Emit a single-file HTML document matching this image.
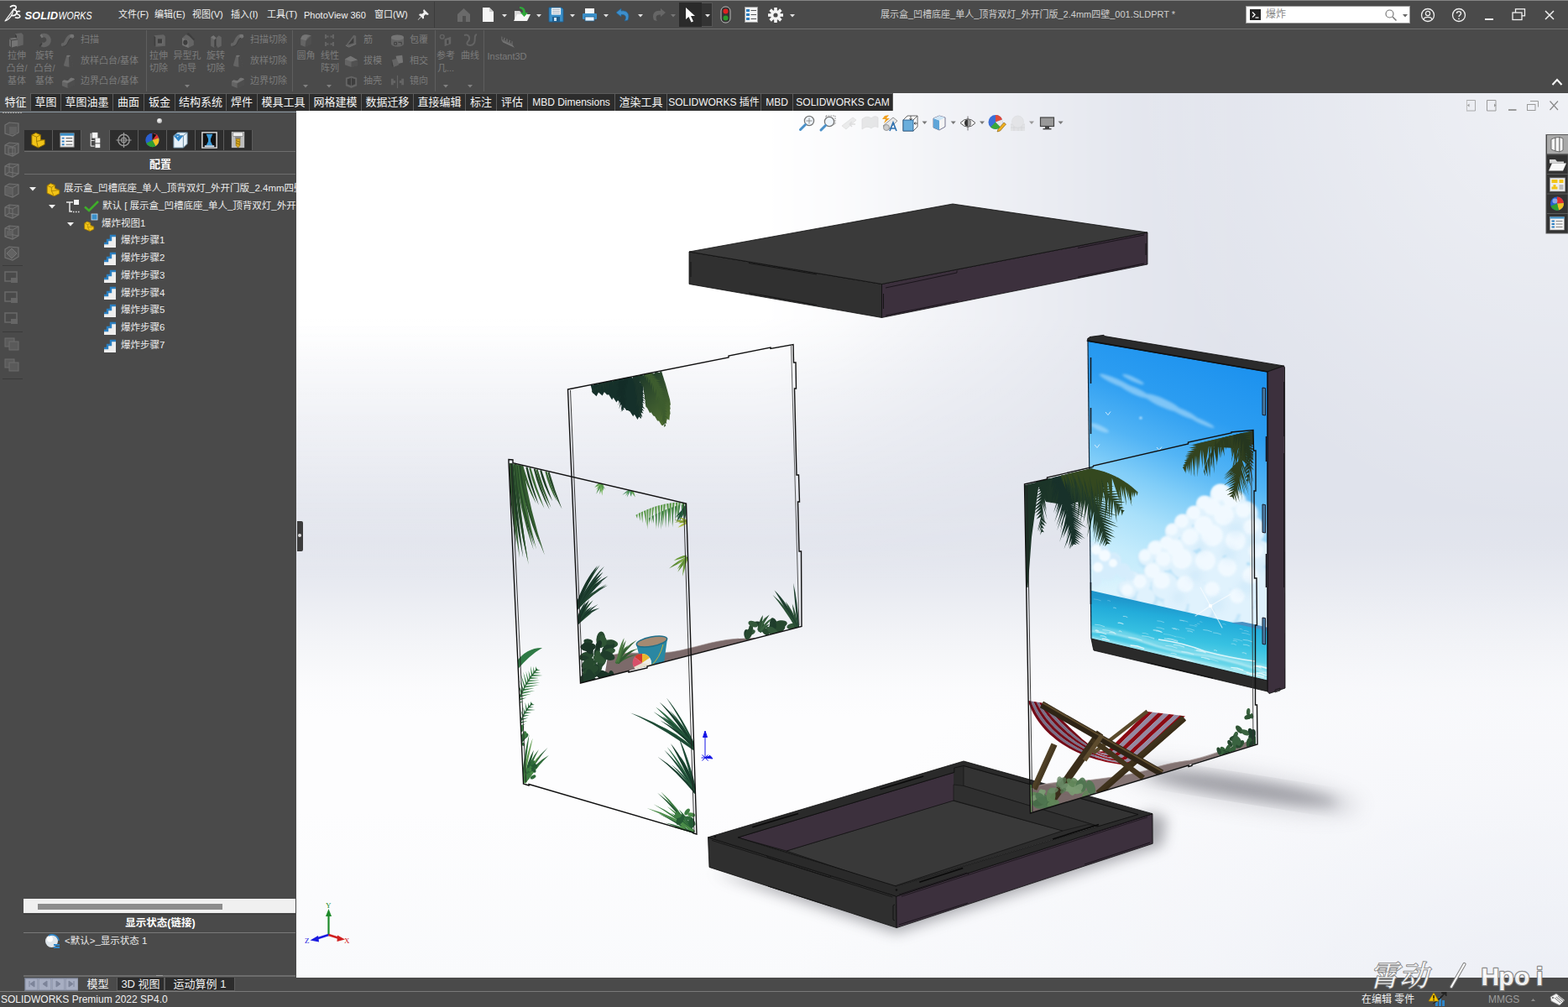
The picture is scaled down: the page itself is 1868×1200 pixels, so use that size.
<!DOCTYPE html>
<html lang="zh"><head><meta charset="utf-8"><title>SOLIDWORKS</title>
<style>
html,body{margin:0;padding:0;background:#4a4a4a;}
body{width:1868px;height:1200px;position:relative;overflow:hidden;font-family:"Liberation Sans",sans-serif;font-size:12px;color:#e8e8e8;}
.abs{position:absolute}
.tx{position:absolute;white-space:nowrap;line-height:1.2;pointer-events:none;font-family:"Liberation Sans","Noto Sans CJK SC",sans-serif}

#vp{position:absolute;left:353px;top:111px;width:1515px;height:1054px;background:#fff;overflow:hidden}
#title{position:absolute;left:0;top:0;width:1868px;height:35px;background:#4a4a4a;border-top:1px solid #858585;border-bottom:1px solid #707070;box-sizing:border-box}
.t{position:absolute;white-space:nowrap;line-height:14px;height:14px}
.menu{color:#f2f2f2;font-size:11px}
.dis{color:#7c7c7c;font-size:11px;text-align:center}
.sep{position:absolute;width:1px;background:#5e5e5e;top:36px;height:73px}
#tabs{position:absolute;left:0;top:111px;height:22px;width:1064px}
.tab{position:absolute;top:0;height:21px;box-sizing:border-box;background:#2c2c2c;border:1px solid #5c5c5c;border-bottom:none;color:#f4f4f4;font-size:13px;line-height:20px;text-align:center;white-space:nowrap;overflow:hidden}
.tab.sel{background:#4a4a4a;border-color:#4a4a4a}
#left{position:absolute;left:0;top:133px;width:353px;height:1031px;background:#4a4a4a;overflow:hidden}
.fmtab{position:absolute;top:22px;height:24px;width:33px;background:#2d2d2d;border-right:1px solid #5c5c5c;box-sizing:content-box}
.row{position:absolute;white-space:nowrap;font-size:11.5px;color:#ececec;line-height:16px;height:16px}
.hl{position:absolute;height:1px;background:#6e6e6e}
#btabs{position:absolute;left:0;top:1165px;width:1868px;height:16px;background:#4a4a4a}
.btab{position:absolute;top:0;height:16px;box-sizing:border-box;background:#2c2c2c;border:1px solid #5c5c5c;border-top:none;color:#f0f0f0;font-size:13px;line-height:16px;text-align:center;white-space:nowrap}
#status{position:absolute;left:0;top:1181px;width:1868px;height:19px;background:#4a4a4a;border-top:1px solid #7a7a7a;box-sizing:border-box}

</style></head><body>
<div id="vp"><svg width="1515" height="1054" viewBox="353 111 1515 1054" style="display:block"><defs><linearGradient id="wv" gradientUnits="userSpaceOnUse" x1="0" y1="111" x2="0" y2="700"><stop offset="0.4567" stop-color="#fff" stop-opacity="1"/><stop offset="0.4907" stop-color="#fff" stop-opacity="0.93"/><stop offset="0.5756" stop-color="#fff" stop-opacity="0.72"/><stop offset="0.6604" stop-color="#fff" stop-opacity="0.53"/><stop offset="0.7453" stop-color="#fff" stop-opacity="0.36"/><stop offset="0.8302" stop-color="#fff" stop-opacity="0.2"/><stop offset="0.8981" stop-color="#fff" stop-opacity="0.1"/><stop offset="0.9830" stop-color="#fff" stop-opacity="0"/></linearGradient>
<linearGradient id="wh" gradientUnits="userSpaceOnUse" x1="353" y1="0" x2="1868" y2="0"><stop offset="0.3611" stop-color="#ffffff"/><stop offset="0.4271" stop-color="#dbdbdb"/><stop offset="0.4997" stop-color="#999999"/><stop offset="0.5921" stop-color="#545454"/><stop offset="0.6581" stop-color="#262626"/><stop offset="0.7241" stop-color="#0a0a0a"/><stop offset="0.7703" stop-color="#000000"/></linearGradient>
<mask id="mh" maskUnits="userSpaceOnUse" x="353" y="111" width="1515" height="600"><rect x="353" y="111" width="1515" height="600" fill="url(#wh)"/></mask>
<linearGradient id="bgw" gradientUnits="userSpaceOnUse" x1="0" y1="600" x2="0" y2="1165">
<stop offset="0" stop-color="#fff" stop-opacity="0"/><stop offset="0.088" stop-color="#fff" stop-opacity="0.06"/><stop offset="0.177" stop-color="#fff" stop-opacity="0.28"/><stop offset="0.283" stop-color="#fefefe" stop-opacity="0.62"/><stop offset="0.389" stop-color="#fdfdfe" stop-opacity="0.93"/><stop offset="0.45" stop-color="#fdfdfe" stop-opacity="1"/><stop offset="0.65" stop-color="#fdfdfe" stop-opacity="1"/><stop offset="1" stop-color="#f9fafc" stop-opacity="1"/></linearGradient>
<linearGradient id="bgr" gradientUnits="userSpaceOnUse" x1="1300" y1="0" x2="1868" y2="0">
<stop offset="0" stop-color="#f3f4fa" stop-opacity="0"/><stop offset="1" stop-color="#f1f3f9" stop-opacity="1"/></linearGradient>
<radialGradient id="bgtr" gradientUnits="userSpaceOnUse" cx="1868" cy="111" r="520"><stop offset="0" stop-color="#fff" stop-opacity="0.5"/><stop offset="1" stop-color="#fff" stop-opacity="0"/></radialGradient>
<radialGradient id="bgbr" gradientUnits="userSpaceOnUse" cx="1868" cy="1240" r="620" gradientTransform="translate(1868 1240) scale(1.5 1) translate(-1868 -1240)"><stop offset="0" stop-color="#e6e9f2" stop-opacity="0.75"/><stop offset="0.5" stop-color="#e6e9f2" stop-opacity="0.3"/><stop offset="1" stop-color="#e6e9f2" stop-opacity="0"/></radialGradient>
<filter id="b12" x="-30%" y="-60%" width="160%" height="220%"><feGaussianBlur stdDeviation="12"/></filter>
<filter id="b4" x="-20%" y="-20%" width="140%" height="140%"><feGaussianBlur stdDeviation="4"/></filter>
<filter id="b8" x="-30%" y="-30%" width="160%" height="160%"><feGaussianBlur stdDeviation="8"/></filter>
<filter id="b2" x="-20%" y="-20%" width="140%" height="140%"><feGaussianBlur stdDeviation="1.6"/></filter>
<filter id="b1" x="-20%" y="-20%" width="140%" height="140%"><feGaussianBlur stdDeviation="0.8"/></filter>
<clipPath id="cpic"><polygon points="1296.0,406.0 1510.0,443.0 1510.0,811.0 1300.0,761.0"/></clipPath><linearGradient id="sky" gradientUnits="userSpaceOnUse" x1="1470" y1="420" x2="1345" y2="725">
<stop offset="0" stop-color="#1a90ee"/><stop offset="0.25" stop-color="#2c9df1"/><stop offset="0.42" stop-color="#52b4f5"/><stop offset="0.55" stop-color="#80cdf8"/><stop offset="0.68" stop-color="#a9e0fa"/><stop offset="0.82" stop-color="#c6ecfc"/><stop offset="1" stop-color="#d6f2fd"/></linearGradient>
<linearGradient id="sea" gradientUnits="userSpaceOnUse" x1="1405" y1="722" x2="1395" y2="800">
<stop offset="0" stop-color="#1e96cc"/><stop offset="0.18" stop-color="#23acda"/><stop offset="0.5" stop-color="#38c2e2"/><stop offset="1" stop-color="#8ae4ee"/></linearGradient>
<clipPath id="cbg"><polygon points="676.5,464.0 945.0,410.5 955.0,746.5 691.5,814.0"/></clipPath><linearGradient id="lobe" gradientUnits="userSpaceOnUse" x1="760" y1="450" x2="800" y2="500"><stop offset="0" stop-color="#1f3a2a"/><stop offset="1" stop-color="#4f6e31"/></linearGradient><clipPath id="cfg"><polygon points="606.0,550.5 817.5,600.0 830.0,994.0 623.5,932.5"/></clipPath><clipPath id="crg"><polygon points="1220.5,577.0 1493.0,513.0 1496.0,887.0 1227.5,969.0"/></clipPath></defs><rect x="353" y="111" width="1515" height="1054" fill="#e0e3ec"/><rect x="353" y="111" width="1515" height="600" fill="url(#wv)" mask="url(#mh)"/>
<rect x="353" y="600" width="1515" height="565" fill="url(#bgw)"/>
<rect x="1348" y="111" width="520" height="520" fill="url(#bgtr)"/>
<rect x="800" y="600" width="1068" height="565" fill="url(#bgbr)"/>
<polygon points="850.0,1040.0 1068.0,1112.0 1385.0,1008.0 1390.0,975.0 1372.0,968.0 1068.0,1068.0" fill="#6a6a72" stroke="none" stroke-width="0.8" filter="url(#b8)" opacity="0.55"/>
<ellipse cx="1480" cy="939" rx="115" ry="11" transform="rotate(9 1480 939)" fill="#66666e" opacity="0.5" filter="url(#b8)"/>
<ellipse cx="1480" cy="940" rx="140" ry="20" transform="rotate(9 1480 940)" fill="#70707a" opacity="0.25" filter="url(#b12)"/>
<polygon points="821.0,300.0 1050.5,338.5 1050.5,378.5 821.0,338.5" fill="#303030" stroke="#0c0c0c" stroke-width="0.8" />
<polygon points="1050.5,338.5 1367.0,277.0 1367.0,315.0 1050.5,378.5" fill="#3c303d" stroke="#0c0c0c" stroke-width="0.8" />
<polygon points="821.0,300.0 1135.0,243.0 1367.0,277.0 1050.5,338.5" fill="#3a3a3a" stroke="#0c0c0c" stroke-width="0.8" />
<polyline points="892.0,313.5 973.0,327.0" fill="none" stroke="#141414" stroke-width="1" />
<polyline points="892.0,349.0 973.0,363.5" fill="none" stroke="#141414" stroke-width="1" />
<polyline points="1055.0,343.0 1140.0,325.0 1140.0,322.5" fill="none" stroke="#1a141b" stroke-width="1" />
<polyline points="1055.0,376.0 1141.0,358.5" fill="none" stroke="#1a141b" stroke-width="1" />
<polyline points="1284.0,295.5 1363.0,280.0" fill="none" stroke="#1a141b" stroke-width="1" />
<polyline points="1284.0,330.0 1363.0,314.0" fill="none" stroke="#1a141b" stroke-width="1" />
<polyline points="823.0,312.0 823.0,330.0" fill="none" stroke="#141414" stroke-width="1" />
<polyline points="1052.5,350.0 1052.5,368.0" fill="none" stroke="#141414" stroke-width="1" />
<polyline points="1365.0,290.0 1365.0,304.0" fill="none" stroke="#141414" stroke-width="1" />
<polygon points="843.5,997.8 1067.8,1068.1 1068.2,1105.6 845.0,1033.4" fill="#2f2f2f" stroke="#0c0c0c" stroke-width="0.8" />
<polygon points="1067.8,1068.1 1373.0,969.7 1373.2,1005.3 1068.2,1105.6" fill="#3c303d" stroke="#0c0c0c" stroke-width="0.8" />
<polygon points="876.0,997.5 1136.8,913.8 1149.0,911.5 1357.0,970.0 1067.5,1056.0" fill="#2c2c2c" stroke="none" stroke-width="0.8" />
<polygon points="936.9,1014.0 1135.0,954.0 1266.0,990.0 1064.0,1056.5" fill="#393939" stroke="#111" stroke-width="0.7" />
<polygon points="879.0,998.0 1136.8,920.4 1136.8,953.8 936.9,1014.0" fill="#3c303d" stroke="#111" stroke-width="0.7" />
<polygon points="1136.0,916.5 1148.0,912.5 1148.0,936.5 1136.0,935.0" fill="#2a2a2a" stroke="none" stroke-width="0.8" />
<polygon points="1148.0,912.5 1356.0,970.6 1310.0,985.0 1148.0,936.5" fill="#333333" stroke="#111" stroke-width="0.6" />
<polygon points="1136.0,935.0 1148.0,936.5 1310.0,985.0 1296.0,982.5 1266.0,990.0 1136.0,953.8" fill="#2f2f2f" stroke="#111" stroke-width="0.6" />
<path d="M843.5,997.8 1148.0,907.0 1373.0,969.7 1067.8,1068.1Z M879.0,998.0 1136.8,920.4 1136.8,915.0 1148.0,912.5 1356.0,970.6 1067.5,1056.0Z" fill="#2a2a2a" fill-rule="evenodd" stroke="#0c0c0c" stroke-width="0.8"/>
<polyline points="896.2,985.8 951.0,969.4" fill="none" stroke="#0a0a0a" stroke-width="1.6" />
<polyline points="1048.5,940.4 1100.2,924.9" fill="none" stroke="#0a0a0a" stroke-width="1.6" />
<polyline points="1095.3,1051.3 1147.2,1034.5" fill="none" stroke="#0a0a0a" stroke-width="1.6" />
<polyline points="1254.0,1000.1 1309.0,982.4" fill="none" stroke="#0a0a0a" stroke-width="1.6" />
<polyline points="848.0,1001.4 1063.3,1068.9" fill="none" stroke="#111" stroke-width="0.8" />
<polyline points="1073.9,1068.3 1366.9,973.9" fill="none" stroke="#1a141b" stroke-width="0.8" />
<polyline points="913.0,1019.0 915.0,1022.0 988.0,1045.5 990.0,1044.0" fill="none" stroke="#141414" stroke-width="1" />
<polyline points="915.0,1056.0 990.0,1080.0" fill="none" stroke="#141414" stroke-width="1" />
<polyline points="1071.0,1066.0 1152.0,1040.0 1154.0,1042.0" fill="none" stroke="#1a141b" stroke-width="1" />
<polyline points="1071.0,1102.0 1153.0,1076.0" fill="none" stroke="#1a141b" stroke-width="1" />
<polyline points="1292.0,996.0 1370.0,971.0" fill="none" stroke="#1a141b" stroke-width="1" />
<polyline points="1292.0,1030.0 1370.0,1004.0" fill="none" stroke="#1a141b" stroke-width="1" />
<polyline points="1066.0,1078.0 1064.0,1079.0 1064.0,1096.0 1066.0,1097.0" fill="none" stroke="#141414" stroke-width="1" />
<circle cx="852" cy="997" r="1.2" fill="#111"/><circle cx="1068" cy="1060.5" r="1.3" fill="#111"/>
<g clip-path="url(#cpic)"><polygon points="1296.0,406.0 1510.0,443.0 1510.0,811.0 1300.0,761.0" fill="url(#sky)" stroke="none" stroke-width="0.8" /><g filter="url(#b2)" opacity="0.55"><ellipse cx="1330" cy="455" rx="22" ry="3.5" fill="#bfe4fb" transform="rotate(24 1330 455)"/><ellipse cx="1352" cy="466" rx="20" ry="4" fill="#bfe4fb" transform="rotate(24 1352 466)"/><ellipse cx="1385" cy="480" rx="24" ry="5" fill="#bfe4fb" transform="rotate(24 1385 480)"/><ellipse cx="1410" cy="492" rx="18" ry="3.5" fill="#bfe4fb" transform="rotate(24 1410 492)"/><ellipse cx="1432" cy="503" rx="16" ry="2.5" fill="#bfe4fb" transform="rotate(24 1432 503)"/><ellipse cx="1350" cy="452" rx="14" ry="2.5" fill="#bfe4fb" transform="rotate(24 1350 452)"/><ellipse cx="1310" cy="510" rx="12" ry="3" fill="#bfe4fb" transform="rotate(24 1310 510)"/></g><ellipse cx="1400" cy="725" rx="130" ry="40" fill="#dff4fd" opacity="0.75" filter="url(#b8)"/><g filter="url(#b2)" opacity="0.6"><circle cx="1456.5" cy="592.5" r="14.5" fill="#b4dcf7"/><circle cx="1471.5" cy="600.5" r="15.5" fill="#b4dcf7"/><circle cx="1484.5" cy="614.5" r="16.5" fill="#b4dcf7"/><circle cx="1448.5" cy="608.5" r="14.5" fill="#b4dcf7"/><circle cx="1463.5" cy="622.5" r="19.5" fill="#b4dcf7"/><circle cx="1491.5" cy="634.5" r="18.5" fill="#b4dcf7"/><circle cx="1438.5" cy="630.5" r="16.5" fill="#b4dcf7"/><circle cx="1421.5" cy="644.5" r="15.5" fill="#b4dcf7"/><circle cx="1449.5" cy="647.5" r="21.5" fill="#b4dcf7"/><circle cx="1479.5" cy="654.5" r="21.5" fill="#b4dcf7"/><circle cx="1501.5" cy="662.5" r="17.5" fill="#b4dcf7"/><circle cx="1403.5" cy="657.5" r="14.5" fill="#b4dcf7"/><circle cx="1389.5" cy="670.5" r="13.5" fill="#b4dcf7"/><circle cx="1413.5" cy="674.5" r="19.5" fill="#b4dcf7"/><circle cx="1441.5" cy="677.5" r="21.5" fill="#b4dcf7"/><circle cx="1469.5" cy="684.5" r="21.5" fill="#b4dcf7"/><circle cx="1496.5" cy="692.5" r="19.5" fill="#b4dcf7"/><circle cx="1376.5" cy="684.5" r="13.5" fill="#b4dcf7"/><circle cx="1361.5" cy="697.5" r="12.5" fill="#b4dcf7"/><circle cx="1389.5" cy="700.5" r="17.5" fill="#b4dcf7"/><circle cx="1419.5" cy="704.5" r="19.5" fill="#b4dcf7"/><circle cx="1449.5" cy="710.5" r="19.5" fill="#b4dcf7"/><circle cx="1479.5" cy="717.5" r="18.5" fill="#b4dcf7"/><circle cx="1346.5" cy="706.5" r="10.5" fill="#b4dcf7"/><circle cx="1366.5" cy="714.5" r="12.5" fill="#b4dcf7"/><circle cx="1401.5" cy="722.5" r="15.5" fill="#b4dcf7"/><circle cx="1431.5" cy="728.5" r="15.5" fill="#b4dcf7"/><circle cx="1506.5" cy="707.5" r="15.5" fill="#b4dcf7"/><circle cx="1509.5" cy="727.5" r="15.5" fill="#b4dcf7"/><circle cx="1461.5" cy="732.5" r="15.5" fill="#b4dcf7"/><circle cx="1491.5" cy="740.5" r="14.5" fill="#b4dcf7"/><circle cx="1367.5" cy="666.5" r="11.5" fill="#b4dcf7"/><circle cx="1379.5" cy="657.5" r="12.5" fill="#b4dcf7"/><circle cx="1393.5" cy="652.5" r="12.5" fill="#b4dcf7"/><circle cx="1399.5" cy="636.5" r="11.5" fill="#b4dcf7"/><circle cx="1411.5" cy="626.5" r="12.5" fill="#b4dcf7"/><circle cx="1425.5" cy="616.5" r="12.5" fill="#b4dcf7"/><circle cx="1437.5" cy="604.5" r="12.5" fill="#b4dcf7"/><circle cx="1351.5" cy="692.5" r="10.5" fill="#b4dcf7"/><circle cx="1341.5" cy="702.5" r="9.5" fill="#b4dcf7"/></g><g filter="url(#b1)" opacity="1"><circle cx="1455" cy="590" r="13" fill="#e0f2fd"/><circle cx="1470" cy="598" r="14" fill="#e0f2fd"/><circle cx="1483" cy="612" r="15" fill="#e0f2fd"/><circle cx="1447" cy="606" r="13" fill="#e0f2fd"/><circle cx="1462" cy="620" r="18" fill="#e0f2fd"/><circle cx="1490" cy="632" r="17" fill="#e0f2fd"/><circle cx="1437" cy="628" r="15" fill="#e0f2fd"/><circle cx="1420" cy="642" r="14" fill="#e0f2fd"/><circle cx="1448" cy="645" r="20" fill="#e0f2fd"/><circle cx="1478" cy="652" r="20" fill="#e0f2fd"/><circle cx="1500" cy="660" r="16" fill="#e0f2fd"/><circle cx="1402" cy="655" r="13" fill="#e0f2fd"/><circle cx="1388" cy="668" r="12" fill="#e0f2fd"/><circle cx="1412" cy="672" r="18" fill="#e0f2fd"/><circle cx="1440" cy="675" r="20" fill="#e0f2fd"/><circle cx="1468" cy="682" r="20" fill="#e0f2fd"/><circle cx="1495" cy="690" r="18" fill="#e0f2fd"/><circle cx="1375" cy="682" r="12" fill="#e0f2fd"/><circle cx="1360" cy="695" r="11" fill="#e0f2fd"/><circle cx="1388" cy="698" r="16" fill="#e0f2fd"/><circle cx="1418" cy="702" r="18" fill="#e0f2fd"/><circle cx="1448" cy="708" r="18" fill="#e0f2fd"/><circle cx="1478" cy="715" r="17" fill="#e0f2fd"/><circle cx="1345" cy="704" r="9" fill="#e0f2fd"/><circle cx="1365" cy="712" r="11" fill="#e0f2fd"/><circle cx="1400" cy="720" r="14" fill="#e0f2fd"/><circle cx="1430" cy="726" r="14" fill="#e0f2fd"/><circle cx="1505" cy="705" r="14" fill="#e0f2fd"/><circle cx="1508" cy="725" r="14" fill="#e0f2fd"/><circle cx="1460" cy="730" r="14" fill="#e0f2fd"/><circle cx="1490" cy="738" r="13" fill="#e0f2fd"/><circle cx="1366" cy="664" r="10" fill="#e0f2fd"/><circle cx="1378" cy="655" r="11" fill="#e0f2fd"/><circle cx="1392" cy="650" r="11" fill="#e0f2fd"/><circle cx="1398" cy="634" r="10" fill="#e0f2fd"/><circle cx="1410" cy="624" r="11" fill="#e0f2fd"/><circle cx="1424" cy="614" r="11" fill="#e0f2fd"/><circle cx="1436" cy="602" r="11" fill="#e0f2fd"/><circle cx="1350" cy="690" r="9" fill="#e0f2fd"/><circle cx="1340" cy="700" r="8" fill="#e0f2fd"/></g><g filter="url(#b2)" opacity="0.9"><circle cx="1364" cy="662" r="7" fill="#f3faff"/><circle cx="1376" cy="653" r="8" fill="#f3faff"/><circle cx="1390" cy="647" r="8" fill="#f3faff"/><circle cx="1396" cy="631" r="7" fill="#f3faff"/><circle cx="1408" cy="621" r="8" fill="#f3faff"/><circle cx="1422" cy="611" r="8" fill="#f3faff"/><circle cx="1434" cy="599" r="8" fill="#f3faff"/><circle cx="1453" cy="587" r="10" fill="#f3faff"/><circle cx="1467" cy="595" r="10" fill="#f3faff"/><circle cx="1444" cy="604" r="10" fill="#f3faff"/><circle cx="1458" cy="614" r="12" fill="#f3faff"/><circle cx="1481" cy="608" r="9" fill="#f3faff"/><circle cx="1434" cy="626" r="11" fill="#f3faff"/><circle cx="1418" cy="640" r="10" fill="#f3faff"/><circle cx="1444" cy="638" r="13" fill="#f3faff"/><circle cx="1472" cy="644" r="12" fill="#f3faff"/><circle cx="1400" cy="653" r="10" fill="#f3faff"/><circle cx="1386" cy="666" r="9" fill="#f3faff"/><circle cx="1408" cy="666" r="12" fill="#f3faff"/><circle cx="1436" cy="668" r="12" fill="#f3faff"/><circle cx="1373" cy="680" r="9" fill="#f3faff"/><circle cx="1358" cy="693" r="8" fill="#f3faff"/><circle cx="1384" cy="692" r="10" fill="#f3faff"/><circle cx="1412" cy="696" r="10" fill="#f3faff"/><circle cx="1343" cy="703" r="7" fill="#f3faff"/><circle cx="1490" cy="628" r="9" fill="#f3faff"/><circle cx="1496" cy="656" r="9" fill="#f3faff"/><circle cx="1462" cy="676" r="11" fill="#f3faff"/><circle cx="1490" cy="686" r="10" fill="#f3faff"/><circle cx="1444" cy="702" r="9" fill="#f3faff"/><circle cx="1474" cy="710" r="9" fill="#f3faff"/></g><g filter="url(#b4)" opacity="0.45"><circle cx="1472" cy="630" r="9" fill="#c4e4f8"/><circle cx="1494" cy="646" r="8" fill="#c4e4f8"/><circle cx="1430" cy="652" r="7" fill="#c4e4f8"/><circle cx="1464" cy="660" r="9" fill="#c4e4f8"/><circle cx="1424" cy="686" r="8" fill="#c4e4f8"/><circle cx="1484" cy="700" r="9" fill="#c4e4f8"/><circle cx="1450" cy="720" r="9" fill="#c4e4f8"/><circle cx="1404" cy="712" r="7" fill="#c4e4f8"/><circle cx="1506" cy="676" r="8" fill="#c4e4f8"/></g><g filter="url(#b1)" opacity="0.95"><circle cx="1303" cy="654" r="9" fill="#d5edfc"/><circle cx="1312" cy="660" r="11" fill="#d5edfc"/><circle cx="1326" cy="668" r="10" fill="#d5edfc"/><circle cx="1306" cy="672" r="10" fill="#d5edfc"/><circle cx="1320" cy="680" r="11" fill="#d5edfc"/><circle cx="1338" cy="680" r="9" fill="#d5edfc"/><circle cx="1304" cy="690" r="9" fill="#d5edfc"/><circle cx="1346" cy="686" r="6" fill="#d5edfc"/></g><g filter="url(#b1)" opacity="0.95"><circle cx="1306" cy="655" r="6" fill="#f6fcff"/><circle cx="1316" cy="662" r="7" fill="#f6fcff"/><circle cx="1308" cy="676" r="6" fill="#f6fcff"/><circle cx="1326" cy="671" r="5" fill="#f6fcff"/></g><polygon points="1299.0,703.5 1511.0,751.5 1511.0,812.0 1299.0,762.0" fill="url(#sea)" stroke="none" stroke-width="0.8" /><polygon points="1468.0,742.0 1480.0,741.0 1492.0,743.5 1511.0,748.0 1511.0,752.0 1468.0,742.5" fill="#4a90c2" stroke="none" stroke-width="0.8" /><g><path d="M1414.3 751.8 q3.4 -0.4 6.7 1.5" stroke="#fff" stroke-width="0.9" fill="none" opacity="0.48"/><path d="M1302.8 713.9 q4.5 0.1 8.9 2.0" stroke="#fff" stroke-width="0.6" fill="none" opacity="0.37"/><path d="M1398.8 783.9 q9.4 0.4 18.9 4.3" stroke="#fff" stroke-width="1.4" fill="none" opacity="0.63"/><path d="M1433.3 750.5 q5.3 0.1 10.6 2.4" stroke="#fff" stroke-width="0.9" fill="none" opacity="0.43"/><path d="M1313.4 750.5 q7.4 0.1 14.8 3.4" stroke="#fff" stroke-width="0.9" fill="none" opacity="0.62"/><path d="M1481.8 751.5 q3.0 -0.2 5.9 1.4" stroke="#fff" stroke-width="0.7" fill="none" opacity="0.39"/><path d="M1493.4 794.2 q4.7 -0.5 9.3 2.1" stroke="#fff" stroke-width="1.1" fill="none" opacity="0.73"/><path d="M1484.6 801.5 q2.4 -1.2 4.8 1.1" stroke="#fff" stroke-width="0.9" fill="none" opacity="0.43"/><path d="M1391.6 781.0 q7.3 -0.1 14.7 3.4" stroke="#fff" stroke-width="1.2" fill="none" opacity="0.53"/><path d="M1373.7 750.8 q5.1 -0.2 10.1 2.3" stroke="#fff" stroke-width="1.2" fill="none" opacity="0.53"/><path d="M1495.1 793.1 q8.2 0.3 16.5 3.8" stroke="#fff" stroke-width="1.3" fill="none" opacity="0.80"/><path d="M1480.7 762.3 q5.8 0.2 11.6 2.6" stroke="#fff" stroke-width="0.8" fill="none" opacity="0.50"/><path d="M1344.3 759.5 q8.2 0.3 16.4 3.7" stroke="#fff" stroke-width="0.9" fill="none" opacity="0.62"/><path d="M1479.3 754.2 q5.0 0.2 10.0 2.3" stroke="#fff" stroke-width="0.8" fill="none" opacity="0.36"/><path d="M1331.7 742.3 q3.3 -0.6 6.7 1.5" stroke="#fff" stroke-width="1.2" fill="none" opacity="0.60"/><path d="M1429.1 740.9 q1.6 -0.5 3.3 0.8" stroke="#fff" stroke-width="0.6" fill="none" opacity="0.40"/><path d="M1505.9 804.2 q6.0 -0.3 12.0 2.7" stroke="#fff" stroke-width="1.0" fill="none" opacity="0.90"/><path d="M1426.0 743.2 q1.6 -0.6 3.2 0.7" stroke="#fff" stroke-width="0.7" fill="none" opacity="0.37"/><path d="M1332.8 752.2 q1.8 -1.1 3.6 0.8" stroke="#fff" stroke-width="0.9" fill="none" opacity="0.72"/><path d="M1488.3 803.3 q5.0 -0.6 10.0 2.3" stroke="#fff" stroke-width="1.3" fill="none" opacity="0.62"/><path d="M1425.1 775.2 q5.8 -0.2 11.5 2.6" stroke="#fff" stroke-width="1.5" fill="none" opacity="0.62"/><path d="M1390.6 760.8 q6.4 0.0 12.9 2.9" stroke="#fff" stroke-width="0.8" fill="none" opacity="0.44"/><path d="M1409.4 785.7 q6.7 -0.3 13.3 3.0" stroke="#fff" stroke-width="1.1" fill="none" opacity="0.36"/><path d="M1304.2 744.2 q6.0 -0.1 12.0 2.7" stroke="#fff" stroke-width="0.7" fill="none" opacity="0.61"/><path d="M1397.9 768.1 q6.6 -0.0 13.3 3.0" stroke="#fff" stroke-width="1.3" fill="none" opacity="0.50"/><path d="M1304.7 751.4 q2.0 -1.2 4.0 0.9" stroke="#fff" stroke-width="1.6" fill="none" opacity="0.68"/><path d="M1395.8 748.4 q4.6 -0.1 9.1 2.1" stroke="#fff" stroke-width="0.8" fill="none" opacity="0.42"/><path d="M1377.5 747.7 q4.8 -0.1 9.7 2.2" stroke="#fff" stroke-width="0.8" fill="none" opacity="0.43"/><path d="M1305.7 753.0 q6.2 -0.2 12.5 2.8" stroke="#fff" stroke-width="0.9" fill="none" opacity="0.72"/><path d="M1468.8 763.4 q2.7 -0.5 5.4 1.2" stroke="#fff" stroke-width="0.8" fill="none" opacity="0.39"/><path d="M1321.4 753.5 q4.1 -0.7 8.1 1.9" stroke="#fff" stroke-width="1.4" fill="none" opacity="0.51"/><path d="M1479.7 778.0 q2.6 -0.8 5.2 1.2" stroke="#fff" stroke-width="1.1" fill="none" opacity="0.46"/><path d="M1394.7 778.5 q3.5 -0.9 7.0 1.6" stroke="#fff" stroke-width="1.2" fill="none" opacity="0.42"/><path d="M1469.4 761.5 q5.4 0.1 10.9 2.5" stroke="#fff" stroke-width="0.7" fill="none" opacity="0.38"/><path d="M1434.8 784.6 q8.4 0.2 16.7 3.8" stroke="#fff" stroke-width="0.7" fill="none" opacity="0.53"/><path d="M1466.7 767.1 q3.0 -0.5 6.0 1.4" stroke="#fff" stroke-width="0.8" fill="none" opacity="0.44"/><path d="M1386.0 755.4 q7.3 0.3 14.6 3.3" stroke="#fff" stroke-width="0.6" fill="none" opacity="0.40"/><path d="M1484.8 801.8 q10.6 0.7 21.2 4.8" stroke="#fff" stroke-width="1.8" fill="none" opacity="0.60"/><path d="M1346.6 769.0 q8.3 0.1 16.6 3.8" stroke="#fff" stroke-width="1.4" fill="none" opacity="0.83"/><path d="M1360.7 754.4 q3.9 -0.6 7.7 1.8" stroke="#fff" stroke-width="0.7" fill="none" opacity="0.44"/><path d="M1360.3 757.6 q7.4 0.2 14.9 3.4" stroke="#fff" stroke-width="1.4" fill="none" opacity="0.37"/><path d="M1494.0 793.4 q8.6 0.4 17.2 3.9" stroke="#fff" stroke-width="1.2" fill="none" opacity="0.77"/><path d="M1456.5 743.5 q2.0 -0.4 4.0 0.9" stroke="#fff" stroke-width="0.6" fill="none" opacity="0.36"/><path d="M1386.9 760.8 q8.0 0.4 16.1 3.7" stroke="#fff" stroke-width="0.9" fill="none" opacity="0.58"/><path d="M1480.9 768.1 q4.0 -0.3 7.9 1.8" stroke="#fff" stroke-width="0.8" fill="none" opacity="0.53"/><path d="M1412.3 748.8 q5.4 0.1 10.8 2.5" stroke="#fff" stroke-width="0.9" fill="none" opacity="0.38"/><path d="M1469.3 797.3 q9.0 0.3 18.0 4.1" stroke="#fff" stroke-width="1.4" fill="none" opacity="0.35"/><path d="M1310.5 757.9 q3.9 -0.8 7.8 1.8" stroke="#fff" stroke-width="1.2" fill="none" opacity="0.50"/><path d="M1399.3 758.6 q6.4 0.1 12.8 2.9" stroke="#fff" stroke-width="0.6" fill="none" opacity="0.35"/><path d="M1326.2 724.2 q1.8 -0.6 3.6 0.8" stroke="#fff" stroke-width="0.9" fill="none" opacity="0.49"/><path d="M1405.4 739.3 q2.7 -0.4 5.4 1.2" stroke="#fff" stroke-width="0.7" fill="none" opacity="0.38"/><path d="M1423.2 774.9 q4.3 -0.6 8.5 1.9" stroke="#fff" stroke-width="0.9" fill="none" opacity="0.43"/><path d="M1416.7 744.8 q4.5 -0.0 8.9 2.0" stroke="#fff" stroke-width="0.6" fill="none" opacity="0.40"/><path d="M1378.4 739.8 q4.3 -0.1 8.6 2.0" stroke="#fff" stroke-width="0.7" fill="none" opacity="0.49"/><path d="M1430.8 783.4 q5.2 -0.5 10.3 2.4" stroke="#fff" stroke-width="1.2" fill="none" opacity="0.54"/><path d="M1388.3 769.3 q7.0 0.0 14.1 3.2" stroke="#fff" stroke-width="0.8" fill="none" opacity="0.57"/><path d="M1446.0 775.0 q2.0 -1.0 4.0 0.9" stroke="#fff" stroke-width="1.0" fill="none" opacity="0.51"/><path d="M1496.7 802.0 q4.8 -0.6 9.7 2.2" stroke="#fff" stroke-width="1.5" fill="none" opacity="0.84"/><path d="M1397.5 749.4 q2.1 -0.7 4.3 1.0" stroke="#fff" stroke-width="0.9" fill="none" opacity="0.54"/><path d="M1466.4 795.3 q7.5 -0.0 14.9 3.4" stroke="#fff" stroke-width="1.3" fill="none" opacity="0.75"/><path d="M1423.4 744.7 q1.5 -0.7 3.0 0.7" stroke="#fff" stroke-width="0.8" fill="none" opacity="0.37"/><path d="M1319.3 715.7 q1.8 -0.5 3.7 0.8" stroke="#fff" stroke-width="0.6" fill="none" opacity="0.41"/><path d="M1476.7 749.5 q1.9 -0.4 3.7 0.9" stroke="#fff" stroke-width="0.7" fill="none" opacity="0.39"/><path d="M1500.0 801.0 q6.5 -0.2 13.0 3.0" stroke="#fff" stroke-width="0.6" fill="none" opacity="0.77"/><path d="M1407.4 776.5 q7.4 0.1 14.9 3.4" stroke="#fff" stroke-width="1.4" fill="none" opacity="0.40"/><path d="M1312.8 761.4 q4.5 -0.7 9.0 2.0" stroke="#fff" stroke-width="1.6" fill="none" opacity="0.67"/><path d="M1337.8 734.4 q2.8 -0.5 5.5 1.3" stroke="#fff" stroke-width="1.0" fill="none" opacity="0.49"/><path d="M1377.2 752.0 q3.9 -0.4 7.9 1.8" stroke="#fff" stroke-width="0.9" fill="none" opacity="0.46"/><path d="M1405.1 738.9 q5.1 0.2 10.3 2.3" stroke="#fff" stroke-width="0.8" fill="none" opacity="0.39"/><path d="M1445.1 753.9 q4.9 0.0 9.7 2.2" stroke="#fff" stroke-width="0.8" fill="none" opacity="0.46"/></g><path d="M1300 752 q30 2 60 12 q40 14 80 18 q40 8 70 20" stroke="#e8fbfd" stroke-width="2.2" fill="none" opacity="0.7" filter="url(#b1)"/><path d="M1380 762 q30 4 55 14 q30 8 60 12" stroke="#ffffff" stroke-width="1.6" fill="none" opacity="0.8"/><path d="M1300 758 L1510 806 L1510 812 L1300 763Z" fill="#d8f7fa" opacity="0.55" filter="url(#b2)"/><path d="M1300 748 q40 4 70 16 q50 10 140 32" stroke="#c9f3f8" stroke-width="5" fill="none" opacity="0.35" filter="url(#b2)"/><g stroke="#fff" stroke-linecap="round" opacity="0.95"><path d="M1442 722 L1430 700 M1442 722 L1456 748" stroke-width="1.1" opacity="0.7"/><path d="M1442 722 L1466 708 M1442 722 L1424 734" stroke-width="1.1" opacity="0.7"/><circle cx="1442" cy="722" r="2.2" fill="#fff" stroke="none"/></g><circle cx="1359" cy="498" r="1.6" fill="#d8f0ff" opacity="0.9" filter="url(#b1)"/><path d="M1317 491 L1320 494.5 L1323 490.5" stroke="#eef8ff" stroke-width="0.8" fill="none"/><path d="M1304 530 L1307 533.5 L1310 529.5" stroke="#eef8ff" stroke-width="0.8" fill="none"/><path d="M1378 533 L1381 536.5 L1384 532.5" stroke="#eef8ff" stroke-width="0.8" fill="none"/><path d="M1326 610 L1329 613.5 L1332 609.5" stroke="#eef8ff" stroke-width="0.8" fill="none"/></g>
<polygon points="1295.0,406.5 1296.0,403.0 1298.0,402.5 1298.0,401.5 1315.0,399.3 1316.0,400.6 1529.5,436.0 1510.0,443.0" fill="#2b2b2b" stroke="#0a0a0a" stroke-width="0.8" />
<polygon points="1510.0,443.0 1529.5,436.0 1530.5,438.0 1531.0,820.0 1512.0,826.5 1510.0,824.0" fill="#3c303d" stroke="#0a0a0a" stroke-width="0.8" />
<polygon points="1300.0,761.0 1510.0,811.0 1510.0,824.0 1303.0,775.0 1302.0,771.0" fill="#2a2a2a" stroke="#0a0a0a" stroke-width="0.8" />
<polyline points="1296.0,406.0 1300.0,761.0" fill="none" stroke="#0d2436" stroke-width="1.2" />
<polyline points="1510.0,443.0 1510.0,811.0" fill="none" stroke="#141018" stroke-width="1.2" />
<polyline points="1296.0,406.0 1510.0,443.0" fill="none" stroke="#101010" stroke-width="1.4" />
<polyline points="1299.5,426.0 1299.5,457.0" fill="none" stroke="#15202a" stroke-width="1.6" />
<polyline points="1299.5,486.0 1299.5,517.0" fill="none" stroke="#15202a" stroke-width="1.6" />
<polyline points="1299.5,573.0 1299.5,597.0" fill="none" stroke="#15202a" stroke-width="1.6" />
<polyline points="1299.5,694.0 1299.5,720.0" fill="none" stroke="#15202a" stroke-width="1.6" />
<polygon points="1504.0,462.0 1507.5,462.6 1507.5,495.0 1504.0,494.4" fill="#4a7ea8" stroke="#151018" stroke-width="0.9" />
<polygon points="1504.0,601.0 1507.5,601.6 1507.5,635.0 1504.0,634.4" fill="#4a7ea8" stroke="#151018" stroke-width="0.9" />
<polygon points="1504.0,736.0 1507.5,736.6 1507.5,768.0 1504.0,767.4" fill="#4a7ea8" stroke="#151018" stroke-width="0.9" />
<polyline points="1529.5,455.0 1529.5,520.0" fill="none" stroke="#1a141b" stroke-width="1" />
<polyline points="1529.5,540.0 1529.5,700.0" fill="none" stroke="#1a141b" stroke-width="1" />
<polyline points="1508.5,520.0 1508.5,550.0" fill="none" stroke="#151018" stroke-width="1.5" />
<polyline points="1508.5,660.0 1508.5,700.0" fill="none" stroke="#151018" stroke-width="1.5" />
<polyline points="1365.0,789.0 1445.0,808.0" fill="none" stroke="#111" stroke-width="1.2" />
<polygon points="1519.0,822.0 1525.0,820.0 1525.0,823.0 1519.0,825.0" fill="none" stroke="#111" stroke-width="0.7" />
<g clip-path="url(#cbg)"><path d="M724 783 C735 776 760 779 790 778 C820 776 845 763 880 761 L905 760 L760 797 L720 806Z" fill="#7c6a6a"/><path d="M724 783 C735 776 760 779 790 778 C820 776 845 763 880 761" stroke="#9a8a88" stroke-width="1" fill="none" opacity="0.6"/><polygon points="703.0,456.5 706.8,459.2 708.9,455.3 712.6,457.8 714.8,454.2 718.6,457.0 720.7,453.0 724.4,455.6 726.6,451.8 730.5,455.2 732.4,450.7 736.0,452.7 738.3,449.5 742.3,452.9 744.2,448.3 747.6,449.6 750.1,447.2 754.2,451.0 756.0,446.0 758.9,452.3 760.0,451.6 762.4,456.2 764.0,457.2 766.0,460.0 766.4,465.3 765.8,466.0 766.1,470.8 765.5,472.0 766.1,478.0 765.2,478.0 765.9,484.2 765.0,484.0 764.8,490.4 763.0,490.5 762.8,496.8 761.0,497.0 759.5,499.9 755.8,493.8 754.2,496.3 750.6,490.6 748.0,489.0 746.2,489.0 743.2,484.2 741.3,483.7 738.4,479.4 736.0,477.0 734.4,479.5 730.7,473.7 729.1,476.4 725.3,470.3 723.1,470.4 720.0,467.0 717.6,471.5 713.0,467.5 710.6,472.2 706.0,468.0 705.5,466.1 704.0,460.3" fill="#15302a" stroke="none" stroke-width="0.8" /><polygon points="756.0,446.0 759.8,448.1 762.4,445.2 766.3,447.5 768.8,444.4 773.0,447.9 775.2,443.6 779.0,445.6 781.6,442.8 785.3,444.3 788.0,442.0 789.6,447.4 790.0,448.4 791.8,454.6 792.0,454.8 793.0,458.0 794.4,463.1 794.7,464.0 796.0,469.1 796.3,470.0 797.8,475.3 798.0,476.0 799.1,483.5 798.0,482.0 798.7,487.6 798.0,488.0 798.6,493.3 798.0,494.0 797.4,500.7 794.8,499.2 793.7,503.8 791.6,504.4 790.0,507.0 788.1,506.7 785.0,501.5 783.2,501.4 780.0,496.0 778.3,495.6 775.6,491.2 774.2,492.2 771.2,486.4 769.0,484.0 769.3,483.8 768.2,478.0 769.0,479.4 767.5,472.0 768.0,472.4 766.8,466.0 766.9,465.3 766.0,460.0 765.1,461.5 762.0,454.4 760.6,454.0 758.0,448.8" fill="url(#lobe)" stroke="none" stroke-width="0.8" /><path d="M748.6 438.9L749.6 451.0L746.4 442.7ZM748.6 438.9L741.4 442.4L746.4 442.7ZM747.6 440.5L748.7 451.5L745.5 444.5ZM747.6 440.5L741.3 444.2L745.5 444.5ZM746.7 442.2L748.0 458.7L744.8 446.3ZM746.7 442.2L737.5 447.3L744.8 446.3ZM745.8 444.0L745.6 458.9L744.1 448.2ZM745.8 444.0L737.8 449.1L744.1 448.2ZM745.0 445.9L747.2 458.6L743.5 450.1ZM745.0 445.9L738.3 450.9L743.5 450.1ZM744.2 447.9L746.6 462.7L742.9 452.2ZM744.2 447.9L736.7 453.7L742.9 452.2ZM743.5 449.9L746.7 465.2L742.4 454.3ZM743.5 449.9L735.9 456.2L742.4 454.3ZM742.9 452.1L745.2 470.6L742.0 456.4ZM742.9 452.1L734.1 459.6L742.0 456.4ZM742.4 454.3L745.7 469.4L741.6 458.7ZM742.4 454.3L735.4 461.1L741.6 458.7ZM742.0 456.6L743.8 471.1L741.3 461.0ZM742.0 456.6L735.7 463.3L741.3 461.0ZM741.6 459.0L746.7 476.5L741.1 463.4ZM741.6 459.0L733.8 467.3L741.1 463.4ZM741.3 461.4L744.5 479.6L741.0 465.9ZM741.3 461.4L733.7 470.0L741.0 465.9ZM741.1 464.0L744.6 483.8L740.9 468.5ZM741.1 464.0L733.0 473.5L740.9 468.5ZM740.9 466.6L743.3 479.3L740.8 471.1ZM740.9 466.6L736.2 473.3L740.8 471.1ZM740.8 469.4L736.0 483.5L740.9 473.9ZM740.8 469.4L746.3 477.0L740.9 473.9ZM740.8 472.2L737.8 484.0L741.0 476.7ZM740.8 472.2L745.3 478.6L741.0 476.7ZM740.9 475.0L737.2 487.6L741.1 479.5ZM740.9 475.0L745.9 481.7L741.1 479.5ZM741.1 478.0L739.8 488.4L741.4 482.5ZM741.1 478.0L745.0 483.5L741.4 482.5ZM741.3 481.1L739.7 491.5L741.7 485.5ZM741.3 481.1L745.4 486.5L741.7 485.5ZM741.6 484.2L740.9 490.4L742.1 488.6ZM741.6 484.2L743.7 487.9L742.1 488.6Z" fill="#132c27" opacity="1"/><path d="M751.3 438.9L751.1 447.3L753.7 442.7ZM751.3 438.9L756.4 441.7L753.7 442.7ZM752.5 440.6L753.4 449.7L754.7 444.5ZM752.5 440.6L757.7 443.7L754.7 444.5ZM753.5 442.4L754.2 455.9L755.6 446.4ZM753.5 442.4L761.2 446.5L755.6 446.4ZM754.5 444.2L754.3 454.9L756.4 448.3ZM754.5 444.2L760.4 448.1L756.4 448.3ZM755.5 446.2L754.8 460.3L757.2 450.4ZM755.5 446.2L763.1 451.1L757.2 450.4ZM756.4 448.3L756.2 462.0L758.0 452.5ZM756.4 448.3L763.6 453.3L758.0 452.5ZM757.2 450.4L755.7 462.8L758.7 454.7ZM757.2 450.4L763.6 455.4L758.7 454.7ZM758.0 452.7L756.5 470.0L759.3 457.0ZM758.0 452.7L766.7 459.2L759.3 457.0ZM758.8 455.0L756.2 472.4L759.9 459.4ZM758.8 455.0L767.4 461.9L759.9 459.4ZM759.4 457.5L757.3 475.5L760.4 461.8ZM759.4 457.5L768.1 464.7L760.4 461.8ZM760.0 460.0L757.4 474.8L760.9 464.4ZM760.0 460.0L767.0 466.5L760.9 464.4ZM760.6 462.6L757.6 481.1L761.4 467.0ZM760.6 462.6L769.1 470.5L761.4 467.0ZM761.1 465.3L758.4 480.2L761.8 469.8ZM761.1 465.3L767.7 472.2L761.8 469.8ZM761.5 468.1L757.2 485.2L762.1 472.6ZM761.5 468.1L769.2 476.1L762.1 472.6ZM761.9 471.0L757.5 485.8L762.4 475.5ZM761.9 471.0L768.4 478.3L762.4 475.5ZM762.3 474.0L758.6 488.0L762.6 478.5ZM762.3 474.0L768.1 481.1L762.6 478.5ZM762.5 477.1L760.0 487.7L762.8 481.6ZM762.5 477.1L766.6 482.8L762.8 481.6ZM762.8 480.3L759.6 494.6L763.0 484.8ZM762.8 480.3L768.4 487.6L763.0 484.8ZM762.9 483.6L759.2 494.9L763.1 488.1ZM762.9 483.6L767.3 489.9L763.1 488.1ZM763.0 486.9L760.2 497.0L763.1 491.4ZM763.0 486.9L766.6 492.7L763.1 491.4ZM763.1 490.4L765.5 497.6L763.1 494.9ZM763.1 490.4L760.7 495.0L763.1 494.9ZM763.1 493.9L764.1 498.4L763.0 498.4ZM763.1 493.9L762.0 497.2L763.0 498.4Z" fill="#1b352b" opacity="1"/><path d="M765.1 439.3L767.6 446.7L768.8 441.9ZM765.1 439.3L770.5 440.0L768.8 441.9ZM766.9 440.6L768.6 451.0L770.5 443.4ZM766.9 440.6L774.1 441.4L770.5 443.4ZM768.7 441.9L770.7 454.5L772.1 444.9ZM768.7 441.9L777.1 443.0L772.1 444.9ZM770.5 443.4L773.3 456.5L773.7 446.5ZM770.5 443.4L779.0 444.9L773.7 446.5ZM772.1 445.0L772.2 456.8L775.2 448.3ZM772.1 445.0L779.8 446.9L775.2 448.3ZM773.7 446.6L775.1 459.5L776.6 450.1ZM773.7 446.6L781.8 449.0L776.6 450.1ZM775.3 448.4L775.0 461.0L778.0 452.1ZM775.3 448.4L783.1 451.2L778.0 452.1ZM776.8 450.4L777.1 468.1L779.3 454.1ZM776.8 450.4L787.4 454.1L779.3 454.1ZM778.2 452.4L779.1 467.5L780.5 456.2ZM778.2 452.4L787.0 456.2L780.5 456.2ZM779.5 454.5L779.4 469.1L781.7 458.5ZM779.5 454.5L787.9 458.6L781.7 458.5ZM780.8 456.8L779.7 470.5L782.8 460.8ZM780.8 456.8L788.5 461.1L782.8 460.8ZM782.0 459.1L781.7 477.3L783.8 463.3ZM782.0 459.1L792.0 464.7L783.8 463.3ZM783.2 461.6L780.3 479.9L784.8 465.8ZM783.2 461.6L793.2 467.6L784.8 465.8ZM784.2 464.2L781.3 480.3L785.8 468.4ZM784.2 464.2L792.8 470.0L785.8 468.4ZM785.2 466.9L783.4 479.9L786.6 471.2ZM785.2 466.9L791.9 472.1L786.6 471.2ZM786.2 469.7L784.4 487.2L787.4 474.0ZM786.2 469.7L795.0 476.4L787.4 474.0ZM787.0 472.6L785.5 488.9L788.2 477.0ZM787.0 472.6L795.0 479.1L788.2 477.0ZM787.8 475.7L784.6 488.2L788.8 480.0ZM787.8 475.7L793.9 481.4L788.8 480.0ZM788.6 478.8L785.2 491.8L789.5 483.2ZM788.6 478.8L794.7 484.8L789.5 483.2ZM789.2 482.0L786.7 493.2L790.0 486.5ZM789.2 482.0L794.3 487.5L790.0 486.5ZM789.8 485.4L786.9 497.9L790.5 489.8ZM789.8 485.4L795.4 491.5L790.5 489.8ZM790.4 488.8L788.7 499.2L790.9 493.3ZM790.4 488.8L794.6 494.2L790.9 493.3ZM790.8 492.4L787.7 504.1L791.3 496.9ZM790.8 492.4L795.8 498.5L791.3 496.9ZM791.2 496.1L789.1 503.2L791.6 500.6ZM791.2 496.1L793.9 500.4L791.6 500.6ZM791.5 499.9L789.0 507.6L791.8 504.4ZM791.5 499.9L794.5 504.5L791.8 504.4ZM791.8 503.8L790.9 508.9L792.0 508.3ZM791.8 503.8L793.3 507.3L792.0 508.3Z" fill="#3d5c2e" opacity="1"/><path d="M742.1 441.9L741.1 449.5L738.6 443.8ZM738.8 443.6L736.7 451.6L735.3 445.5ZM735.5 445.4L733.1 456.6L732.1 447.3ZM732.3 447.2L730.4 461.4L728.9 449.2ZM729.1 449.0L726.8 459.8L725.7 451.1ZM726.0 450.9L724.8 464.8L722.6 453.1ZM722.9 452.9L722.4 466.5L719.5 455.1ZM719.8 454.9L720.4 468.7L716.5 457.2ZM716.8 457.0L715.0 469.2L713.5 459.3ZM713.8 459.1L712.0 468.9L710.6 461.5ZM710.9 461.3L709.6 467.6L707.7 463.8ZM708.0 463.6L706.4 468.9L704.9 466.1Z" fill="#1a342a" opacity="1"/><path d="M688.6 725.2Q707.1 707.1 723.8 697.5Q704.4 703.4 687.0 723.0Z" fill="#1e3f30" opacity="1"/><path d="M688.8 726.3Q706.6 706.3 722.9 695.9Q704.5 703.8 687.6 724.9Z" fill="#254a33" opacity="1"/><path d="M686.5 724.8Q706.7 699.8 724.6 686.2Q703.4 696.4 684.6 722.8Z" fill="#173528" opacity="1"/><path d="M688.4 726.5Q704.4 705.1 717.8 692.7Q700.7 701.6 686.2 724.5Z" fill="#1e3f30" opacity="1"/><path d="M688.7 723.7Q704.4 700.3 717.5 686.7Q700.7 697.1 686.5 721.9Z" fill="#254a33" opacity="1"/><path d="M689.1 723.8Q705.4 697.1 718.6 681.7Q701.1 693.9 686.6 721.9Z" fill="#173528" opacity="1"/><path d="M688.1 725.8Q705.1 693.2 719.9 674.9Q701.9 691.1 686.2 724.5Z" fill="#1e3f30" opacity="1"/><path d="M687.4 722.9Q702.3 691.4 714.7 673.3Q698.7 689.3 685.3 721.7Z" fill="#254a33" opacity="1"/><path d="M688.3 722.8Q701.7 692.0 711.9 674.0Q697.1 689.7 685.6 721.4Z" fill="#173528" opacity="1"/><path d="M687.4 742.5Q701.8 731.2 714.4 724.6Q699.3 727.1 686.0 740.1Z" fill="#1e3f30" opacity="1"/><path d="M688.9 744.0Q698.0 735.9 705.0 730.2Q695.1 732.0 687.2 741.7Z" fill="#254a33" opacity="1"/><path d="M688.6 744.4Q701.3 728.7 712.5 720.1Q699.1 726.5 687.3 743.2Z" fill="#173528" opacity="1"/><path d="M688.1 743.8Q697.8 730.9 705.2 722.9Q694.5 727.9 686.2 742.1Z" fill="#1e3f30" opacity="1"/><path d="M689.1 741.9Q699.0 725.2 706.7 715.2Q695.9 723.0 687.3 740.6Z" fill="#254a33" opacity="1"/><path d="M688.2 744.1Q696.9 726.0 702.3 714.8Q692.3 723.5 685.5 742.7Z" fill="#173528" opacity="1"/><path d="M687.9 742.6Q694.2 726.9 697.8 717.3Q690.4 725.2 685.7 741.7Z" fill="#1e3f30" opacity="1"/><ellipse cx="715.8" cy="762.3" rx="9.8" ry="5.4" transform="rotate(93 715.8 762.3)" fill="#27492f" opacity="1"/><ellipse cx="708.4" cy="799.5" rx="7.8" ry="4.3" transform="rotate(88 708.4 799.5)" fill="#1f3d2b" opacity="1"/><ellipse cx="718.9" cy="764.2" rx="7.7" ry="4.2" transform="rotate(74 718.9 764.2)" fill="#2f5535" opacity="1"/><ellipse cx="728.4" cy="805.3" rx="6.3" ry="3.5" transform="rotate(85 728.4 805.3)" fill="#1a3326" opacity="1"/><ellipse cx="698.6" cy="781.8" rx="9.1" ry="5.0" transform="rotate(162 698.6 781.8)" fill="#27492f" opacity="1"/><ellipse cx="711.2" cy="776.2" rx="6.0" ry="3.3" transform="rotate(111 711.2 776.2)" fill="#1f3d2b" opacity="1"/><ellipse cx="727.3" cy="767.2" rx="8.9" ry="4.9" transform="rotate(4 727.3 767.2)" fill="#2f5535" opacity="1"/><ellipse cx="701.0" cy="771.9" rx="8.4" ry="4.6" transform="rotate(58 701.0 771.9)" fill="#1a3326" opacity="1"/><ellipse cx="706.8" cy="790.7" rx="5.5" ry="3.0" transform="rotate(132 706.8 790.7)" fill="#27492f" opacity="1"/><ellipse cx="698.4" cy="785.5" rx="6.3" ry="3.4" transform="rotate(36 698.4 785.5)" fill="#1f3d2b" opacity="1"/><ellipse cx="713.1" cy="782.0" rx="6.9" ry="3.8" transform="rotate(74 713.1 782.0)" fill="#2f5535" opacity="1"/><ellipse cx="713.1" cy="768.7" rx="6.0" ry="3.3" transform="rotate(114 713.1 768.7)" fill="#1a3326" opacity="1"/><ellipse cx="717.0" cy="786.4" rx="9.3" ry="5.1" transform="rotate(110 717.0 786.4)" fill="#27492f" opacity="1"/><ellipse cx="724.8" cy="772.2" rx="8.7" ry="4.8" transform="rotate(146 724.8 772.2)" fill="#1f3d2b" opacity="1"/><ellipse cx="726.5" cy="776.2" rx="6.6" ry="3.6" transform="rotate(166 726.5 776.2)" fill="#2f5535" opacity="1"/><ellipse cx="701.9" cy="808.9" rx="9.4" ry="5.2" transform="rotate(24 701.9 808.9)" fill="#1a3326" opacity="1"/><ellipse cx="702.6" cy="795.9" rx="6.3" ry="3.5" transform="rotate(17 702.6 795.9)" fill="#27492f" opacity="1"/><ellipse cx="724.0" cy="781.2" rx="8.9" ry="4.9" transform="rotate(23 724.0 781.2)" fill="#1f3d2b" opacity="1"/><ellipse cx="708.5" cy="793.9" rx="5.1" ry="2.8" transform="rotate(36 708.5 793.9)" fill="#2f5535" opacity="1"/><ellipse cx="718.6" cy="804.7" rx="9.8" ry="5.4" transform="rotate(21 718.6 804.7)" fill="#1a3326" opacity="1"/><ellipse cx="712.2" cy="797.4" rx="7.5" ry="4.1" transform="rotate(123 712.2 797.4)" fill="#27492f" opacity="1"/><ellipse cx="700.8" cy="764.4" rx="5.5" ry="3.0" transform="rotate(7 700.8 764.4)" fill="#1f3d2b" opacity="1"/><ellipse cx="713.9" cy="785.7" rx="7.8" ry="4.3" transform="rotate(26 713.9 785.7)" fill="#2f5535" opacity="1"/><ellipse cx="700.6" cy="770.8" rx="9.2" ry="5.1" transform="rotate(178 700.6 770.8)" fill="#1a3326" opacity="1"/><ellipse cx="727.4" cy="765.6" rx="5.3" ry="2.9" transform="rotate(171 727.4 765.6)" fill="#27492f" opacity="1"/><ellipse cx="710.6" cy="797.7" rx="6.6" ry="3.6" transform="rotate(84 710.6 797.7)" fill="#1f3d2b" opacity="1"/><ellipse cx="700.2" cy="798.6" rx="7.4" ry="4.1" transform="rotate(2 700.2 798.6)" fill="#1f3d2b" opacity="1"/><ellipse cx="703.2" cy="806.9" rx="5.7" ry="3.1" transform="rotate(82 703.2 806.9)" fill="#27492f" opacity="1"/><ellipse cx="703.8" cy="798.1" rx="5.8" ry="3.2" transform="rotate(30 703.8 798.1)" fill="#1f3d2b" opacity="1"/><ellipse cx="700.2" cy="790.3" rx="8.6" ry="4.7" transform="rotate(144 700.2 790.3)" fill="#27492f" opacity="1"/><ellipse cx="703.3" cy="807.2" rx="7.5" ry="4.1" transform="rotate(73 703.3 807.2)" fill="#1f3d2b" opacity="1"/><ellipse cx="701.6" cy="800.1" rx="8.9" ry="4.9" transform="rotate(145 701.6 800.1)" fill="#27492f" opacity="1"/><ellipse cx="696.1" cy="808.2" rx="8.0" ry="4.4" transform="rotate(140 696.1 808.2)" fill="#1f3d2b" opacity="1"/><ellipse cx="705.0" cy="798.1" rx="8.6" ry="4.7" transform="rotate(158 705.0 798.1)" fill="#27492f" opacity="1"/><ellipse cx="703.1" cy="805.3" rx="8.1" ry="4.4" transform="rotate(73 703.1 805.3)" fill="#1f3d2b" opacity="1"/><ellipse cx="703.6" cy="791.4" rx="6.4" ry="3.5" transform="rotate(84 703.6 791.4)" fill="#27492f" opacity="1"/><path d="M735.8 791.2Q748.0 782.8 759.3 780.0Q746.8 780.1 735.1 789.6Z" fill="#3d6a3a" opacity="1"/><path d="M735.1 791.4Q748.7 778.4 760.8 772.6Q746.6 775.3 733.9 789.6Z" fill="#4a7a40" opacity="1"/><path d="M737.2 791.3Q747.8 779.8 756.5 773.9Q745.2 776.7 735.7 789.5Z" fill="#2f5a33" opacity="1"/><path d="M734.5 791.2Q747.6 772.3 758.6 762.7Q744.6 769.5 732.7 789.5Z" fill="#3d6a3a" opacity="1"/><path d="M734.4 789.7Q742.7 776.0 749.1 768.6Q740.0 773.9 732.9 788.5Z" fill="#4a7a40" opacity="1"/><path d="M737.1 790.7Q743.5 777.9 747.6 770.6Q740.3 776.1 735.3 789.6Z" fill="#2f5a33" opacity="1"/><path d="M737.7 790.8Q743.1 773.3 745.8 763.1Q739.1 771.9 735.3 790.0Z" fill="#3d6a3a" opacity="1"/><path d="M737.1 789.0Q741.8 770.8 743.6 760.2Q737.5 769.6 734.5 788.3Z" fill="#4a7a40" opacity="1"/><ellipse cx="894.6" cy="749.6" rx="4.7" ry="2.6" transform="rotate(89 894.6 749.6)" fill="#27492f" opacity="1"/><ellipse cx="921.7" cy="743.8" rx="7.8" ry="4.3" transform="rotate(76 921.7 743.8)" fill="#1f3d2b" opacity="1"/><ellipse cx="916.6" cy="751.4" rx="5.5" ry="3.0" transform="rotate(51 916.6 751.4)" fill="#33583a" opacity="1"/><ellipse cx="924.3" cy="750.8" rx="5.1" ry="2.8" transform="rotate(129 924.3 750.8)" fill="#27492f" opacity="1"/><ellipse cx="902.8" cy="743.2" rx="5.0" ry="2.7" transform="rotate(8 902.8 743.2)" fill="#1f3d2b" opacity="1"/><ellipse cx="894.4" cy="753.6" rx="5.6" ry="3.1" transform="rotate(162 894.4 753.6)" fill="#33583a" opacity="1"/><ellipse cx="929.9" cy="743.7" rx="8.0" ry="4.4" transform="rotate(170 929.9 743.7)" fill="#27492f" opacity="1"/><ellipse cx="889.4" cy="755.7" rx="5.7" ry="3.1" transform="rotate(86 889.4 755.7)" fill="#1f3d2b" opacity="1"/><ellipse cx="943.4" cy="746.4" rx="6.1" ry="3.4" transform="rotate(169 943.4 746.4)" fill="#33583a" opacity="1"/><ellipse cx="928.4" cy="749.6" rx="7.9" ry="4.4" transform="rotate(147 928.4 749.6)" fill="#27492f" opacity="1"/><ellipse cx="921.2" cy="744.6" rx="6.5" ry="3.6" transform="rotate(82 921.2 744.6)" fill="#1f3d2b" opacity="1"/><ellipse cx="897.2" cy="743.7" rx="6.1" ry="3.4" transform="rotate(22 897.2 743.7)" fill="#33583a" opacity="1"/><ellipse cx="911.6" cy="752.4" rx="5.8" ry="3.2" transform="rotate(47 911.6 752.4)" fill="#27492f" opacity="1"/><ellipse cx="919.9" cy="748.9" rx="7.1" ry="3.9" transform="rotate(96 919.9 748.9)" fill="#1f3d2b" opacity="1"/><ellipse cx="944.9" cy="756.3" rx="6.9" ry="3.8" transform="rotate(43 944.9 756.3)" fill="#33583a" opacity="1"/><ellipse cx="891.8" cy="755.5" rx="7.1" ry="3.9" transform="rotate(112 891.8 755.5)" fill="#27492f" opacity="1"/><ellipse cx="906.6" cy="746.8" rx="6.7" ry="3.7" transform="rotate(102 906.6 746.8)" fill="#1f3d2b" opacity="1"/><ellipse cx="920.5" cy="751.9" rx="7.0" ry="3.9" transform="rotate(34 920.5 751.9)" fill="#33583a" opacity="1"/><path d="M952.3 749.0Q950.0 714.9 945.2 695.1Q946.5 715.3 950.2 749.2Z" fill="#1f4030" opacity="1"/><path d="M950.8 748.2Q948.6 729.7 943.8 719.4Q945.0 730.4 948.7 748.6Z" fill="#2a5036" opacity="1"/><path d="M950.1 748.1Q947.4 734.1 941.3 727.0Q942.7 735.7 947.4 749.0Z" fill="#1f4030" opacity="1"/><path d="M951.1 746.6Q944.8 726.8 935.7 716.7Q940.8 728.7 948.8 747.7Z" fill="#2a5036" opacity="1"/><path d="M950.1 746.0Q938.1 717.7 922.6 703.6Q933.2 720.6 947.3 747.7Z" fill="#1f4030" opacity="1"/><path d="M950.1 747.1Q936.4 721.4 920.4 708.8Q933.1 723.8 948.2 748.5Z" fill="#2a5036" opacity="1"/><path d="M906.2 754.3Q912.6 747.9 917.4 743.4Q910.2 745.0 904.8 752.6Z" fill="#2d5235" opacity="1"/><path d="M907.1 752.5Q914.7 742.6 920.2 736.4Q911.8 740.0 905.4 751.0Z" fill="#3a6340" opacity="1"/><path d="M904.8 751.5Q912.0 739.9 916.7 732.5Q908.5 737.3 902.7 750.0Z" fill="#2d5235" opacity="1"/><path d="M905.2 753.2Q909.8 741.9 912.3 734.9Q906.9 740.6 903.6 752.5Z" fill="#3a6340" opacity="1"/><path d="M905.1 751.8Q908.6 740.2 908.9 733.0Q904.0 738.9 902.4 751.0Z" fill="#2d5235" opacity="1"/><path d="M758 768 L795 761 L791 790 Q777 798 765 794 Z" fill="#2a87a2"/><ellipse cx="776.5" cy="764.5" rx="18.5" ry="5.5" transform="rotate(-11 776.5 764.5)" fill="#a58a72" stroke="#1f6f8a" stroke-width="1.5"/><path d="M790 768 Q786 784 776 793" stroke="#c9b23a" stroke-width="1" fill="none"/><circle cx="765" cy="790" r="11" fill="#e8e0d0"/><path d="M765 790 L756 783 A11 11 0 0 1 765 779Z" fill="#d23a30"/><path d="M765 790 L765 779 A11 11 0 0 1 774 784Z" fill="#e8b830"/><path d="M765 790 L774 784 A11 11 0 0 1 776 792Z" fill="#f0eee8"/><path d="M765 790 L756 783 A11 11 0 0 0 755 795Z" fill="#d8506a"/></g>
<path d="M676.5 464 L868 426 L868 424 L918 414 L918 415.5 L945 410.5 L945.5 432 L948 432 L948.5 463 L946.5 463 L949 566 L951.5 566 L952.5 598 L950.5 598 L952 657 L954.5 657 L955 746.5 L771 794 L771 796 L749 801 L749 799.5 L691.5 814 Z" fill="none" stroke="#101010" stroke-width="1.4"/>
<polyline points="679.5,465.0 694.0,812.0" fill="none" stroke="#222" stroke-width="0.9" />
<polyline points="942.5,412.0 952.0,745.0" fill="none" stroke="#333" stroke-width="0.8" />
<g clip-path="url(#cfg)"><path d="M606.6 552.1Q607.2 601.0 614.9 649.6Q612.3 600.6 609.5 551.9Z" fill="#27482a" opacity="1"/><path d="M607.6 552.3Q609.0 608.8 619.0 664.9Q614.0 608.3 610.5 552.1Z" fill="#335c30" opacity="1"/><path d="M608.7 552.6Q610.9 608.8 623.2 664.6Q615.9 608.2 611.6 552.3Z" fill="#1f3d25" opacity="1"/><path d="M611.4 553.3Q614.6 613.4 629.8 673.1Q619.6 612.7 614.3 552.9Z" fill="#3d6b38" opacity="1"/><path d="M612.2 553.5Q614.9 611.3 628.7 668.6Q619.9 610.6 615.1 553.1Z" fill="#27482a" opacity="1"/><path d="M613.5 553.9Q617.7 604.9 635.6 655.2Q622.6 603.9 616.4 553.3Z" fill="#335c30" opacity="1"/><path d="M615.9 554.4Q619.6 602.9 636.3 650.6Q624.6 601.9 618.8 553.9Z" fill="#1f3d25" opacity="1"/><path d="M616.6 554.6Q620.8 605.0 639.0 654.7Q625.8 604.0 619.5 554.0Z" fill="#3d6b38" opacity="1"/><path d="M618.2 555.0Q623.1 602.6 643.4 649.3Q628.0 601.4 621.0 554.3Z" fill="#27482a" opacity="1"/><path d="M620.3 555.5Q626.1 609.0 648.9 661.5Q630.9 607.7 623.1 554.8Z" fill="#335c30" opacity="1"/><path d="M621.1 555.6Q626.3 578.3 638.7 600.1Q629.6 577.0 623.1 554.9Z" fill="#335c30" opacity="1"/><path d="M626.4 556.8Q630.8 579.7 641.9 601.9Q634.2 578.6 628.4 556.2Z" fill="#1f3d25" opacity="1"/><path d="M630.2 557.7Q635.6 582.3 648.5 605.9Q639.0 581.1 632.2 557.0Z" fill="#3d6b38" opacity="1"/><path d="M635.7 559.0Q641.4 583.7 654.8 607.5Q644.7 582.5 637.7 558.3Z" fill="#27482a" opacity="1"/><path d="M638.5 559.7Q643.8 582.8 656.5 604.9Q647.2 581.5 640.5 559.0Z" fill="#335c30" opacity="1"/><path d="M643.2 560.8Q647.4 579.5 658.2 597.3Q650.8 578.2 645.1 560.0Z" fill="#1f3d25" opacity="1"/><path d="M649.4 562.2Q653.4 580.3 663.7 597.6Q656.7 579.1 651.4 561.5Z" fill="#3d6b38" opacity="1"/><path d="M652.5 563.0Q657.4 585.2 669.5 606.6Q660.8 584.0 654.5 562.2Z" fill="#27482a" opacity="1"/><path d="M716.2 574.2Q711.5 576.1 708.2 580.9Q713.5 578.9 717.4 575.9Z" fill="#5fa050" opacity="1"/><path d="M716.8 574.9Q712.6 578.2 710.0 583.8Q714.8 580.2 718.1 576.1Z" fill="#7ab85e" opacity="1"/><path d="M715.9 575.9Q712.2 581.4 710.2 588.7Q714.7 582.7 717.4 576.6Z" fill="#4a8c48" opacity="1"/><path d="M716.0 575.7Q714.0 581.7 714.5 589.0Q717.6 582.4 718.1 576.1Z" fill="#5fa050" opacity="1"/><path d="M715.4 575.1Q715.2 582.5 717.4 590.7Q718.6 582.3 717.4 575.0Z" fill="#7ab85e" opacity="1"/><path d="M714.8 574.2Q715.8 579.6 719.1 584.9Q719.1 578.5 716.7 573.6Z" fill="#4a8c48" opacity="1"/><path d="M714.3 574.6Q716.8 579.2 721.0 583.6Q719.2 577.7 715.7 573.7Z" fill="#5fa050" opacity="1"/><path d="M750.3 582.9Q745.4 585.4 741.2 590.1Q746.5 587.0 751.0 583.9Z" fill="#3f8a5a" opacity="1"/><path d="M750.4 582.2Q747.0 585.6 745.0 590.9Q749.0 587.2 751.6 583.1Z" fill="#5fa050" opacity="1"/><path d="M750.0 582.6Q747.7 587.1 746.8 592.8Q749.7 587.8 751.2 583.1Z" fill="#3f8a5a" opacity="1"/><path d="M752.0 584.2Q751.0 587.5 751.6 591.4Q753.2 587.8 753.3 584.4Z" fill="#5fa050" opacity="1"/><path d="M750.3 584.9Q750.4 588.4 752.1 592.1Q752.7 588.1 751.7 584.7Z" fill="#3f8a5a" opacity="1"/><path d="M751.1 583.7Q752.9 588.2 756.8 592.4Q755.8 586.7 752.8 582.8Z" fill="#5fa050" opacity="1"/><path d="M818.4 598.0L815.5 616.4L815.8 598.0ZM814.7 598.1L814.7 616.7L812.1 598.2ZM811.0 598.2L807.5 618.5L808.4 598.4ZM807.3 598.5L807.3 615.9L804.7 598.7ZM803.7 598.8L800.7 626.4L801.1 599.2ZM800.1 599.3L798.2 624.7L797.5 599.7ZM796.5 599.9L797.5 622.7L793.9 600.3ZM793.0 600.5L789.4 628.7L790.4 601.0ZM789.5 601.3L787.8 621.2L787.0 601.9ZM786.0 602.1L786.4 626.4L783.5 602.8ZM782.6 603.1L782.0 631.0L780.1 603.8ZM779.2 604.1L776.3 624.2L776.8 604.9ZM775.9 605.3L773.6 626.1L773.5 606.2ZM772.6 606.5L771.7 631.3L770.2 607.5ZM769.3 607.9L770.8 627.6L766.9 608.9ZM766.1 609.3L765.3 623.4L763.7 610.4ZM762.9 610.8L762.6 621.0L760.6 612.0ZM759.7 612.5L759.1 617.9L757.4 613.8Z" fill="#5d9a4c" opacity="1"/><path d="M818.2 600.1L817.9 614.9L815.8 600.6ZM814.2 600.9L812.1 613.3L811.8 601.4ZM810.2 601.8L806.9 621.4L807.9 602.4ZM806.2 602.8L804.8 622.0L803.9 603.5ZM802.3 604.0L801.6 628.7L800.0 604.8ZM798.3 605.4L796.2 629.3L796.1 606.2ZM794.4 606.8L793.0 629.7L792.2 607.7ZM790.5 608.4L787.4 631.2L788.3 609.4ZM786.6 610.2L784.4 630.3L784.4 611.2ZM782.7 612.1L782.1 627.4L780.6 613.1ZM778.8 614.1L778.8 623.8L776.7 615.2ZM775.0 616.2L773.8 622.4L772.9 617.5Z" fill="#3f7f45" opacity="1"/><path d="M817.3 603.9Q810.0 608.9 804.2 617.2Q812.2 611.4 818.6 605.4Z" fill="#1f4f38" opacity="1"/><path d="M816.6 603.1Q811.0 608.1 808.1 616.4Q814.7 611.0 818.7 604.7Z" fill="#2a6040" opacity="1"/><path d="M815.5 603.1Q809.3 611.6 805.6 623.1Q812.8 613.6 817.6 604.2Z" fill="#1f4f38" opacity="1"/><path d="M816.6 602.0Q811.4 610.5 809.1 621.7Q815.6 612.4 819.1 603.1Z" fill="#2a6040" opacity="1"/><path d="M817.4 603.1Q814.7 610.5 814.3 619.4Q817.9 611.3 819.3 603.6Z" fill="#1f4f38" opacity="1"/><path d="M816.4 603.5Q814.4 611.6 815.2 621.1Q818.3 612.1 818.7 603.8Z" fill="#2a6040" opacity="1"/><path d="M819.2 620.5Q815.0 616.6 809.6 617.0Q813.3 620.0 818.2 622.5Z" fill="#9aae3a" opacity="1"/><path d="M817.6 622.3Q810.8 619.0 803.6 619.7Q810.3 621.2 817.3 623.6Z" fill="#7f9a30" opacity="1"/><path d="M818.6 621.9Q813.9 620.2 809.1 621.7Q813.7 622.7 818.5 623.3Z" fill="#b0c04a" opacity="1"/><path d="M818.2 620.0Q810.6 619.4 803.2 622.6Q810.9 621.9 818.4 621.5Z" fill="#9aae3a" opacity="1"/><path d="M817.4 619.7Q812.6 619.7 808.4 623.4Q813.6 623.3 818.0 621.8Z" fill="#7f9a30" opacity="1"/><path d="M817.9 621.9Q812.1 623.6 807.5 628.8Q813.8 626.7 818.9 623.7Z" fill="#b0c04a" opacity="1"/><path d="M817.4 661.6Q809.7 662.8 802.8 668.1Q810.9 666.0 818.1 663.5Z" fill="#6a9a3a" opacity="1"/><path d="M818.3 663.5Q807.0 668.1 797.0 677.5Q808.9 671.4 819.4 665.4Z" fill="#5a8a34" opacity="1"/><path d="M817.1 663.8Q810.4 667.2 805.0 673.6Q812.1 669.4 818.0 665.1Z" fill="#86ae48" opacity="1"/><path d="M818.0 664.2Q811.4 669.6 806.8 678.2Q814.3 672.2 819.7 665.7Z" fill="#6a9a3a" opacity="1"/><path d="M818.4 663.6Q811.9 671.3 807.3 681.8Q814.6 673.1 820.0 664.7Z" fill="#5a8a34" opacity="1"/><path d="M817.7 665.1Q814.7 670.0 814.1 676.7Q818.0 671.4 819.6 665.9Z" fill="#86ae48" opacity="1"/><path d="M816.0 665.1Q813.2 675.0 813.1 686.7Q817.0 675.7 818.2 665.5Z" fill="#6a9a3a" opacity="1"/><path d="M615.9 798.5Q631.2 780.3 646.0 772.0Q624.8 771.7 612.1 793.5Z" fill="#2f7a45" opacity="1"/><path d="M616.3 839.2L623.7 835.7L617.1 836.7ZM616.3 839.2L613.7 832.0L617.1 836.7ZM617.7 835.1L627.2 831.6L618.6 832.6ZM617.7 835.1L614.6 826.2L618.6 832.6ZM619.2 831.1L632.8 826.8L620.2 828.7ZM619.2 831.1L615.0 818.7L620.2 828.7ZM620.8 827.2L637.2 822.9L621.9 824.8ZM620.8 827.2L616.2 812.4L621.9 824.8ZM622.6 823.4L636.5 819.9L623.7 821.1ZM622.6 823.4L619.2 810.7L623.7 821.1ZM624.4 819.7L642.2 816.3L625.6 817.4ZM624.4 819.7L620.5 803.6L625.6 817.4ZM626.4 816.1L643.4 813.6L627.7 813.8ZM626.4 816.1L623.2 800.6L627.7 813.8ZM628.4 812.6L642.5 810.8L629.8 810.4ZM628.4 812.6L626.5 799.7L629.8 810.4ZM630.6 809.2L641.8 808.0L632.1 807.0ZM630.6 809.2L629.6 798.9L632.1 807.0ZM632.9 805.9L646.3 805.1L634.5 803.8ZM632.9 805.9L632.0 793.6L634.5 803.8ZM635.3 802.6L644.3 802.1L636.9 800.6ZM635.3 802.6L635.3 794.3L636.9 800.6ZM637.8 799.5L643.7 799.0L639.5 797.5ZM637.8 799.5L638.3 794.0L639.5 797.5Z" fill="#3a8048" opacity="1"/><path d="M616.0 840.0Q624.0 815.0 640.0 797.0" stroke="#2a6038" stroke-width="1.2" fill="none" opacity="1"/><path d="M618.2 866.9L625.9 862.8L618.8 864.6ZM618.2 866.9L614.9 859.6L618.8 864.6ZM619.4 862.6L628.3 859.1L620.2 860.3ZM619.4 862.6L616.2 854.4L620.2 860.3ZM620.8 858.4L629.2 855.5L621.7 856.2ZM620.8 858.4L618.4 850.6L621.7 856.2ZM622.5 854.5L630.8 852.0L623.6 852.3ZM622.5 854.5L620.7 846.7L623.6 852.3ZM624.4 850.7L633.1 849.0L625.6 848.6ZM624.4 850.7L623.2 842.6L625.6 848.6ZM626.6 847.1L637.9 846.0L628.0 845.1ZM626.6 847.1L625.5 836.7L628.0 845.1ZM629.0 843.6L636.0 843.1L630.5 841.8ZM629.0 843.6L629.2 837.2L630.5 841.8ZM631.7 840.4L636.8 840.1L633.3 838.6ZM631.7 840.4L632.4 835.7L633.3 838.6Z" fill="#2f7040" opacity="1"/><path d="M618.0 868.0Q622.0 850.0 634.0 838.0" stroke="#2a6038" stroke-width="1.2" fill="none" opacity="1"/><ellipse cx="622.7" cy="886.5" rx="3.0" ry="1.7" transform="rotate(36 622.7 886.5)" fill="#2f6b3a" opacity="1"/><ellipse cx="621.7" cy="868.0" rx="4.2" ry="2.3" transform="rotate(103 621.7 868.0)" fill="#3d7d42" opacity="1"/><ellipse cx="619.4" cy="878.6" rx="3.8" ry="2.1" transform="rotate(102 619.4 878.6)" fill="#255a34" opacity="1"/><ellipse cx="620.7" cy="882.0" rx="3.1" ry="1.7" transform="rotate(121 620.7 882.0)" fill="#2f6b3a" opacity="1"/><ellipse cx="619.2" cy="890.9" rx="4.8" ry="2.6" transform="rotate(85 619.2 890.9)" fill="#3d7d42" opacity="1"/><ellipse cx="621.3" cy="881.5" rx="5.1" ry="2.8" transform="rotate(136 621.3 881.5)" fill="#255a34" opacity="1"/><ellipse cx="624.0" cy="877.6" rx="6.0" ry="3.3" transform="rotate(151 624.0 877.6)" fill="#2f6b3a" opacity="1"/><ellipse cx="624.8" cy="875.5" rx="4.3" ry="2.4" transform="rotate(102 624.8 875.5)" fill="#3d7d42" opacity="1"/><path d="M625.2 932.9Q640.9 912.3 653.9 899.9Q637.0 908.7 622.9 930.7Z" fill="#2f6b3a" opacity="1"/><path d="M625.8 934.1Q635.4 920.9 642.4 912.2Q631.7 917.7 623.6 932.3Z" fill="#4a8c48" opacity="1"/><path d="M624.2 932.8Q639.3 906.0 652.6 890.8Q636.7 904.2 622.6 931.7Z" fill="#255a34" opacity="1"/><path d="M624.8 932.2Q636.0 910.3 645.3 897.5Q633.3 908.6 623.2 931.2Z" fill="#5d9a4c" opacity="1"/><path d="M624.3 931.9Q634.4 907.6 641.9 893.0Q630.7 905.8 622.2 930.9Z" fill="#2f6b3a" opacity="1"/><path d="M626.5 933.9Q632.7 918.1 635.8 908.1Q628.3 916.3 624.0 932.9Z" fill="#4a8c48" opacity="1"/><path d="M626.3 931.6Q632.8 908.1 635.9 893.8Q628.0 906.7 623.5 930.8Z" fill="#255a34" opacity="1"/><path d="M623.7 933.1Q630.4 899.3 634.7 879.4Q627.1 898.6 621.8 932.7Z" fill="#5d9a4c" opacity="1"/><path d="M623.6 931.4Q628.3 896.2 630.4 875.5Q624.6 895.7 621.4 931.1Z" fill="#2f6b3a" opacity="1"/><path d="M626.4 933.0Q628.2 916.1 627.1 906.0Q624.1 915.8 624.0 932.9Z" fill="#4a8c48" opacity="1"/><ellipse cx="628.3" cy="919.7" rx="3.1" ry="1.7" transform="rotate(6 628.3 919.7)" fill="#2f6b3a" opacity="1"/><ellipse cx="634.8" cy="914.2" rx="4.5" ry="2.5" transform="rotate(168 634.8 914.2)" fill="#3d7d42" opacity="1"/><ellipse cx="635.7" cy="917.5" rx="3.6" ry="2.0" transform="rotate(53 635.7 917.5)" fill="#255a34" opacity="1"/><ellipse cx="635.1" cy="925.9" rx="3.6" ry="2.0" transform="rotate(151 635.1 925.9)" fill="#2f6b3a" opacity="1"/><ellipse cx="628.2" cy="917.4" rx="3.5" ry="1.9" transform="rotate(158 628.2 917.4)" fill="#3d7d42" opacity="1"/><ellipse cx="635.9" cy="912.0" rx="4.9" ry="2.7" transform="rotate(34 635.9 912.0)" fill="#255a34" opacity="1"/><ellipse cx="634.6" cy="909.0" rx="3.3" ry="1.8" transform="rotate(131 634.6 909.0)" fill="#2f6b3a" opacity="1"/><ellipse cx="627.8" cy="926.0" rx="5.6" ry="3.1" transform="rotate(128 627.8 926.0)" fill="#3d7d42" opacity="1"/><path d="M830.1 892.4Q812.9 853.8 793.9 831.5Q810.3 855.3 828.5 893.3Z" fill="#1d4a35" opacity="1"/><path d="M829.4 891.6Q814.7 862.7 798.0 846.5Q811.9 864.5 827.8 892.6Z" fill="#245a3c" opacity="1"/><path d="M829.9 891.8Q809.1 856.3 785.9 836.8Q805.6 859.0 827.8 893.4Z" fill="#173d2c" opacity="1"/><path d="M828.3 891.4Q806.1 859.2 781.2 842.4Q802.3 862.7 826.1 893.4Z" fill="#2d6a44" opacity="1"/><path d="M829.5 890.7Q810.6 865.7 789.1 853.5Q806.9 869.5 827.3 892.9Z" fill="#1d4a35" opacity="1"/><path d="M828.9 890.7Q804.7 862.4 778.4 848.1Q801.8 865.7 827.3 892.6Z" fill="#245a3c" opacity="1"/><path d="M829.5 890.9Q808.6 869.0 786.2 858.3Q806.4 871.8 828.3 892.6Z" fill="#173d2c" opacity="1"/><path d="M827.9 892.3Q805.6 872.3 782.0 863.0Q803.8 875.1 826.8 893.9Z" fill="#2d6a44" opacity="1"/><path d="M827.3 891.7Q790.0 862.5 751.0 849.4Q787.6 866.5 825.9 894.1Z" fill="#1d4a35" opacity="1"/><path d="M830.2 943.7Q820.7 902.3 808.5 878.7Q816.7 903.6 827.8 944.4Z" fill="#1d4a35" opacity="1"/><path d="M830.6 945.4Q821.9 916.9 810.5 901.1Q818.1 918.5 828.4 946.3Z" fill="#245a3c" opacity="1"/><path d="M830.9 944.4Q816.6 906.6 799.0 886.1Q812.0 909.0 828.2 945.8Z" fill="#173d2c" opacity="1"/><path d="M828.9 944.8Q812.8 909.5 794.7 890.1Q809.9 911.3 827.1 945.8Z" fill="#2d6a44" opacity="1"/><path d="M830.7 945.3Q812.0 911.7 791.3 893.8Q809.2 913.8 829.1 946.5Z" fill="#1d4a35" opacity="1"/><path d="M829.9 944.4Q815.5 922.4 799.6 911.1Q813.3 924.3 828.6 945.6Z" fill="#245a3c" opacity="1"/><path d="M829.9 945.4Q807.5 916.3 783.4 901.8Q805.2 918.7 828.5 946.8Z" fill="#173d2c" opacity="1"/><path d="M827.0 991.2Q819.1 973.8 808.9 964.6Q815.8 975.9 825.0 992.4Z" fill="#2f6b3a" opacity="1"/><path d="M825.7 992.5Q807.7 960.9 787.3 943.6Q804.3 963.5 823.7 994.0Z" fill="#3d7d42" opacity="1"/><path d="M826.0 990.2Q805.5 960.7 783.2 944.8Q802.8 963.1 824.4 991.6Z" fill="#255a34" opacity="1"/><path d="M827.1 991.3Q811.8 971.2 794.8 961.0Q809.3 973.7 825.6 992.8Z" fill="#4a8c48" opacity="1"/><path d="M827.6 990.2Q814.0 975.3 798.9 968.5Q811.8 978.0 826.3 991.8Z" fill="#2f6b3a" opacity="1"/><path d="M827.5 992.1Q803.5 969.4 778.4 958.2Q801.8 971.8 826.5 993.6Z" fill="#3d7d42" opacity="1"/><path d="M825.6 992.7Q805.6 976.5 784.5 969.4Q804.1 979.0 824.7 994.2Z" fill="#255a34" opacity="1"/><path d="M828.0 989.9Q800.0 970.7 770.7 963.1Q798.2 974.2 826.9 992.0Z" fill="#4a8c48" opacity="1"/><path d="M825.6 992.3Q809.6 983.1 792.9 980.6Q808.5 986.0 824.9 994.0Z" fill="#2f6b3a" opacity="1"/><ellipse cx="812.4" cy="973.2" rx="4.7" ry="2.6" transform="rotate(14 812.4 973.2)" fill="#2f6b3a" opacity="1"/><ellipse cx="803.8" cy="989.9" rx="6.1" ry="3.3" transform="rotate(132 803.8 989.9)" fill="#3d7d42" opacity="1"/><ellipse cx="808.5" cy="972.1" rx="5.2" ry="2.9" transform="rotate(44 808.5 972.1)" fill="#255a34" opacity="1"/><ellipse cx="814.1" cy="988.4" rx="4.5" ry="2.5" transform="rotate(61 814.1 988.4)" fill="#4a8c48" opacity="1"/><ellipse cx="826.5" cy="980.7" rx="3.2" ry="1.7" transform="rotate(73 826.5 980.7)" fill="#2f6b3a" opacity="1"/><ellipse cx="818.6" cy="967.4" rx="4.4" ry="2.4" transform="rotate(125 818.6 967.4)" fill="#3d7d42" opacity="1"/><ellipse cx="823.7" cy="980.2" rx="6.5" ry="3.6" transform="rotate(83 823.7 980.2)" fill="#255a34" opacity="1"/><ellipse cx="812.4" cy="986.2" rx="4.5" ry="2.5" transform="rotate(141 812.4 986.2)" fill="#4a8c48" opacity="1"/><ellipse cx="808.2" cy="974.3" rx="3.7" ry="2.1" transform="rotate(99 808.2 974.3)" fill="#2f6b3a" opacity="1"/><ellipse cx="806.9" cy="970.9" rx="3.9" ry="2.1" transform="rotate(84 806.9 970.9)" fill="#3d7d42" opacity="1"/><ellipse cx="810.4" cy="976.7" rx="7.0" ry="3.8" transform="rotate(122 810.4 976.7)" fill="#255a34" opacity="1"/><ellipse cx="823.7" cy="970.9" rx="4.5" ry="2.5" transform="rotate(13 823.7 970.9)" fill="#4a8c48" opacity="1"/><ellipse cx="819.6" cy="974.7" rx="4.1" ry="2.3" transform="rotate(3 819.6 974.7)" fill="#2f6b3a" opacity="1"/><ellipse cx="807.4" cy="972.3" rx="4.6" ry="2.5" transform="rotate(166 807.4 972.3)" fill="#3d7d42" opacity="1"/></g>
<path d="M606 550.5 L606 547.5 L611 548 L611 551.8 L817.5 600 L830 994 L826 993 L826 992 L630 934.5 L630 936 L623.5 934 L623.5 932.5 Z" fill="none" stroke="#101010" stroke-width="1.4"/>
<polyline points="609.0,552.0 626.5,932.0" fill="none" stroke="#222" stroke-width="0.9" />
<polyline points="814.5,600.0 827.0,992.0" fill="none" stroke="#222" stroke-width="0.9" />
<g stroke="#1414e6" fill="#1414e6" stroke-width="1"><path d="M840 903 V876" fill="none"/><path d="M837.5 878.5 L840 871 L842.5 878.5Z"/><path d="M840 903 L849 904 L846 900.5Z"/><path d="M836.5 899.5 L843.5 906.5 M843.5 899.5 L836.5 906.5 M835.5 903 H844.5" fill="none"/></g>
<g clip-path="url(#crg)"><path d="M1228 940 C1250 930 1280 932 1303 929 C1330 926 1350 922 1366 918 C1385 911 1400 908 1418 906 C1440 901 1458 894 1476 887 L1497 880 L1497 888 L1228 970Z" fill="#7d6d6c" opacity="0.95"/><path d="M1228 940 C1250 930 1280 932 1303 929 C1330 926 1350 922 1366 918 C1385 911 1400 908 1418 906 C1440 901 1458 894 1476 887" stroke="#a89a98" stroke-width="1.2" fill="none" opacity="0.7"/><polygon points="1221.0,578.0 1238.0,574.0 1229.0,640.0 1224.5,700.0 1222.0,700.0" fill="#1c3427" stroke="none" stroke-width="0.8" /><polygon points="1234.0,574.0 1300.0,558.0 1324.0,570.0 1304.0,592.0 1272.0,602.0 1246.0,598.0" fill="#1d3629" stroke="none" stroke-width="0.8" /><path d="M1255.7 561.2L1252.0 581.5L1257.4 565.3ZM1255.7 561.2L1270.4 569.0L1257.4 565.3ZM1256.7 563.7L1252.7 582.9L1258.4 567.9ZM1256.7 563.7L1270.7 571.4L1258.4 567.9ZM1257.8 566.3L1252.7 593.3L1259.4 570.5ZM1257.8 566.3L1277.4 576.6L1259.4 570.5ZM1258.8 568.9L1255.8 596.4L1260.4 573.1ZM1258.8 568.9L1278.4 579.4L1260.4 573.1ZM1259.8 571.5L1251.4 601.2L1261.4 575.7ZM1259.8 571.5L1281.7 583.3L1261.4 575.7ZM1260.8 574.2L1256.0 598.8L1262.3 578.4ZM1260.8 574.2L1278.3 584.2L1262.3 578.4ZM1261.8 576.8L1259.9 599.8L1263.3 581.1ZM1261.8 576.8L1277.6 586.2L1263.3 581.1ZM1262.7 579.5L1259.5 606.4L1264.2 583.8ZM1262.7 579.5L1281.4 590.5L1264.2 583.8ZM1263.6 582.2L1255.0 611.3L1265.0 586.5ZM1263.6 582.2L1284.7 594.6L1265.0 586.5ZM1264.5 584.9L1257.2 613.3L1265.9 589.2ZM1264.5 584.9L1284.7 597.1L1265.9 589.2ZM1265.4 587.7L1258.9 611.3L1266.8 592.0ZM1265.4 587.7L1282.1 598.3L1266.8 592.0ZM1266.3 590.4L1256.2 621.9L1267.6 594.8ZM1266.3 590.4L1288.9 604.4L1267.6 594.8ZM1267.1 593.2L1260.6 621.6L1268.4 597.6ZM1267.1 593.2L1286.8 605.9L1268.4 597.6ZM1268.0 596.1L1258.4 627.1L1269.2 600.4ZM1268.0 596.1L1290.0 610.2L1269.2 600.4ZM1268.8 598.9L1259.2 632.4L1270.0 603.2ZM1268.8 598.9L1292.3 614.2L1270.0 603.2ZM1269.6 601.8L1262.9 636.1L1270.7 606.1ZM1269.6 601.8L1292.9 617.2L1270.7 606.1ZM1270.3 604.6L1262.9 629.6L1271.4 609.0ZM1270.3 604.6L1287.4 616.7L1271.4 609.0ZM1271.1 607.6L1266.0 634.7L1272.1 611.9ZM1271.1 607.6L1289.1 620.3L1272.1 611.9ZM1271.8 610.5L1264.3 638.2L1272.8 614.9ZM1271.8 610.5L1290.5 623.9L1272.8 614.9ZM1272.5 613.4L1262.1 645.9L1273.5 617.8ZM1272.5 613.4L1294.8 629.3L1273.5 617.8ZM1273.2 616.4L1266.3 640.9L1274.1 620.8ZM1273.2 616.4L1289.5 628.7L1274.1 620.8ZM1273.8 619.4L1266.0 641.4L1274.8 623.8ZM1273.8 619.4L1288.7 631.0L1274.8 623.8ZM1274.5 622.4L1270.3 642.0L1275.4 626.8ZM1274.5 622.4L1287.0 632.6L1275.4 626.8ZM1275.1 625.5L1270.5 650.0L1276.0 629.9ZM1275.1 625.5L1290.7 637.9L1276.0 629.9ZM1275.7 628.5L1267.5 654.4L1276.5 632.9ZM1275.7 628.5L1292.8 642.1L1276.5 632.9ZM1276.3 631.6L1272.7 653.4L1277.1 636.0ZM1276.3 631.6L1289.8 643.0L1277.1 636.0ZM1276.9 634.7L1273.6 650.3L1277.6 639.2ZM1276.9 634.7L1286.3 643.3L1277.6 639.2ZM1277.4 637.8L1274.8 654.4L1278.1 642.3ZM1277.4 637.8L1287.3 646.9L1278.1 642.3ZM1277.9 641.0L1273.8 654.5L1278.6 645.4ZM1277.9 641.0L1286.1 648.9L1278.6 645.4ZM1278.4 644.2L1276.4 651.9L1279.1 648.6ZM1278.4 644.2L1282.6 649.2L1279.1 648.6Z" fill="#18312a" opacity="1"/><path d="M1250.2 563.4L1250.8 577.9L1248.4 567.5ZM1250.2 563.4L1242.4 568.2L1248.4 567.5ZM1248.9 566.4L1249.6 580.4L1247.3 570.6ZM1248.9 566.4L1241.5 571.3L1247.3 570.6ZM1247.7 569.4L1249.6 587.2L1246.2 573.7ZM1247.7 569.4L1238.4 575.7L1246.2 573.7ZM1246.6 572.6L1247.5 591.6L1245.2 576.9ZM1246.6 572.6L1237.0 579.5L1245.2 576.9ZM1245.5 576.0L1248.5 597.0L1244.4 580.3ZM1245.5 576.0L1235.0 583.9L1244.4 580.3ZM1244.6 579.4L1248.4 598.6L1243.6 583.8ZM1244.6 579.4L1235.1 587.1L1243.6 583.8ZM1243.7 582.9L1245.5 603.8L1242.8 587.3ZM1243.7 582.9L1233.9 591.4L1242.8 587.3ZM1243.0 586.6L1246.8 608.6L1242.2 591.0ZM1243.0 586.6L1232.7 595.8L1242.2 591.0ZM1242.3 590.3L1246.7 610.1L1241.7 594.8ZM1242.3 590.3L1233.3 599.1L1241.7 594.8ZM1241.8 594.2L1247.7 619.5L1241.3 598.7ZM1241.8 594.2L1230.3 605.4L1241.3 598.7ZM1241.3 598.2L1244.4 623.4L1240.9 602.7ZM1241.3 598.2L1230.4 609.4L1240.9 602.7ZM1240.9 602.3L1245.2 623.1L1240.6 606.8ZM1240.9 602.3L1232.2 612.1L1240.6 606.8ZM1240.7 606.5L1244.3 623.1L1240.5 611.0ZM1240.7 606.5L1234.0 614.8L1240.5 611.0ZM1240.5 610.9L1244.2 626.1L1240.4 615.4ZM1240.5 610.9L1234.6 618.7L1240.4 615.4ZM1240.4 615.3L1235.7 632.9L1240.4 619.8ZM1240.4 615.3L1247.2 624.4L1240.4 619.8ZM1240.4 619.9L1236.5 633.3L1240.5 624.4ZM1240.4 619.9L1245.6 627.0L1240.5 624.4ZM1240.5 624.5L1238.3 634.0L1240.7 629.0ZM1240.5 624.5L1243.9 629.9L1240.7 629.0ZM1240.7 629.3L1239.2 637.8L1241.0 633.8ZM1240.7 629.3L1243.8 634.2L1241.0 633.8Z" fill="#1b3428" opacity="1"/><path d="M1261.2 561.6L1266.8 578.0L1265.2 563.6ZM1261.2 561.6L1276.0 558.3L1265.2 563.6ZM1263.5 562.7L1268.2 580.6L1267.5 564.9ZM1263.5 562.7L1279.4 559.7L1267.5 564.9ZM1265.9 564.0L1273.7 587.7L1269.8 566.3ZM1265.9 564.0L1287.1 560.3L1269.8 566.3ZM1268.2 565.3L1273.2 588.5L1272.0 567.8ZM1268.2 565.3L1288.5 562.7L1272.0 567.8ZM1270.5 566.8L1277.4 598.5L1274.1 569.4ZM1270.5 566.8L1298.2 563.6L1274.1 569.4ZM1272.7 568.3L1277.5 597.9L1276.3 571.0ZM1272.7 568.3L1298.4 566.5L1276.3 571.0ZM1274.9 569.9L1277.6 598.0L1278.4 572.8ZM1274.9 569.9L1299.2 569.2L1278.4 572.8ZM1277.1 571.7L1281.8 598.6L1280.5 574.7ZM1277.1 571.7L1300.5 571.9L1280.5 574.7ZM1279.2 573.5L1280.3 610.5L1282.5 576.6ZM1279.2 573.5L1310.9 574.3L1282.5 576.6ZM1281.3 575.5L1278.5 613.5L1284.5 578.7ZM1281.3 575.5L1314.1 577.3L1284.5 578.7ZM1283.4 577.5L1284.3 604.6L1286.4 580.8ZM1283.4 577.5L1306.5 580.1L1286.4 580.8ZM1285.4 579.7L1284.7 609.8L1288.3 583.1ZM1285.4 579.7L1311.0 583.1L1288.3 583.1ZM1287.4 581.9L1283.0 622.7L1290.2 585.4ZM1287.4 581.9L1322.1 587.1L1290.2 585.4ZM1289.3 584.3L1286.8 612.9L1292.1 587.9ZM1289.3 584.3L1313.5 589.1L1292.1 587.9ZM1291.2 586.8L1287.0 623.0L1293.9 590.4ZM1291.2 586.8L1321.8 593.3L1293.9 590.4ZM1293.1 589.3L1292.0 615.0L1295.6 593.0ZM1293.1 589.3L1314.3 594.9L1295.6 593.0ZM1294.9 592.0L1290.5 623.3L1297.4 595.7ZM1294.9 592.0L1321.0 599.2L1297.4 595.7ZM1296.7 594.7L1294.7 627.6L1299.1 598.6ZM1296.7 594.7L1323.6 602.9L1299.1 598.6ZM1298.5 597.6L1295.7 630.8L1300.7 601.5ZM1298.5 597.6L1325.4 606.5L1300.7 601.5ZM1300.2 600.5L1298.6 633.4L1302.3 604.5ZM1300.2 600.5L1326.5 609.9L1302.3 604.5ZM1301.9 603.6L1294.9 640.8L1303.9 607.6ZM1301.9 603.6L1332.1 614.9L1303.9 607.6ZM1303.5 606.7L1301.9 634.8L1305.5 610.8ZM1303.5 606.7L1325.5 616.0L1305.5 610.8ZM1305.1 610.0L1302.3 636.4L1307.0 614.1ZM1305.1 610.0L1325.7 619.2L1307.0 614.1ZM1306.7 613.3L1302.7 643.5L1308.5 617.5ZM1306.7 613.3L1330.1 624.2L1308.5 617.5ZM1308.2 616.8L1304.6 648.7L1309.9 620.9ZM1308.2 616.8L1332.8 628.6L1309.9 620.9ZM1309.7 620.3L1306.5 641.0L1311.3 624.5ZM1309.7 620.3L1325.3 628.9L1311.3 624.5ZM1311.1 624.0L1307.0 646.5L1312.7 628.2ZM1311.1 624.0L1328.1 633.5L1312.7 628.2ZM1312.5 627.7L1307.8 646.8L1314.0 632.0ZM1312.5 627.7L1326.9 636.3L1314.0 632.0ZM1313.9 631.6L1309.8 651.8L1315.3 635.9ZM1313.9 631.6L1328.9 640.8L1315.3 635.9ZM1315.2 635.5L1311.9 649.1L1316.6 639.8ZM1315.2 635.5L1325.0 642.4L1316.6 639.8ZM1316.5 639.6L1313.8 650.7L1317.8 643.9ZM1316.5 639.6L1324.4 645.6L1317.8 643.9ZM1317.8 643.7L1316.2 651.3L1319.0 648.0ZM1317.8 643.7L1322.7 648.3L1319.0 648.0Z" fill="#213b2a" opacity="1"/><path d="M1261.2 557.9L1265.7 574.1L1265.7 558.5ZM1261.2 557.9L1269.8 553.3L1265.7 558.5ZM1264.2 558.2L1271.6 576.7L1268.6 559.0ZM1264.2 558.2L1274.1 553.2L1268.6 559.0ZM1267.1 558.7L1273.5 579.7L1271.5 559.7ZM1267.1 558.7L1278.1 553.5L1271.5 559.7ZM1270.1 559.3L1278.4 591.3L1274.4 560.4ZM1270.1 559.3L1286.0 551.8L1274.4 560.4ZM1273.0 560.0L1281.9 584.8L1277.3 561.4ZM1273.0 560.0L1286.2 554.8L1277.3 561.4ZM1276.0 560.9L1280.2 599.1L1280.2 562.4ZM1276.0 560.9L1295.0 553.5L1280.2 562.4ZM1278.9 561.9L1285.5 591.3L1283.1 563.6ZM1278.9 561.9L1294.3 557.0L1283.1 563.6ZM1281.9 563.1L1288.3 602.8L1286.0 564.9ZM1281.9 563.1L1302.1 556.9L1286.0 564.9ZM1284.8 564.3L1289.3 603.9L1288.9 566.3ZM1284.8 564.3L1305.1 559.0L1288.9 566.3ZM1287.8 565.7L1292.5 606.0L1291.8 567.8ZM1287.8 565.7L1308.6 561.0L1291.8 567.8ZM1290.7 567.3L1298.1 600.9L1294.6 569.5ZM1290.7 567.3L1308.6 564.1L1294.6 569.5ZM1293.7 569.0L1302.7 611.7L1297.5 571.3ZM1293.7 569.0L1316.1 565.3L1297.5 571.3ZM1296.7 570.8L1300.6 609.1L1300.4 573.3ZM1296.7 570.8L1316.7 568.3L1300.4 573.3ZM1299.6 572.7L1305.2 613.1L1303.3 575.3ZM1299.6 572.7L1320.8 570.7L1303.3 575.3ZM1302.6 574.8L1309.6 616.6L1306.2 577.5ZM1302.6 574.8L1324.6 573.3L1306.2 577.5ZM1305.5 577.0L1307.6 606.2L1309.1 579.8ZM1305.5 577.0L1321.1 576.8L1309.1 579.8ZM1308.5 579.4L1309.0 616.7L1312.0 582.2ZM1308.5 579.4L1328.1 579.2L1312.0 582.2ZM1311.5 581.8L1310.5 610.0L1314.8 584.8ZM1311.5 581.8L1326.5 582.5L1314.8 584.8ZM1314.4 584.4L1320.0 617.3L1317.7 587.5ZM1314.4 584.4L1331.8 585.4L1317.7 587.5ZM1317.4 587.2L1316.0 623.7L1320.6 590.3ZM1317.4 587.2L1336.5 588.5L1320.6 590.3ZM1320.3 590.1L1321.2 620.4L1323.5 593.3ZM1320.3 590.1L1336.3 591.8L1323.5 593.3ZM1323.3 593.1L1323.9 620.0L1326.4 596.3ZM1323.3 593.1L1337.5 595.1L1326.4 596.3ZM1326.3 596.2L1330.4 623.1L1329.3 599.5ZM1326.3 596.2L1340.5 598.5L1329.3 599.5ZM1329.2 599.5L1331.1 614.7L1332.2 602.9ZM1329.2 599.5L1337.4 601.7L1332.2 602.9ZM1332.2 602.9L1332.0 615.2L1335.1 606.3ZM1332.2 602.9L1339.0 605.1L1335.1 606.3ZM1335.1 606.4L1336.7 614.6L1338.0 609.9ZM1335.1 606.4L1339.8 608.5L1338.0 609.9Z" fill="#2a4226" opacity="1"/><path d="M1261.4 558.1L1269.8 583.6L1265.9 557.5ZM1264.7 557.7L1271.3 578.7L1269.1 557.3ZM1267.9 557.4L1278.2 582.4L1272.4 557.0ZM1271.1 557.1L1280.1 582.2L1275.6 556.9ZM1274.2 556.9L1289.1 588.5L1278.7 556.8ZM1277.4 556.8L1286.9 583.6L1281.9 556.8ZM1280.5 556.8L1294.5 589.3L1285.0 556.9ZM1283.5 556.9L1296.2 597.5L1288.0 557.1ZM1286.6 557.0L1299.4 593.8L1291.1 557.3ZM1289.6 557.2L1299.0 597.8L1294.1 557.6ZM1292.5 557.4L1299.5 587.8L1297.0 557.9ZM1295.5 557.7L1306.0 602.4L1299.9 558.4ZM1298.4 558.1L1305.9 595.4L1302.8 558.9ZM1301.3 558.6L1307.2 593.3L1305.7 559.5ZM1304.1 559.2L1311.4 598.6L1308.5 560.2ZM1306.9 559.8L1315.3 600.2L1311.3 560.9ZM1309.7 560.5L1318.3 593.2L1314.0 561.7ZM1312.5 561.2L1319.3 596.7L1316.8 562.6ZM1315.2 562.1L1319.5 591.6L1319.4 563.6ZM1317.9 563.0L1325.5 607.2L1322.1 564.6ZM1320.5 564.0L1325.0 593.0L1324.7 565.7ZM1323.2 565.0L1334.7 599.4L1327.3 566.9ZM1325.8 566.2L1334.5 595.3L1329.8 568.1ZM1328.3 567.4L1334.1 600.7L1332.3 569.4ZM1330.9 568.6L1336.5 605.9L1334.8 570.8ZM1333.4 570.0L1338.3 594.3L1337.3 572.3ZM1335.8 571.4L1342.0 602.8L1339.7 573.8ZM1338.3 572.9L1345.0 597.1L1342.0 575.4ZM1340.7 574.5L1348.5 603.8L1344.4 577.1ZM1343.1 576.1L1348.3 598.4L1346.7 578.8ZM1345.4 577.8L1347.0 600.5L1348.9 580.6ZM1347.7 579.6L1349.2 593.3L1351.2 582.5ZM1350.0 581.5L1351.2 592.8L1353.4 584.5ZM1352.3 583.5L1354.6 591.1L1355.6 586.5Z" fill="#34481f" opacity="1"/><polygon points="1416.0,530.0 1493.0,512.0 1493.0,530.0 1470.0,534.0 1440.0,532.0" fill="#2c3c1f" stroke="none" stroke-width="0.8" /><path d="M1468.6 511.9L1464.8 528.7L1464.5 512.6ZM1468.6 511.9L1462.5 509.4L1464.5 512.6ZM1465.7 512.4L1461.0 528.3L1461.6 513.2ZM1465.7 512.4L1459.7 510.2L1461.6 513.2ZM1462.9 512.9L1454.9 541.2L1458.8 514.0ZM1462.9 512.9L1453.5 509.1L1458.8 514.0ZM1460.1 513.6L1457.9 539.6L1456.1 514.8ZM1460.1 513.6L1451.4 510.6L1456.1 514.8ZM1457.4 514.4L1454.9 545.7L1453.4 515.8ZM1457.4 514.4L1447.1 511.0L1453.4 515.8ZM1454.7 515.3L1453.0 542.8L1450.8 516.8ZM1454.7 515.3L1445.4 512.8L1450.8 516.8ZM1452.1 516.3L1450.5 551.2L1448.2 518.0ZM1452.1 516.3L1440.6 513.4L1448.2 518.0ZM1449.5 517.4L1442.1 555.5L1445.7 519.2ZM1449.5 517.4L1436.9 514.6L1445.7 519.2ZM1446.9 518.6L1442.8 557.5L1443.2 520.5ZM1446.9 518.6L1434.2 516.2L1443.2 520.5ZM1444.4 519.9L1439.5 555.6L1440.8 522.0ZM1444.4 519.9L1432.5 518.3L1440.8 522.0ZM1442.0 521.3L1435.0 560.5L1438.5 523.5ZM1442.0 521.3L1429.0 519.9L1438.5 523.5ZM1439.6 522.8L1435.4 557.1L1436.2 525.2ZM1439.6 522.8L1428.1 522.2L1436.2 525.2ZM1437.3 524.4L1434.7 555.7L1434.0 526.9ZM1437.3 524.4L1426.7 524.4L1434.0 526.9ZM1435.0 526.1L1436.4 561.4L1431.8 528.7ZM1435.0 526.1L1423.2 526.4L1431.8 528.7ZM1432.8 527.9L1432.8 558.2L1429.6 530.7ZM1432.8 527.9L1422.5 528.8L1429.6 530.7ZM1430.6 529.8L1428.4 559.4L1427.6 532.7ZM1430.6 529.8L1420.6 531.1L1427.6 532.7ZM1428.5 531.8L1426.8 568.7L1425.6 534.8ZM1428.5 531.8L1416.4 533.5L1425.6 534.8ZM1426.4 533.9L1425.1 558.0L1423.6 537.0ZM1426.4 533.9L1418.3 535.8L1423.6 537.0ZM1424.4 536.1L1422.5 567.9L1421.7 539.4ZM1424.4 536.1L1414.0 538.6L1421.7 539.4ZM1422.4 538.5L1423.2 568.4L1419.8 541.8ZM1422.4 538.5L1412.7 541.2L1419.8 541.8ZM1420.5 540.9L1419.0 568.0L1418.0 544.3ZM1420.5 540.9L1411.7 543.8L1418.0 544.3ZM1418.6 543.4L1417.3 562.1L1416.3 546.9ZM1418.6 543.4L1412.5 546.1L1416.3 546.9ZM1416.8 546.1L1416.9 565.0L1414.6 549.6ZM1416.8 546.1L1410.7 549.0L1414.6 549.6ZM1415.1 548.8L1415.1 562.3L1412.9 552.4ZM1415.1 548.8L1410.6 551.5L1412.9 552.4ZM1413.4 551.7L1413.0 564.7L1411.4 555.3ZM1413.4 551.7L1409.1 554.4L1411.4 555.3ZM1411.7 554.6L1412.2 562.9L1409.8 558.3ZM1411.7 554.6L1408.9 557.1L1409.8 558.3Z" fill="#33431f" opacity="1"/><path d="M1466.0 514.0L1466.0 527.5L1462.6 516.4ZM1462.7 516.3L1462.9 533.7L1459.4 518.9ZM1459.5 518.8L1460.9 536.2L1456.4 521.6ZM1456.5 521.5L1458.9 543.9L1453.5 524.5ZM1453.6 524.4L1453.4 545.9L1450.8 527.5ZM1450.9 527.4L1449.8 555.4L1448.3 530.7ZM1448.4 530.6L1450.1 553.4L1446.0 534.0ZM1446.0 534.0L1446.6 564.5L1443.8 537.5ZM1443.8 537.5L1444.2 558.3L1441.7 541.2ZM1441.7 541.2L1441.6 569.3L1439.9 545.0ZM1439.8 545.1L1440.9 567.1L1438.2 548.9ZM1438.1 549.1L1438.4 568.3L1436.6 553.0ZM1436.5 553.3L1438.9 568.0L1435.3 557.3ZM1435.1 557.7L1436.0 567.6L1434.0 561.8Z" fill="#2b3b1e" opacity="1"/><path d="M1461.1 511.4L1464.9 531.8L1464.9 513.8ZM1461.1 511.4L1476.1 509.8L1464.9 513.8ZM1463.1 512.6L1467.3 531.2L1466.7 515.2ZM1463.1 512.6L1477.0 512.1L1466.7 515.2ZM1464.9 513.8L1467.1 541.4L1468.3 516.8ZM1464.9 513.8L1484.8 513.8L1468.3 516.8ZM1466.7 515.2L1467.8 544.6L1469.9 518.4ZM1466.7 515.2L1487.7 516.6L1469.9 518.4ZM1468.3 516.7L1467.5 544.1L1471.3 520.1ZM1468.3 516.7L1487.8 519.4L1471.3 520.1ZM1469.8 518.3L1470.3 550.3L1472.6 521.9ZM1469.8 518.3L1492.2 522.8L1472.6 521.9ZM1471.2 520.0L1466.7 551.6L1473.7 523.7ZM1471.2 520.0L1493.3 526.1L1473.7 523.7ZM1472.5 521.8L1469.8 556.7L1474.7 525.7ZM1472.5 521.8L1496.0 529.9L1474.7 525.7ZM1473.7 523.7L1471.2 559.1L1475.6 527.8ZM1473.7 523.7L1496.8 533.5L1475.6 527.8ZM1474.7 525.7L1466.3 566.6L1476.4 529.9ZM1474.7 525.7L1501.3 538.7L1476.4 529.9ZM1475.7 527.9L1474.7 562.8L1477.1 532.1ZM1475.7 527.9L1496.9 540.3L1477.1 532.1ZM1476.5 530.1L1468.0 568.9L1477.6 534.4ZM1476.5 530.1L1499.9 545.5L1477.6 534.4ZM1477.2 532.4L1474.0 572.4L1478.1 536.8ZM1477.2 532.4L1499.8 549.2L1478.1 536.8ZM1477.7 534.9L1473.4 569.1L1478.4 539.3ZM1477.7 534.9L1496.3 550.5L1478.4 539.3ZM1478.2 537.4L1474.7 567.0L1478.6 541.9ZM1478.2 537.4L1493.3 551.9L1478.6 541.9ZM1478.5 540.1L1467.6 573.9L1478.7 544.6ZM1478.5 540.1L1496.0 558.0L1478.7 544.6ZM1478.6 542.9L1469.0 582.7L1478.7 547.4ZM1478.6 542.9L1498.0 564.2L1478.7 547.4ZM1478.7 545.7L1492.5 585.2L1478.5 550.2ZM1478.7 545.7L1458.3 566.9L1478.5 550.2ZM1478.6 548.7L1488.1 586.1L1478.3 553.2ZM1478.6 548.7L1459.1 567.6L1478.3 553.2ZM1478.4 551.8L1483.7 592.0L1477.9 556.2ZM1478.4 551.8L1457.2 570.8L1477.9 556.2ZM1478.1 554.9L1487.9 590.8L1477.5 559.4ZM1478.1 554.9L1458.1 571.9L1477.5 559.4ZM1477.7 558.2L1484.6 584.1L1476.9 562.6ZM1477.7 558.2L1463.0 570.4L1476.9 562.6ZM1477.1 561.5L1482.5 589.3L1476.2 566.0ZM1477.1 561.5L1461.3 573.8L1476.2 566.0ZM1476.4 565.0L1479.8 596.6L1475.4 569.4ZM1476.4 565.0L1458.2 578.1L1475.4 569.4ZM1475.6 568.6L1479.7 590.7L1474.4 572.9ZM1475.6 568.6L1462.6 578.0L1474.4 572.9ZM1474.6 572.2L1477.3 590.5L1473.4 576.6ZM1474.6 572.2L1463.9 580.0L1473.4 576.6ZM1473.5 576.0L1476.6 598.7L1472.2 580.3ZM1473.5 576.0L1459.9 584.9L1472.2 580.3ZM1472.3 579.8L1474.9 594.9L1470.9 584.1ZM1472.3 579.8L1463.3 586.1L1470.9 584.1ZM1471.0 583.8L1473.4 599.2L1469.5 588.0ZM1471.0 583.8L1461.6 590.0L1469.5 588.0ZM1469.6 587.8L1470.4 596.2L1468.0 592.1ZM1469.6 587.8L1464.6 591.8L1468.0 592.1Z" fill="#2f3f1f" opacity="1"/><path d="M1469.5 511.7L1469.6 531.6L1473.4 513.8ZM1469.5 511.7L1478.7 510.7L1473.4 513.8ZM1472.2 513.1L1471.7 532.5L1475.9 515.7ZM1472.2 513.1L1481.3 513.1L1475.9 515.7ZM1474.8 514.8L1475.0 533.2L1478.2 517.8ZM1474.8 514.8L1483.3 515.8L1478.2 517.8ZM1477.2 516.8L1479.0 546.9L1480.3 520.0ZM1477.2 516.8L1490.1 518.7L1480.3 520.0ZM1479.4 519.0L1477.1 541.2L1482.1 522.5ZM1479.4 519.0L1489.0 521.8L1482.1 522.5ZM1481.3 521.4L1481.8 548.6L1483.7 525.2ZM1481.3 521.4L1492.4 525.6L1483.7 525.2ZM1483.1 524.1L1483.0 555.3L1485.1 528.1ZM1483.1 524.1L1495.2 529.8L1485.1 528.1ZM1484.6 527.0L1484.7 551.0L1486.2 531.2ZM1484.6 527.0L1493.5 532.6L1486.2 531.2ZM1485.9 530.2L1483.3 555.9L1487.2 534.5ZM1485.9 530.2L1494.9 536.8L1487.2 534.5ZM1486.9 533.6L1483.3 568.3L1487.9 537.9ZM1486.9 533.6L1498.4 542.8L1487.9 537.9ZM1487.8 537.2L1484.6 561.9L1488.4 541.6ZM1487.8 537.2L1495.4 544.8L1488.4 541.6ZM1488.3 541.1L1480.7 566.8L1488.7 545.5ZM1488.3 541.1L1496.1 549.7L1488.7 545.5ZM1488.7 545.2L1483.1 568.8L1488.8 549.7ZM1488.7 545.2L1495.2 553.5L1488.8 549.7ZM1488.8 549.5L1492.5 575.0L1488.7 554.0ZM1488.8 549.5L1481.9 558.2L1488.7 554.0ZM1488.7 554.1L1493.7 576.2L1488.4 558.5ZM1488.7 554.1L1482.3 561.7L1488.4 558.5ZM1488.3 558.8L1489.6 574.9L1487.8 563.3ZM1488.3 558.8L1483.7 564.5L1487.8 563.3ZM1487.8 563.9L1490.0 579.6L1487.1 568.3ZM1487.8 563.9L1483.0 569.4L1487.1 568.3ZM1486.9 569.1L1487.0 576.9L1486.1 573.5ZM1486.9 569.1L1484.7 572.6L1486.1 573.5Z" fill="#25361f" opacity="1"/><ellipse cx="1492.1" cy="880.2" rx="5.4" ry="3.0" transform="rotate(35 1492.1 880.2)" fill="#2f5535" opacity="1"/><ellipse cx="1493.8" cy="881.8" rx="6.9" ry="3.8" transform="rotate(65 1493.8 881.8)" fill="#27492f" opacity="1"/><ellipse cx="1471.9" cy="876.2" rx="4.6" ry="2.5" transform="rotate(114 1471.9 876.2)" fill="#3a6340" opacity="1"/><ellipse cx="1475.6" cy="884.4" rx="5.6" ry="3.1" transform="rotate(82 1475.6 884.4)" fill="#1f3d2b" opacity="1"/><ellipse cx="1478.2" cy="886.8" rx="5.4" ry="3.0" transform="rotate(127 1478.2 886.8)" fill="#2f5535" opacity="1"/><ellipse cx="1469.5" cy="879.6" rx="5.1" ry="2.8" transform="rotate(157 1469.5 879.6)" fill="#27492f" opacity="1"/><ellipse cx="1471.2" cy="885.1" rx="6.7" ry="3.7" transform="rotate(82 1471.2 885.1)" fill="#3a6340" opacity="1"/><ellipse cx="1491.9" cy="875.8" rx="7.0" ry="3.8" transform="rotate(108 1491.9 875.8)" fill="#1f3d2b" opacity="1"/><ellipse cx="1476.3" cy="869.3" rx="5.7" ry="3.1" transform="rotate(51 1476.3 869.3)" fill="#2f5535" opacity="1"/><ellipse cx="1476.1" cy="887.1" rx="5.2" ry="2.8" transform="rotate(125 1476.1 887.1)" fill="#27492f" opacity="1"/><ellipse cx="1483.5" cy="872.9" rx="5.6" ry="3.1" transform="rotate(24 1483.5 872.9)" fill="#3a6340" opacity="1"/><ellipse cx="1490.7" cy="873.0" rx="5.7" ry="3.1" transform="rotate(61 1490.7 873.0)" fill="#1f3d2b" opacity="1"/><ellipse cx="1488.3" cy="885.0" rx="6.4" ry="3.5" transform="rotate(98 1488.3 885.0)" fill="#2f5535" opacity="1"/><ellipse cx="1465.2" cy="885.9" rx="4.4" ry="2.4" transform="rotate(65 1465.2 885.9)" fill="#27492f" opacity="1"/><ellipse cx="1474.0" cy="882.5" rx="6.7" ry="3.7" transform="rotate(62 1474.0 882.5)" fill="#3a6340" opacity="1"/><ellipse cx="1490.7" cy="887.0" rx="4.1" ry="2.3" transform="rotate(114 1490.7 887.0)" fill="#1f3d2b" opacity="1"/><ellipse cx="1457.4" cy="894.6" rx="5.4" ry="3.0" transform="rotate(57 1457.4 894.6)" fill="#35603a" opacity="1"/><ellipse cx="1461.4" cy="897.1" rx="6.9" ry="3.8" transform="rotate(176 1461.4 897.1)" fill="#27492f" opacity="1"/><ellipse cx="1467.9" cy="895.0" rx="6.5" ry="3.6" transform="rotate(117 1467.9 895.0)" fill="#35603a" opacity="1"/><ellipse cx="1462.0" cy="901.0" rx="4.2" ry="2.3" transform="rotate(83 1462.0 901.0)" fill="#27492f" opacity="1"/><ellipse cx="1456.0" cy="897.6" rx="4.7" ry="2.6" transform="rotate(178 1456.0 897.6)" fill="#35603a" opacity="1"/><ellipse cx="1452.2" cy="894.7" rx="4.4" ry="2.4" transform="rotate(71 1452.2 894.7)" fill="#27492f" opacity="1"/><ellipse cx="1462.8" cy="891.8" rx="4.5" ry="2.5" transform="rotate(117 1462.8 891.8)" fill="#35603a" opacity="1"/><ellipse cx="1460.5" cy="898.4" rx="4.8" ry="2.6" transform="rotate(146 1460.5 898.4)" fill="#27492f" opacity="1"/><ellipse cx="1491.4" cy="853.3" rx="3.2" ry="1.8" transform="rotate(84 1491.4 853.3)" fill="#3a6340" opacity="1"/><ellipse cx="1487.1" cy="854.3" rx="4.9" ry="2.7" transform="rotate(161 1487.1 854.3)" fill="#2f5535" opacity="1"/><ellipse cx="1487.1" cy="848.2" rx="4.1" ry="2.2" transform="rotate(96 1487.1 848.2)" fill="#3a6340" opacity="1"/><ellipse cx="1487.7" cy="853.5" rx="3.6" ry="2.0" transform="rotate(91 1487.7 853.5)" fill="#2f5535" opacity="1"/></g>
<g clip-path="url(#crg)"><polygon points="1247.7,838.7 1249.3,840.5 1250.9,842.3 1252.6,844.1 1254.3,846.0 1256.1,848.0 1257.9,850.0 1259.8,852.0 1261.7,854.0 1263.7,856.0 1265.7,858.1 1267.7,860.2 1269.8,862.2 1271.9,864.3 1274.0,866.4 1276.1,868.5 1278.2,870.5 1280.4,872.5 1282.5,874.5 1284.7,876.5 1286.9,878.5 1289.0,880.4 1291.2,882.2 1293.4,884.1 1295.5,885.8 1297.7,887.5 1299.8,889.2 1301.9,890.7 1303.9,892.2 1306.0,893.7 1308.0,895.0 1311.3,895.4 1314.3,895.2 1317.2,894.5 1320.0,893.2 1322.6,891.4 1325.0,889.0 1328.5,885.6 1332.0,882.1 1335.5,878.7 1339.0,875.3 1342.5,871.9 1346.0,868.5 1349.4,865.0 1352.9,861.6 1356.4,858.2 1359.9,854.8 1363.4,851.3 1366.9,847.9 1373.3,848.7 1369.7,852.2 1366.0,855.8 1362.3,859.3 1358.7,862.9 1355.0,866.4 1351.4,870.0 1347.7,873.5 1344.1,877.1 1340.4,880.6 1336.7,884.2 1333.1,887.7 1329.4,891.3 1327.0,893.7 1324.4,895.5 1321.5,896.8 1318.5,897.5 1315.3,897.7 1311.9,897.3 1309.3,896.0 1306.7,894.6 1304.1,893.2 1301.5,891.7 1299.0,890.0 1296.4,888.4 1293.8,886.6 1291.3,884.8 1288.7,882.9 1286.2,881.0 1283.7,879.0 1281.3,877.0 1278.8,874.9 1276.4,872.8 1274.0,870.7 1271.7,868.5 1269.4,866.3 1267.1,864.1 1264.9,861.9 1262.7,859.7 1260.6,857.5 1258.6,855.3 1256.6,853.1 1254.6,850.9 1252.7,848.7 1250.9,846.5 1249.2,844.4 1247.5,842.3 1245.9,840.2 1244.4,838.2" fill="#8c0a14" stroke="none" stroke-width="0.8" /><polygon points="1244.4,838.2 1245.9,840.2 1247.5,842.3 1249.2,844.4 1250.9,846.5 1252.7,848.7 1254.6,850.9 1256.6,853.1 1258.6,855.3 1260.6,857.5 1262.7,859.7 1264.9,861.9 1267.1,864.1 1269.4,866.3 1271.7,868.5 1274.0,870.7 1276.4,872.8 1278.8,874.9 1281.3,877.0 1283.7,879.0 1286.2,881.0 1288.7,882.9 1291.3,884.8 1293.8,886.6 1296.4,888.4 1299.0,890.0 1301.5,891.7 1304.1,893.2 1306.7,894.6 1309.3,896.0 1311.9,897.3 1315.3,897.7 1318.5,897.5 1321.5,896.8 1324.4,895.5 1327.0,893.7 1329.4,891.3 1333.1,887.7 1336.7,884.2 1340.4,880.6 1344.1,877.1 1347.7,873.5 1351.4,870.0 1355.0,866.4 1358.7,862.9 1362.3,859.3 1366.0,855.8 1369.7,852.2 1373.3,848.7 1379.7,849.5 1375.9,853.1 1372.1,856.8 1368.3,860.5 1364.4,864.2 1360.6,867.8 1356.8,871.5 1353.0,875.2 1349.1,878.9 1345.3,882.5 1341.5,886.2 1337.7,889.9 1333.9,893.6 1331.4,896.0 1328.7,897.8 1325.8,899.1 1322.7,899.8 1319.3,900.0 1315.7,899.6 1312.6,898.4 1309.5,897.1 1306.4,895.6 1303.3,894.1 1300.3,892.6 1297.2,890.9 1294.3,889.1 1291.3,887.3 1288.4,885.4 1285.6,883.5 1282.7,881.5 1280.0,879.4 1277.2,877.3 1274.6,875.1 1271.9,872.9 1269.4,870.6 1266.9,868.3 1264.5,866.0 1262.1,863.7 1259.8,861.3 1257.6,858.9 1255.4,856.6 1253.3,854.2 1251.3,851.8 1249.4,849.4 1247.6,847.0 1245.8,844.6 1244.2,842.3 1242.6,839.9 1241.2,837.6" fill="#9389a2" stroke="none" stroke-width="0.8" /><polygon points="1241.2,837.6 1242.6,839.9 1244.2,842.3 1245.8,844.6 1247.6,847.0 1249.4,849.4 1251.3,851.8 1253.3,854.2 1255.4,856.6 1257.6,858.9 1259.8,861.3 1262.1,863.7 1264.5,866.0 1266.9,868.3 1269.4,870.6 1271.9,872.9 1274.6,875.1 1277.2,877.3 1280.0,879.4 1282.7,881.5 1285.6,883.5 1288.4,885.4 1291.3,887.3 1294.3,889.1 1297.2,890.9 1300.3,892.6 1303.3,894.1 1306.4,895.6 1309.5,897.1 1312.6,898.4 1315.7,899.6 1319.3,900.0 1322.7,899.8 1325.8,899.1 1328.7,897.8 1331.4,896.0 1333.9,893.6 1337.7,889.9 1341.5,886.2 1345.3,882.5 1349.1,878.9 1353.0,875.2 1356.8,871.5 1360.6,867.8 1364.4,864.2 1368.3,860.5 1372.1,856.8 1375.9,853.1 1379.7,849.5 1386.1,850.3 1382.2,854.1 1378.2,857.9 1374.2,861.7 1370.2,865.5 1366.2,869.3 1362.2,873.1 1358.2,876.9 1354.2,880.7 1350.2,884.5 1346.3,888.3 1342.3,892.1 1338.3,895.9 1335.8,898.2 1333.1,900.1 1330.1,901.4 1326.9,902.1 1323.3,902.2 1319.6,901.9 1315.9,900.7 1312.2,899.5 1308.6,898.1 1305.1,896.6 1301.6,895.1 1298.1,893.4 1294.7,891.7 1291.4,889.9 1288.1,888.0 1284.9,886.0 1281.7,883.9 1278.7,881.8 1275.7,879.6 1272.7,877.4 1269.9,875.1 1267.1,872.7 1264.4,870.3 1261.8,867.9 1259.3,865.4 1256.8,862.9 1254.5,860.4 1252.2,857.8 1250.1,855.3 1248.0,852.7 1246.1,850.1 1244.2,847.5 1242.5,844.9 1240.8,842.3 1239.3,839.7 1237.9,837.1" fill="#8c0a14" stroke="none" stroke-width="0.8" /><polygon points="1237.9,837.1 1239.3,839.7 1240.8,842.3 1242.5,844.9 1244.2,847.5 1246.1,850.1 1248.0,852.7 1250.1,855.3 1252.2,857.8 1254.5,860.4 1256.8,862.9 1259.3,865.4 1261.8,867.9 1264.4,870.3 1267.1,872.7 1269.9,875.1 1272.7,877.4 1275.7,879.6 1278.7,881.8 1281.7,883.9 1284.9,886.0 1288.1,888.0 1291.4,889.9 1294.7,891.7 1298.1,893.4 1301.6,895.1 1305.1,896.6 1308.6,898.1 1312.2,899.5 1315.9,900.7 1319.6,901.9 1323.3,902.2 1326.9,902.1 1330.1,901.4 1333.1,900.1 1335.8,898.2 1338.3,895.9 1342.3,892.1 1346.3,888.3 1350.2,884.5 1354.2,880.7 1358.2,876.9 1362.2,873.1 1366.2,869.3 1370.2,865.5 1374.2,861.7 1378.2,857.9 1382.2,854.1 1386.1,850.3 1392.6,851.0 1388.4,855.0 1384.2,858.9 1380.1,862.8 1375.9,866.7 1371.8,870.7 1367.6,874.6 1363.5,878.5 1359.3,882.4 1355.2,886.4 1351.0,890.3 1346.9,894.2 1342.7,898.1 1340.2,900.5 1337.5,902.4 1334.4,903.6 1331.0,904.4 1327.4,904.5 1323.4,904.1 1319.2,903.1 1315.0,901.9 1310.9,900.6 1306.8,899.1 1302.9,897.6 1299.0,896.0 1295.2,894.2 1291.4,892.4 1287.8,890.5 1284.2,888.5 1280.8,886.4 1277.4,884.2 1274.1,882.0 1270.9,879.6 1267.8,877.3 1264.8,874.8 1261.9,872.3 1259.1,869.8 1256.4,867.2 1253.9,864.5 1251.4,861.9 1249.1,859.1 1246.8,856.4 1244.7,853.6 1242.7,850.8 1240.8,848.0 1239.1,845.1 1237.5,842.3 1236.0,839.4 1234.6,836.6" fill="#9389a2" stroke="none" stroke-width="0.8" /><polygon points="1234.6,836.6 1236.0,839.4 1237.5,842.3 1239.1,845.1 1240.8,848.0 1242.7,850.8 1244.7,853.6 1246.8,856.4 1249.1,859.1 1251.4,861.9 1253.9,864.5 1256.4,867.2 1259.1,869.8 1261.9,872.3 1264.8,874.8 1267.8,877.3 1270.9,879.6 1274.1,882.0 1277.4,884.2 1280.8,886.4 1284.2,888.5 1287.8,890.5 1291.4,892.4 1295.2,894.2 1299.0,896.0 1302.9,897.6 1306.8,899.1 1310.9,900.6 1315.0,901.9 1319.2,903.1 1323.4,904.1 1327.4,904.5 1331.0,904.4 1334.4,903.6 1337.5,902.4 1340.2,900.5 1342.7,898.1 1346.9,894.2 1351.0,890.3 1355.2,886.4 1359.3,882.4 1363.5,878.5 1367.6,874.6 1371.8,870.7 1375.9,866.7 1380.1,862.8 1384.2,858.9 1388.4,855.0 1392.6,851.0 1399.0,851.8 1394.7,855.9 1390.3,859.9 1386.0,864.0 1381.7,868.0 1377.4,872.1 1373.1,876.1 1368.7,880.2 1364.4,884.2 1360.1,888.3 1355.8,892.3 1351.5,896.4 1347.1,900.4 1344.6,902.8 1341.8,904.7 1338.7,905.9 1335.2,906.7 1331.4,906.8 1327.3,906.4 1322.5,905.4 1317.8,904.3 1313.1,903.0 1308.6,901.6 1304.2,900.1 1299.8,898.5 1295.6,896.8 1291.5,894.9 1287.5,893.0 1283.6,891.0 1279.8,888.8 1276.1,886.6 1272.5,884.3 1269.1,881.9 1265.7,879.5 1262.5,876.9 1259.4,874.3 1256.5,871.7 1253.6,868.9 1250.9,866.1 1248.3,863.3 1245.9,860.4 1243.6,857.5 1241.4,854.5 1239.4,851.5 1237.5,848.5 1235.7,845.4 1234.1,842.3 1232.7,839.2 1231.3,836.1" fill="#8c0a14" stroke="none" stroke-width="0.8" /><polygon points="1231.3,836.1 1232.7,839.2 1234.1,842.3 1235.7,845.4 1237.5,848.5 1239.4,851.5 1241.4,854.5 1243.6,857.5 1245.9,860.4 1248.3,863.3 1250.9,866.1 1253.6,868.9 1256.5,871.7 1259.4,874.3 1262.5,876.9 1265.7,879.5 1269.1,881.9 1272.5,884.3 1276.1,886.6 1279.8,888.8 1283.6,891.0 1287.5,893.0 1291.5,894.9 1295.6,896.8 1299.8,898.5 1304.2,900.1 1308.6,901.6 1313.1,903.0 1317.8,904.3 1322.5,905.4 1327.3,906.4 1331.4,906.8 1335.2,906.7 1338.7,905.9 1341.8,904.7 1344.6,902.8 1347.1,900.4 1351.5,896.4 1355.8,892.3 1360.1,888.3 1364.4,884.2 1368.7,880.2 1373.1,876.1 1377.4,872.1 1381.7,868.0 1386.0,864.0 1390.3,859.9 1394.7,855.9 1399.0,851.8 1405.4,852.6 1400.9,856.8 1396.4,861.0 1391.9,865.1 1387.4,869.3 1383.0,873.5 1378.5,877.7 1374.0,881.8 1369.5,886.0 1365.0,890.2 1360.5,894.4 1356.1,898.5 1351.6,902.7 1349.1,905.1 1346.2,906.9 1343.0,908.2 1339.4,908.9 1335.4,909.1 1331.1,908.7 1325.8,907.8 1320.5,906.7 1315.4,905.5 1310.4,904.1 1305.5,902.6 1300.7,901.0 1296.1,899.3 1291.6,897.5 1287.2,895.5 1282.9,893.5 1278.8,891.3 1274.8,889.0 1271.0,886.7 1267.2,884.2 1263.7,881.7 1260.2,879.0 1257.0,876.3 1253.8,873.5 1250.8,870.7 1248.0,867.8 1245.3,864.8 1242.7,861.7 1240.3,858.6 1238.1,855.4 1236.0,852.2 1234.1,849.0 1232.4,845.6 1230.8,842.3 1229.3,838.9 1228.1,835.5" fill="#9389a2" stroke="none" stroke-width="0.8" /><polygon points="1228.1,835.5 1229.3,838.9 1230.8,842.3 1232.4,845.6 1234.1,849.0 1236.0,852.2 1238.1,855.4 1240.3,858.6 1242.7,861.7 1245.3,864.8 1248.0,867.8 1250.8,870.7 1253.8,873.5 1257.0,876.3 1260.2,879.0 1263.7,881.7 1267.2,884.2 1271.0,886.7 1274.8,889.0 1278.8,891.3 1282.9,893.5 1287.2,895.5 1291.6,897.5 1296.1,899.3 1300.7,901.0 1305.5,902.6 1310.4,904.1 1315.4,905.5 1320.5,906.7 1325.8,907.8 1331.1,908.7 1335.4,909.1 1339.4,908.9 1343.0,908.2 1346.2,906.9 1349.1,905.1 1351.6,902.7 1356.1,898.5 1360.5,894.4 1365.0,890.2 1369.5,886.0 1374.0,881.8 1378.5,877.7 1383.0,873.5 1387.4,869.3 1391.9,865.1 1396.4,861.0 1400.9,856.8 1405.4,852.6 1411.8,853.4 1407.1,857.7 1402.5,862.0 1397.8,866.3 1393.2,870.6 1388.5,874.9 1383.9,879.2 1379.2,883.5 1374.6,887.8 1370.0,892.1 1365.3,896.4 1360.7,900.7 1356.0,905.0 1353.5,907.4 1350.6,909.2 1347.2,910.5 1343.6,911.2 1339.5,911.4 1335.0,911.0 1329.1,910.1 1323.3,909.1 1317.6,907.9 1312.1,906.6 1306.8,905.2 1301.6,903.6 1296.5,901.9 1291.6,900.0 1286.9,898.0 1282.3,896.0 1277.8,893.8 1273.5,891.4 1269.4,889.0 1265.4,886.5 1261.6,883.9 1258.0,881.2 1254.5,878.3 1251.1,875.4 1248.0,872.4 1245.0,869.4 1242.2,866.2 1239.6,863.0 1237.1,859.7 1234.8,856.3 1232.7,852.9 1230.7,849.4 1229.0,845.9 1227.4,842.3 1226.0,838.7 1224.8,835.0" fill="#8c0a14" stroke="none" stroke-width="0.8" /><polygon points="1247.7,838.7 1249.3,840.5 1250.9,842.3 1252.6,844.1 1254.3,846.0 1256.1,848.0 1257.9,850.0 1259.8,852.0 1261.7,854.0 1263.7,856.0 1265.7,858.1 1267.7,860.2 1269.8,862.2 1271.9,864.3 1274.0,866.4 1276.1,868.5 1278.2,870.5 1280.4,872.5 1282.5,874.5 1284.7,876.5 1286.9,878.5 1289.0,880.4 1291.2,882.2 1293.4,884.1 1295.5,885.8 1297.7,887.5 1306.8,905.2 1301.6,903.6 1296.5,901.9 1291.6,900.0 1286.9,898.0 1282.3,896.0 1277.8,893.8 1273.5,891.4 1269.4,889.0 1265.4,886.5 1261.6,883.9 1258.0,881.2 1254.5,878.3 1251.1,875.4 1248.0,872.4 1245.0,869.4 1242.2,866.2 1239.6,863.0 1237.1,859.7 1234.8,856.3 1232.7,852.9 1230.7,849.4 1229.0,845.9 1227.4,842.3 1226.0,838.7 1224.8,835.0" fill="#20102a" stroke="none" stroke-width="0.8" opacity="0.22"/><line x1="1256" y1="887" x2="1232" y2="940" stroke="#4f4026" stroke-width="7.5" stroke-linecap="butt"/><line x1="1257.5" y1="888" x2="1233.5" y2="941" stroke="#463822" stroke-width="3" stroke-linecap="butt"/><line x1="1366.9" y1="847.5" x2="1302.5" y2="897.5" stroke="#5a4a2c" stroke-width="4.5" stroke-linecap="butt"/><line x1="1410.5" y1="855.5" x2="1308" y2="945.5" stroke="#3f321c" stroke-width="7.5" stroke-linecap="butt"/><line x1="1412" y1="857.5" x2="1309.5" y2="947.5" stroke="#3a2d18" stroke-width="3" stroke-linecap="butt"/><line x1="1310.5" y1="873" x2="1254" y2="953" stroke="#3a2d1a" stroke-width="9" stroke-linecap="butt"/><line x1="1302" y1="882" x2="1362" y2="927" stroke="#43351d" stroke-width="6.5" stroke-linecap="butt"/><line x1="1241" y1="839.5" x2="1384" y2="921.5" stroke="#2e2416" stroke-width="8.5" stroke-linecap="butt"/><line x1="1242" y1="837.3" x2="1385" y2="919.3" stroke="#5e4c2e" stroke-width="2" stroke-linecap="butt"/><line x1="1313" y1="876" x2="1292" y2="906" stroke="#5e4c2e" stroke-width="5.5" stroke-linecap="butt"/></g>
<g clip-path="url(#crg)"><ellipse cx="1233.2" cy="957.5" rx="5.6" ry="3.1" transform="rotate(16 1233.2 957.5)" fill="#5f8558" opacity="0.92"/><ellipse cx="1243.3" cy="951.5" rx="8.9" ry="4.9" transform="rotate(44 1243.3 951.5)" fill="#4f7550" opacity="0.92"/><ellipse cx="1240.8" cy="946.2" rx="6.1" ry="3.3" transform="rotate(81 1240.8 946.2)" fill="#7a9a72" opacity="0.92"/><ellipse cx="1244.5" cy="955.1" rx="9.3" ry="5.1" transform="rotate(19 1244.5 955.1)" fill="#466a48" opacity="0.92"/><ellipse cx="1252.1" cy="948.4" rx="9.9" ry="5.4" transform="rotate(94 1252.1 948.4)" fill="#5f8558" opacity="0.92"/><ellipse cx="1240.6" cy="958.5" rx="9.3" ry="5.1" transform="rotate(173 1240.6 958.5)" fill="#4f7550" opacity="0.92"/><ellipse cx="1240.7" cy="945.2" rx="5.8" ry="3.2" transform="rotate(147 1240.7 945.2)" fill="#7a9a72" opacity="0.92"/><ellipse cx="1249.1" cy="960.7" rx="5.8" ry="3.2" transform="rotate(96 1249.1 960.7)" fill="#466a48" opacity="0.92"/><ellipse cx="1230.7" cy="947.4" rx="6.5" ry="3.6" transform="rotate(174 1230.7 947.4)" fill="#5f8558" opacity="0.92"/><ellipse cx="1246.7" cy="963.6" rx="5.2" ry="2.9" transform="rotate(75 1246.7 963.6)" fill="#4f7550" opacity="0.92"/><ellipse cx="1232.0" cy="950.7" rx="5.6" ry="3.1" transform="rotate(165 1232.0 950.7)" fill="#7a9a72" opacity="0.92"/><ellipse cx="1238.5" cy="955.8" rx="8.3" ry="4.5" transform="rotate(160 1238.5 955.8)" fill="#466a48" opacity="0.92"/><ellipse cx="1254.6" cy="957.5" rx="7.5" ry="4.1" transform="rotate(163 1254.6 957.5)" fill="#5f8558" opacity="0.92"/><ellipse cx="1240.3" cy="951.6" rx="8.7" ry="4.8" transform="rotate(46 1240.3 951.6)" fill="#4f7550" opacity="0.92"/><ellipse cx="1285.8" cy="938.7" rx="7.4" ry="4.1" transform="rotate(65 1285.8 938.7)" fill="#5f8558" opacity="0.9"/><ellipse cx="1287.8" cy="939.1" rx="5.2" ry="2.9" transform="rotate(150 1287.8 939.1)" fill="#4f7550" opacity="0.9"/><ellipse cx="1276.0" cy="940.5" rx="7.7" ry="4.3" transform="rotate(72 1276.0 940.5)" fill="#7a9a72" opacity="0.9"/><ellipse cx="1281.1" cy="932.8" rx="6.9" ry="3.8" transform="rotate(57 1281.1 932.8)" fill="#5f8558" opacity="0.9"/><ellipse cx="1289.5" cy="935.1" rx="8.7" ry="4.8" transform="rotate(88 1289.5 935.1)" fill="#4f7550" opacity="0.9"/><ellipse cx="1274.3" cy="938.3" rx="9.8" ry="5.4" transform="rotate(1 1274.3 938.3)" fill="#7a9a72" opacity="0.9"/><ellipse cx="1293.0" cy="948.3" rx="6.8" ry="3.8" transform="rotate(108 1293.0 948.3)" fill="#5f8558" opacity="0.9"/><ellipse cx="1285.8" cy="936.4" rx="8.0" ry="4.4" transform="rotate(106 1285.8 936.4)" fill="#4f7550" opacity="0.9"/><ellipse cx="1284.1" cy="940.0" rx="7.6" ry="4.2" transform="rotate(136 1284.1 940.0)" fill="#7a9a72" opacity="0.9"/><ellipse cx="1275.7" cy="932.7" rx="6.3" ry="3.4" transform="rotate(49 1275.7 932.7)" fill="#5f8558" opacity="0.9"/><ellipse cx="1299.5" cy="938.7" rx="9.3" ry="5.1" transform="rotate(72 1299.5 938.7)" fill="#4f7550" opacity="0.9"/><ellipse cx="1283.1" cy="943.2" rx="5.4" ry="3.0" transform="rotate(177 1283.1 943.2)" fill="#7a9a72" opacity="0.9"/><ellipse cx="1267.3" cy="937.3" rx="5.3" ry="2.9" transform="rotate(147 1267.3 937.3)" fill="#6a8a66" opacity="0.8"/><ellipse cx="1266.6" cy="942.3" rx="4.2" ry="2.3" transform="rotate(137 1266.6 942.3)" fill="#587a55" opacity="0.8"/><ellipse cx="1254.8" cy="942.0" rx="6.2" ry="3.4" transform="rotate(167 1254.8 942.0)" fill="#6a8a66" opacity="0.8"/><ellipse cx="1264.2" cy="932.4" rx="7.7" ry="4.3" transform="rotate(135 1264.2 932.4)" fill="#587a55" opacity="0.8"/><ellipse cx="1263.3" cy="932.1" rx="6.9" ry="3.8" transform="rotate(75 1263.3 932.1)" fill="#6a8a66" opacity="0.8"/></g>
<polyline points="1227.8,935.0 1228.0,969.0" fill="none" stroke="#6fbf5a" stroke-width="1.6" opacity="0.8"/>
<path d="M1220.5 577 L1247.5 571 L1247.5 569 L1302 556.5 L1302.5 555 L1415.5 529 L1415.5 527 L1467 516 L1467 515 L1493 512.5 L1493.5 537 L1496 537 L1496 585 L1494 585 L1494.5 689 L1497 689 L1497.5 745 L1495.5 745 L1495.5 840 L1497.5 840 L1498 887 L1420 911 L1420 912.5 L1416 913.5 L1416 912 L1227.5 969 Z" fill="none" stroke="#101010" stroke-width="1.4"/>
<polyline points="1223.5,578.0 1230.0,967.0" fill="none" stroke="#222" stroke-width="0.9" />
<polyline points="1490.5,514.0 1493.0,888.0" fill="none" stroke="#333" stroke-width="0.9" />
<g><circle cx="964" cy="144" r="5.6" fill="#eef4fa" stroke="#777" stroke-width="1.3"/><path d="M959.5 148.5L953.5 154.5" stroke="#4a90c8" stroke-width="3" stroke-linecap="round"/><path d="M964 140.5v7M960.5 144h7" stroke="#888" stroke-width="0.9"/></g><g><rect x="984" y="138" width="11" height="10" fill="none" stroke="#666" stroke-width="0.8" stroke-dasharray="1.5 1.2"/><circle cx="988" cy="145" r="5.6" fill="#eef4fa" stroke="#777" stroke-width="1.3"/><path d="M983.5 149.5L978 155" stroke="#4a90c8" stroke-width="3" stroke-linecap="round"/></g><g opacity="0.45"><path d="M1003 150 L1016 140 L1020 143 L1008 154Z" fill="#d8d8d8" stroke="#bbb" stroke-width="0.8"/><path d="M1012 148h7m-7 0l3-3m-3 3l3 3" stroke="#bbb" stroke-width="1.5" fill="none"/></g><g opacity="0.5"><path d="M1027 142 Q1033 137 1038 141 Q1042 137 1046 140 V152 Q1042 149 1038 153 Q1033 149 1027 154Z" fill="#d4d4d4" stroke="#c0c0c0" stroke-width="0.8"/></g><g><path d="M1052 150 L1064 140 L1069 144 L1058 155Z" fill="#e8e8e8" stroke="#888" stroke-width="0.9"/><circle cx="1056" cy="152" r="3.5" fill="#ccc" stroke="#888" stroke-width="0.8"/><path d="M1054 138 L1059 137 L1056 141 L1060 141 L1053 147 L1055 142 L1051 142Z" fill="#f0a020"/><path d="M1060 156 L1064 146 L1068 156 M1061.5 153h5" stroke="#2a6fb0" stroke-width="1.6" fill="none"/></g><g><path d="M1076 143 L1081 138 L1093 138 L1093 151 L1088 156 L1076 156Z" fill="#fff" stroke="#555" stroke-width="0.9"/><rect x="1076" y="143" width="12" height="13" fill="#6aaedc" stroke="#2a6090" stroke-width="0.9"/><path d="M1088 143L1093 138" stroke="#555" stroke-width="0.9"/><path d="M1085 138v5m-1.5-2l1.5 2l1.5-2M1093 147h-4m2-1.5l-2 1.5l2 1.5" stroke="#333" stroke-width="0.8" fill="none"/></g><path d="M1098.5 144.5h6l-3 3.5z" fill="#777"/><g><path d="M1112 141 L1119 138 L1126 140 L1126 151 L1119 155 L1112 152Z" fill="#f4f4f4" stroke="#557" stroke-width="0.8"/><path d="M1112 141 L1119 143.5 L1119 155 L1112 152Z" fill="#5fa5d8"/><path d="M1112 141 L1119 138 L1126 140 L1119 143.5Z" fill="#cfe6f6"/></g><path d="M1132.7 144.5h6l-3 3.5z" fill="#777"/><g><path d="M1144 146.5 Q1153 137 1162 146.5 Q1153 156 1144 146.5Z" fill="#f4f4f4" stroke="#555" stroke-width="1"/><circle cx="1153" cy="146.5" r="4" fill="#333"/><path d="M1153 138.5v17" stroke="#555" stroke-width="0.8"/><path d="M1153 142.5 A4 4 0 0 1 1153 150.5Z" fill="#999"/></g><path d="M1167 144.5h6l-3 3.5z" fill="#777"/><g><circle cx="1186" cy="145.5" r="8.5" fill="#3a6fd8"/><path d="M1186 145.5 L1186 137 A8.5 8.5 0 0 1 1194 142.5Z" fill="#e04a3a"/><path d="M1186 145.5 L1180 151.5 A8.5 8.5 0 0 0 1192 151.5Z" fill="#3aa83a"/><path d="M1186 145.5 L1194 142.5 A8.5 8.5 0 0 1 1192 151.5Z" fill="#e8e8e8"/><path d="M1189 154 L1196 146 L1198.5 148 L1191.5 156 L1188 157Z" fill="#f0b020" stroke="#7a5a10" stroke-width="0.6"/></g><g opacity="0.5"><rect x="1204" y="148" width="17" height="8" fill="#d8d8d8"/><path d="M1204 148h17M1204 152h17M1208 148v8M1213 148v8M1217 148v8" stroke="#bbb" stroke-width="0.7"/><circle cx="1212.5" cy="145" r="7" fill="#dcdcdc" stroke="#c8c8c8" stroke-width="0.6"/></g><path d="M1226 144.5h6l-3 3.5z" fill="#999"/><g><rect x="1239.5" y="140" width="16" height="10.5" fill="#999" stroke="#444" stroke-width="1.2"/><rect x="1245" y="151" width="5" height="2.2" fill="#444"/><rect x="1242.5" y="153" width="10" height="1.4" fill="#444"/></g><path d="M1260.6 144.5h6l-3 3.5z" fill="#777"/>
<g stroke="#9a9a9a" fill="none" stroke-width="1"><path d="M1747 119.5h10.5v12.5h-10.5" opacity="0.8"/><path d="M1747.5 119.5v12.5" stroke="#c0c0c0"/><path d="M1750.5 123.5l-2.5 2l2.5 2z" fill="#9a9a9a" stroke="none"/><path d="M1771.5 119.5h10.5v12.5h-10.5z"/><path d="M1782.5 125.5l-2.5 -2v4z" fill="#9a9a9a" stroke="none"/><path d="M1797 131h9.5" stroke-width="2"/><path d="M1823 120.5h9.5v7"/><rect x="1819.500" y="124.500" width="9.500" height="7" fill="#eef0f5"/><path d="M1846.500 120.500l9.500 10.500m0 -10.500l-9.500 10.500" stroke="#888" stroke-width="1.2"/></g>
<rect x="1842" y="160.500" width="26" height="117.500" fill="#333" stroke="#5a5a5a" stroke-width="1"/><rect x="1843" y="161" width="25" height="22.500" fill="#a9a9a9"/><path d="M1843 184h25" stroke="#5c5c5c" stroke-width="1"/><path d="M1843 207.5h25" stroke="#5c5c5c" stroke-width="1"/><path d="M1843 231h25" stroke="#5c5c5c" stroke-width="1"/><path d="M1843 254.5h25" stroke="#5c5c5c" stroke-width="1"/><g stroke="#555" stroke-width="0.8" fill="#f4f4f4"><path d="M1848 166 L1853 164 L1853 180 L1848 178Z"/><path d="M1853 164 L1858 163.500 L1858 181 L1853 180Z"/><path d="M1858 163.500 L1862 165 L1862 179 L1858 181Z"/></g><path d="M1846 190 h7 l2 2.500 h8 v2 h-17z" fill="#d8d8d8"/><path d="M1849 194.500 h17 l-4 9 h-17z" fill="#f8f8f8"/><rect x="1846.500" y="212" width="18" height="16" fill="#eee" stroke="#999" stroke-width="0.8"/><rect x="1848.500" y="214" width="7" height="4" fill="#f2c417"/><rect x="1857.500" y="214" width="5" height="4" fill="#f2c417"/><path d="M1848.500 225.500h7v-3h-2v-2.500h-3v2.500h-2z" fill="#f2c417"/><rect x="1857.500" y="220" width="5" height="6" fill="#bbb"/><circle cx="1855" cy="242.500" r="8" fill="#2a5fd0"/><path d="M1855 242.500 L1855 234.500 A8 8 0 0 1 1863 242Z" fill="#e03030"/><path d="M1855 242.500 L1863 242 A8 8 0 0 1 1857 250.500Z" fill="#f0c020"/><path d="M1855 242.500 L1857 250.500 A8 8 0 0 1 1847.500 245.500Z" fill="#30a030"/><circle cx="1852.500" cy="239.500" r="3" fill="#fff" opacity="0.45"/><rect x="1846.500" y="258.500" width="17" height="15.500" fill="#f2f2f2" stroke="#999" stroke-width="0.6"/><rect x="1846.500" y="258.500" width="17" height="2" fill="#3a8fc8"/><path d="M1848.500 263.500h3.500M1848.500 267h3.500M1848.500 270.500h3.500" stroke="#2f7fc0" stroke-width="1.8"/><path d="M1853.500 263.500h8M1853.500 267h8M1853.500 270.500h8" stroke="#777" stroke-width="0.9"/>
<g><path d="M391.500 1114 V1090" stroke="#1d8a2a" stroke-width="2.2"/><path d="M388 1092 L391.500 1083 L395 1092Z" fill="#1d8a2a"/><path d="M391.500 1114 L376 1119" stroke="#1a1ae0" stroke-width="2.4"/><path d="M379 1115 L369.500 1120.500 L380 1122.500Z" fill="#1a1ae0"/><path d="M391.500 1114 L404 1118" stroke="#d02020" stroke-width="2.4"/><path d="M402 1114.500 L411 1119.500 L401.500 1122Z" fill="#d02020"/><text x="388" y="1082" font-family="Liberation Serif, serif" font-size="9" fill="#1d8a2a">Y</text><text x="363" y="1124" font-family="Liberation Serif, serif" font-size="9" fill="#1a1ae0">Z</text><text x="410" y="1124" font-family="Liberation Serif, serif" font-size="9" fill="#d02020">X</text></g></svg></div>
<div id="title"></div>
<svg class="abs" style="left:4px;top:4px" width="110" height="26" viewBox="0 0 110 26">
<g fill="none" stroke="#fff" stroke-linecap="round" stroke-linejoin="round">
<path d="M8.5 4 Q12 1.8 14.500 3.2 Q16.500 5 13 8 Q17 8.500 15.500 12.500 Q14 15 10 14.500" stroke-width="1.7"/>
<path d="M19.500 9.500 Q16 9 15.800 11.500 Q16 13 18 13.500 Q20.500 14.500 19.500 16.500 Q18 18 14.500 17" stroke-width="1.6"/>
<path d="M12.500 6.500 L2 21 Q8 19 10.500 12.500 Z" stroke-width="1.1" fill="#fff" fill-opacity="0.15"/>
</g>
<text x="25.5" y="18.5" font-family="Liberation Sans, sans-serif" font-size="13.5" font-weight="bold" font-style="italic" fill="#fff" textLength="39.5" lengthAdjust="spacingAndGlyphs">SOLID</text>
<text x="65.5" y="18.5" font-family="Liberation Sans, sans-serif" font-size="13.5" font-style="italic" fill="#fff" textLength="40" lengthAdjust="spacingAndGlyphs">WORKS</text>
</svg>
<span class="tx" style="left:141.0px;top:11.4px;font-size:11px;font-weight:normal;color:#f2f2f2">文件(F)</span>
<span class="tx" style="left:184.0px;top:11.4px;font-size:11px;font-weight:normal;color:#f2f2f2">编辑(E)</span>
<span class="tx" style="left:229.0px;top:11.4px;font-size:11px;font-weight:normal;color:#f2f2f2">视图(V)</span>
<span class="tx" style="left:275.0px;top:11.4px;font-size:11px;font-weight:normal;color:#f2f2f2">插入(I)</span>
<span class="tx" style="left:318.0px;top:11.4px;font-size:11px;font-weight:normal;color:#f2f2f2">工具(T)</span>
<div class="t menu" style="left:362px;top:11px;">PhotoView 360</div>
<span class="tx" style="left:446.0px;top:11.4px;font-size:11px;font-weight:normal;color:#f2f2f2">窗口(W)</span>
<svg class="abs" style="left:497px;top:10px" width="15" height="15" viewBox="0 0 15 15"><path d="M8 1 L14 7 L12 8 L10 7 L8 9 L8 12 L6.5 12.5 L5 10 L1 14 L0.8 13.5 L4.5 9.5 L2 8 L3 6.5 L6 6.5 L8 4.5 L7 3 Z" fill="#f0f0f0"/></svg>
<div class="abs" style="left:517px;top:2px;width:1px;height:31px;background:#3c3c3c"></div>
<svg class="abs" style="left:544px;top:9px" width="17" height="18" viewBox="0 0 17 18"><path d="M8.5 1 L16 8 V17 H1 V8Z" fill="#6a6a6a"/><rect x="7" y="10" width="4" height="7" fill="#4f4f4f"/></svg>
<svg class="abs" style="left:574px;top:8px" width="15" height="19" viewBox="0 0 15 19"><path d="M1 1 H9 L14 6 V18 H1Z" fill="#f4f4f4"/><path d="M9 1 V6 H14Z" fill="#c9c9c9"/></svg>
<svg class="abs" style="left:598px;top:16.5px" width="6" height="4" viewBox="0 0 6 4"><path d="M0 0H6L3 3.5Z" fill="#e0e0e0"/></svg>
<svg class="abs" style="left:611px;top:7px" width="22" height="20" viewBox="0 0 22 20"><path d="M2 6 H8 L10 8 H17 V18 H2Z" fill="#d8d8d8"/><path d="M5 10 H21 L17 18 H1Z" fill="#f6f6f6"/><path d="M8 1 C13 1 15 4 15 8 L18 8 L13.5 13 L9 8 L12 8 C12 5 11 3.5 8 3Z" fill="#2fa83a"/></svg>
<svg class="abs" style="left:639px;top:16.5px" width="6" height="4" viewBox="0 0 6 4"><path d="M0 0H6L3 3.5Z" fill="#e0e0e0"/></svg>
<svg class="abs" style="left:653px;top:8px" width="19" height="19" viewBox="0 0 19 19"><path d="M1 1 H16 L18 3 V18 H1Z" fill="#3a8fc8" stroke="#1f5f8f" stroke-width="1"/><rect x="4" y="1.5" width="11" height="8" fill="#f4f4f4"/><path d="M5 3.5H14M5 5.5H14M5 7.5H14" stroke="#9ab" stroke-width="0.8"/><rect x="5" y="12" width="9" height="6" fill="#1f5f8f"/><rect x="7" y="13" width="3" height="4" fill="#cfe3f2"/></svg>
<svg class="abs" style="left:679px;top:16.5px" width="6" height="4" viewBox="0 0 6 4"><path d="M0 0H6L3 3.5Z" fill="#e0e0e0"/></svg>
<svg class="abs" style="left:693px;top:9px" width="19" height="18" viewBox="0 0 19 18"><rect x="4" y="1" width="11" height="7" fill="#f6f6f6"/><rect x="1" y="7" width="17" height="7" rx="1" fill="#3a8fc8"/><rect x="4" y="11" width="11" height="5" fill="#eaf3fa" stroke="#1f5f8f" stroke-width="0.8"/></svg>
<svg class="abs" style="left:719px;top:16.5px" width="6" height="4" viewBox="0 0 6 4"><path d="M0 0H6L3 3.5Z" fill="#e0e0e0"/></svg>
<svg class="abs" style="left:733px;top:9px" width="19" height="17" viewBox="0 0 19 17"><path d="M1 6 L7 1 V4 C14 3 18 8 15 15 L11 16 C14 11 12 8 7 8.5 V11Z" fill="#3d8ecb" stroke="#23618f" stroke-width="0.8"/></svg>
<svg class="abs" style="left:760px;top:16.5px" width="6" height="4" viewBox="0 0 6 4"><path d="M0 0H6L3 3.5Z" fill="#e0e0e0"/></svg>
<svg class="abs" style="left:775px;top:9px" width="19" height="17" viewBox="0 0 19 17"><path d="M18 6 L12 1 V4 C5 3 1 8 4 15 L8 16 C5 11 7 8 12 8.5 V11Z" fill="#666"/></svg>
<svg class="abs" style="left:799px;top:16.5px" width="6" height="4" viewBox="0 0 6 4"><path d="M0 0H6L3 3.5Z" fill="#777"/></svg>
<div class="abs" style="left:809px;top:3px;width:40px;height:29px;background:#333;border:1px solid #555;box-sizing:border-box"></div><div class="abs" style="left:809px;top:3px;width:27px;height:29px;background:#2a2a2a"></div>
<svg class="abs" style="left:816px;top:8px" width="14" height="20" viewBox="0 0 14 20"><path d="M1 1 L1 15 L4.5 12 L7.5 18.5 L10 17.5 L7 11 L12 11Z" fill="#fff"/></svg>
<svg class="abs" style="left:840px;top:16.5px" width="6" height="4" viewBox="0 0 6 4"><path d="M0 0H6L3 3.5Z" fill="#e0e0e0"/></svg>
<svg class="abs" style="left:858px;top:7px" width="13" height="21" viewBox="0 0 13 21"><rect x="1" y="1" width="11" height="19" rx="5" fill="#333" stroke="#bbb" stroke-width="1"/><circle cx="6.5" cy="6.5" r="3" fill="#e02020"/><circle cx="6.5" cy="14.5" r="3" fill="#2a9a2a"/></svg>
<svg class="abs" style="left:887px;top:8px" width="16" height="19" viewBox="0 0 16 19"><rect x="0.5" y="0.5" width="15" height="18" fill="#f4f4f4" stroke="#999"/><rect x="2" y="3" width="4" height="3" fill="#2f7fc0"/><rect x="2" y="8" width="4" height="3" fill="#2f7fc0"/><rect x="2" y="13" width="4" height="3" fill="#2f7fc0"/><path d="M7.5 4.5H14M7.5 9.5H14M7.5 14.5H14" stroke="#555" stroke-width="1"/></svg>
<svg class="abs" style="left:915px;top:9px" width="18" height="18" viewBox="-9 -9 18 18"><g fill="#f4f4f4"><rect x="-1.8" y="-9" width="3.6" height="5" transform="rotate(0)"/><rect x="-1.8" y="-9" width="3.6" height="5" transform="rotate(45)"/><rect x="-1.8" y="-9" width="3.6" height="5" transform="rotate(90)"/><rect x="-1.8" y="-9" width="3.6" height="5" transform="rotate(135)"/><rect x="-1.8" y="-9" width="3.6" height="5" transform="rotate(180)"/><rect x="-1.8" y="-9" width="3.6" height="5" transform="rotate(225)"/><rect x="-1.8" y="-9" width="3.6" height="5" transform="rotate(270)"/><rect x="-1.8" y="-9" width="3.6" height="5" transform="rotate(315)"/></g><circle r="6" fill="#f4f4f4"/><circle r="2.6" fill="#4a4a4a"/></svg>
<svg class="abs" style="left:941px;top:16.5px" width="6" height="4" viewBox="0 0 6 4"><path d="M0 0H6L3 3.5Z" fill="#e0e0e0"/></svg>
<span class="tx" style="left:1049.0px;top:11.4px;font-size:11px;font-weight:normal;color:#cfcfcf">展示盒_凹槽底座_单人_顶背双灯_外开门版_2.4mm四壁_001.SLDPRT *</span>
<div class="abs" style="left:1484px;top:7px;width:196px;height:21px;background:#fff;border:1px solid #9a9a9a;box-sizing:border-box"></div>
<div class="abs" style="left:1489px;top:11px;width:13px;height:13px;background:#222"></div><svg class="abs" style="left:1489px;top:11px" width="13" height="13" viewBox="0 0 13 13"><path d="M3 3.5L6 6.5L3 9.5" stroke="#fff" fill="none" stroke-width="1.3"/><path d="M6.5 10H10.5" stroke="#fff" stroke-width="1.2"/></svg>
<span class="tx" style="left:1508.0px;top:10.3px;font-size:12px;font-weight:normal;color:#8a8a8a">爆炸</span>
<svg class="abs" style="left:1649px;top:10px" width="16" height="16" viewBox="0 0 16 16"><circle cx="6.5" cy="6.5" r="4.5" fill="none" stroke="#777" stroke-width="1.2"/><path d="M10 10L14.5 14.5" stroke="#777" stroke-width="1.5"/></svg>
<svg class="abs" style="left:1671px;top:16.5px" width="6" height="4" viewBox="0 0 6 4"><path d="M0 0H6L3 3.5Z" fill="#666"/></svg>
<svg class="abs" style="left:1692px;top:9px" width="18" height="18" viewBox="0 0 18 18"><circle cx="9" cy="9" r="7.5" fill="none" stroke="#f0f0f0" stroke-width="1.3"/><circle cx="9" cy="7" r="2.6" fill="none" stroke="#f0f0f0" stroke-width="1.2"/><path d="M4 14 C5 10.5 13 10.5 14 14" fill="none" stroke="#f0f0f0" stroke-width="1.2"/></svg>
<svg class="abs" style="left:1729px;top:9px" width="18" height="18" viewBox="0 0 18 18"><circle cx="9" cy="9" r="7.5" fill="none" stroke="#f0f0f0" stroke-width="1.3"/><path d="M6.5 7 C6.5 3.8 11.5 3.8 11.5 7 C11.5 9 9 9 9 11" fill="none" stroke="#f0f0f0" stroke-width="1.4"/><circle cx="9" cy="13.3" r="0.9" fill="#f0f0f0"/></svg>
<div class="abs" style="left:1769px;top:22px;width:10px;height:2px;background:#f0f0f0"></div>
<svg class="abs" style="left:1801px;top:10px" width="17" height="15" viewBox="0 0 17 15"><rect x="4.5" y="0.8" width="11" height="8" fill="none" stroke="#f0f0f0" stroke-width="1.3"/><rect x="1" y="5" width="11" height="8.5" fill="#4a4a4a" stroke="#f0f0f0" stroke-width="1.3"/></svg>
<svg class="abs" style="left:1840px;top:12px" width="12" height="12" viewBox="0 0 12 12"><path d="M1 1L11 11M11 1L1 11" stroke="#f0f0f0" stroke-width="1.5"/></svg>
<div class="sep" style="left:174px"></div>
<div class="sep" style="left:348px"></div>
<div class="sep" style="left:518px"></div>
<div class="sep" style="left:576px"></div>
<svg class="abs" style="left:9.0px;top:37.0px" width="22.0" height="22.0" viewBox="-10 -10 20 20"><path d="M-2 -7 L5 -8 L7 -6 L7 5 L0 7 L-2 5Z" fill="#646464"/><path d="M-2 -7 L0 -5 L0 7 L-2 5Z" fill="#3e3e3e"/><path d="M-8 -2 L-1 -3 L1 -1 L1 6 L-6 8 L-8 6Z" fill="#757575"/><path d="M-8 -2 L-6 0 L1 -1 M-6 0 V8" stroke="#3e3e3e" stroke-width="0.8" fill="none"/></svg>
<span class="tx" style="left:9.0px;top:60.4px;font-size:11px;font-weight:normal;color:#7c7c7c">拉伸</span>
<span class="tx" style="left:7.5px;top:75.4px;font-size:11px;font-weight:normal;color:#7c7c7c">凸台/</span>
<span class="tx" style="left:9.0px;top:90.4px;font-size:11px;font-weight:normal;color:#7c7c7c">基体</span>
<svg class="abs" style="left:42.0px;top:37.0px" width="22.0" height="22.0" viewBox="-10 -10 20 20"><path d="M-3 -7 A7.500 7.500 0 1 1 -6 5 L-2.500 2 A3 3 0 1 0 -1 -3.500Z" fill="#646464"/><path d="M-6 5 L-2.500 2 L-2.500 4.500 L-5 7.500Z" fill="#3e3e3e"/><path d="M-3 -7 L-1 -3.500 L-3 -2.500 L-5 -5.500Z" fill="#757575"/></svg>
<span class="tx" style="left:42.0px;top:60.4px;font-size:11px;font-weight:normal;color:#7c7c7c">旋转</span>
<span class="tx" style="left:40.5px;top:75.4px;font-size:11px;font-weight:normal;color:#7c7c7c">凸台/</span>
<span class="tx" style="left:42.0px;top:90.4px;font-size:11px;font-weight:normal;color:#7c7c7c">基体</span>
<svg class="abs" style="left:71.5px;top:38.5px" width="19.0" height="19.0" viewBox="-10 -10 20 20"><path d="M-7 5 C-2 6 -3 -5 3 -6" stroke="#646464" stroke-width="4.500" fill="none" stroke-linecap="round"/><circle cx="4.500" cy="-5.500" r="2.600" fill="#757575"/><path d="M-7 7 C0 8 -1 -3 4 -3.500" stroke="#3e3e3e" stroke-width="1" fill="none"/></svg>
<span class="tx" style="left:96.0px;top:41.4px;font-size:11px;font-weight:normal;color:#7c7c7c">扫描</span>
<svg class="abs" style="left:71.5px;top:63.0px" width="19.0" height="19.0" viewBox="-10 -10 20 20"><path d="M-2.500 -6 H2.500 L6 6 Q0 9 -6 6Z" fill="#646464"/><ellipse cx="0" cy="-6" rx="2.500" ry="1.200" fill="#757575"/><path d="M2.500 -6 L6 6 Q3 7.500 1 7.600 L0.500 -5Z" fill="#3e3e3e" opacity="0.7"/></svg>
<span class="tx" style="left:96.0px;top:65.9px;font-size:11px;font-weight:normal;color:#7c7c7c">放样凸台/基体</span>
<svg class="abs" style="left:71.5px;top:87.5px" width="19.0" height="19.0" viewBox="-10 -10 20 20"><path d="M-8 0 C-5 -5 -2 1 1 -3 C3 -6 6 -5 8 -3 L8 4 L-1 8 L-8 5Z" fill="#646464"/><path d="M-8 0 C-5 -5 -2 1 1 -3 C3 -6 6 -5 8 -3 L0 1 C-2 3 -5 0 -8 0Z" fill="#757575"/><path d="M-1 8 L-1 2 L8 -3 L8 4Z" fill="#3e3e3e" opacity="0.6"/></svg>
<span class="tx" style="left:96.0px;top:90.4px;font-size:11px;font-weight:normal;color:#7c7c7c">边界凸台/基体</span>
<svg class="abs" style="left:178.5px;top:37.5px" width="21.0" height="21.0" viewBox="-10 -10 20 20"><path d="M-6 -6 L5 -7 L7 -5 L7 6 L-4 7 L-6 5Z" fill="#646464"/><path d="M-6 -6 L-4 -4 L-4 7 L-6 5Z" fill="#3e3e3e"/><rect x="-1.500" y="-2" width="5.500" height="5.500" fill="#3e3e3e"/><path d="M-1.500 3.500 H4 V-2" stroke="#757575" stroke-width="0.900" fill="none"/></svg>
<span class="tx" style="left:178.0px;top:60.4px;font-size:11px;font-weight:normal;color:#7c7c7c">拉伸</span>
<span class="tx" style="left:178.0px;top:75.4px;font-size:11px;font-weight:normal;color:#7c7c7c">切除</span>
<svg class="abs" style="left:212.5px;top:37.5px" width="21.0" height="21.0" viewBox="-10 -10 20 20"><path d="M-6 -3 L-2 -7 L7 -3 L7 5 L1 8 L-6 5Z" fill="#646464"/><path d="M-6 -3 L1 0 L1 8 L-6 5Z" fill="#757575"/><ellipse cx="-2.500" cy="2" rx="2.500" ry="3" fill="#3e3e3e"/><path d="M-1 -8 L7 0 L8 -2 L1 -9Z" fill="#3e3e3e"/></svg>
<span class="tx" style="left:206.5px;top:60.4px;font-size:11px;font-weight:normal;color:#7c7c7c">异型孔</span>
<span class="tx" style="left:212.0px;top:75.4px;font-size:11px;font-weight:normal;color:#7c7c7c">向导</span>
<svg class="abs" style="left:220px;top:100.5px" width="6" height="4" viewBox="0 0 6 4"><path d="M0 0H6L3 3.5Z" fill="#808080"/></svg>
<svg class="abs" style="left:246.5px;top:37.5px" width="21.0" height="21.0" viewBox="-10 -10 20 20"><path d="M-6 -4 L-3 -6 L0 -3 L3 -6 L6 -4 L6 6 L2 8 L0 5 L-2 8 L-6 6Z" fill="#646464"/><path d="M0 -3 L0 5 L-2 8 L-2 -1Z" fill="#3e3e3e"/><path d="M-6 -4 L-3 -6 L0 -3 L-2 -1Z" fill="#757575"/></svg>
<span class="tx" style="left:246.0px;top:60.4px;font-size:11px;font-weight:normal;color:#7c7c7c">旋转</span>
<span class="tx" style="left:246.0px;top:75.4px;font-size:11px;font-weight:normal;color:#7c7c7c">切除</span>
<svg class="abs" style="left:273.5px;top:38.5px" width="19.0" height="19.0" viewBox="-10 -10 20 20"><path d="M-7 5 C-2 6 -3 -5 3 -6" stroke="#646464" stroke-width="4.500" fill="none" stroke-linecap="round"/><circle cx="4.500" cy="-5.500" r="2.600" fill="#757575"/><path d="M-7 7 C0 8 -1 -3 4 -3.500" stroke="#3e3e3e" stroke-width="1" fill="none"/></svg>
<span class="tx" style="left:298.0px;top:41.4px;font-size:11px;font-weight:normal;color:#7c7c7c">扫描切除</span>
<svg class="abs" style="left:273.5px;top:63.0px" width="19.0" height="19.0" viewBox="-10 -10 20 20"><path d="M-2.500 -6 H2.500 L6 6 Q0 9 -6 6Z" fill="#646464"/><ellipse cx="0" cy="-6" rx="2.500" ry="1.200" fill="#757575"/><path d="M2.500 -6 L6 6 Q3 7.500 1 7.600 L0.500 -5Z" fill="#3e3e3e" opacity="0.7"/></svg>
<span class="tx" style="left:298.0px;top:65.9px;font-size:11px;font-weight:normal;color:#7c7c7c">放样切除</span>
<svg class="abs" style="left:273.5px;top:87.5px" width="19.0" height="19.0" viewBox="-10 -10 20 20"><path d="M-8 0 C-5 -5 -2 1 1 -3 C3 -6 6 -5 8 -3 L8 4 L-1 8 L-8 5Z" fill="#646464"/><path d="M-8 0 C-5 -5 -2 1 1 -3 C3 -6 6 -5 8 -3 L0 1 C-2 3 -5 0 -8 0Z" fill="#757575"/><path d="M-1 8 L-1 2 L8 -3 L8 4Z" fill="#3e3e3e" opacity="0.6"/></svg>
<span class="tx" style="left:298.0px;top:90.4px;font-size:11px;font-weight:normal;color:#7c7c7c">边界切除</span>
<svg class="abs" style="left:353.5px;top:37.5px" width="21.0" height="21.0" viewBox="-10 -10 20 20"><path d="M-6 -2 Q-5 -7 0 -7 L6 -6 L6 4 L-1 7 L-6 5Z" fill="#646464"/><path d="M-6 -2 Q-5 -7 0 -7 L6 -6 Q1 -5 0 0 Z" fill="#757575"/><path d="M0 0 L6 -6 L6 4 L-1 7Z" fill="#3e3e3e" opacity="0.55"/></svg>
<span class="tx" style="left:353.5px;top:60.4px;font-size:11px;font-weight:normal;color:#7c7c7c">圆角</span>
<svg class="abs" style="left:361px;top:100.5px" width="6" height="4" viewBox="0 0 6 4"><path d="M0 0H6L3 3.5Z" fill="#808080"/></svg>
<svg class="abs" style="left:383.0px;top:38.0px" width="20.0" height="20.0" viewBox="-10 -10 20 20"><path d="M-5 -7v5M-5 -4.500h3.500M4 -7v5M4 -4.500h-3.500M-5 2v5M-5 4.500h3.500M4 2v5M4 4.500h-3.500" stroke="#646464" stroke-width="2" fill="none"/></svg>
<span class="tx" style="left:382.0px;top:60.4px;font-size:11px;font-weight:normal;color:#7c7c7c">线性</span>
<span class="tx" style="left:382.0px;top:75.4px;font-size:11px;font-weight:normal;color:#7c7c7c">阵列</span>
<svg class="abs" style="left:389px;top:100.5px" width="6" height="4" viewBox="0 0 6 4"><path d="M0 0H6L3 3.5Z" fill="#808080"/></svg>
<svg class="abs" style="left:408.5px;top:38.5px" width="19.0" height="19.0" viewBox="-10 -10 20 20"><path d="M-7 6 L3 -7 L6 -6 L6 4 L-3 8Z" fill="#646464"/><path d="M-4 5 L3 -4 L3 3Z" fill="#3e3e3e"/><path d="M-7 6 L-3 8 L6 4" stroke="#757575" stroke-width="1" fill="none"/></svg>
<span class="tx" style="left:433.0px;top:41.4px;font-size:11px;font-weight:normal;color:#7c7c7c">筋</span>
<svg class="abs" style="left:408.5px;top:63.0px" width="19.0" height="19.0" viewBox="-10 -10 20 20"><path d="M-8 -2 L-1 -6 L8 -1 L8 6 L0 8 L-8 5Z" fill="#646464"/><path d="M-8 -2 L-1 -6 L8 -1 L0 1Z" fill="#757575"/><path d="M0 1 L8 -1 L8 6 L0 8Z" fill="#3e3e3e" opacity="0.5"/></svg>
<span class="tx" style="left:433.0px;top:65.9px;font-size:11px;font-weight:normal;color:#7c7c7c">拔模</span>
<svg class="abs" style="left:408.5px;top:87.5px" width="19.0" height="19.0" viewBox="-10 -10 20 20"><path d="M-7 -5 L0 -7 L7 -5 L7 5 L0 8 L-7 5Z" fill="#646464"/><path d="M-5 -3.500 L0 -5 L5 -3.500 L5 3 L0 5 L-5 3Z" fill="#3e3e3e"/><path d="M0 -5 V5" stroke="#646464" stroke-width="0.800"/></svg>
<span class="tx" style="left:433.0px;top:90.4px;font-size:11px;font-weight:normal;color:#7c7c7c">抽壳</span>
<svg class="abs" style="left:463.5px;top:38.5px" width="19.0" height="19.0" viewBox="-10 -10 20 20"><path d="M-8 -4 V4 A8 3.500 0 0 0 8 4 V-4Z" fill="#646464"/><ellipse cx="0" cy="-4" rx="8" ry="3.500" fill="#757575"/><path d="M-4 2h3v3h-3zM1 2h4v3" stroke="#3e3e3e" stroke-width="1" fill="none"/></svg>
<span class="tx" style="left:488.0px;top:41.4px;font-size:11px;font-weight:normal;color:#7c7c7c">包覆</span>
<svg class="abs" style="left:463.5px;top:63.0px" width="19.0" height="19.0" viewBox="-10 -10 20 20"><path d="M-2 -6 L6 -7 L7 2 L0 4Z" fill="#757575"/><path d="M-7 -1 L-1 -3 L2 5 L-5 8Z" fill="#646464"/><path d="M-7 -1 L-5 8 L-7 6Z" fill="#3e3e3e"/></svg>
<span class="tx" style="left:488.0px;top:65.9px;font-size:11px;font-weight:normal;color:#7c7c7c">相交</span>
<svg class="abs" style="left:463.5px;top:87.5px" width="19.0" height="19.0" viewBox="-10 -10 20 20"><path d="M-8 -4 h3 v2.500 h2.500 v3 h-2.500 v2.500 h-3Z M8 -4 h-3 v2.500 h-2.500 v3 h2.500 v2.500 h3Z" fill="#646464"/><path d="M0 -8 V8" stroke="#646464" stroke-width="1.200"/></svg>
<span class="tx" style="left:488.0px;top:90.4px;font-size:11px;font-weight:normal;color:#7c7c7c">镜向</span>
<svg class="abs" style="left:521.5px;top:38.5px" width="19.0" height="19.0" viewBox="-10 -10 20 20"><circle cx="-5" cy="-5" r="2.500" fill="none" stroke="#646464" stroke-width="1.500"/><path d="M-2 -2 L6 -5 L6 4 L-2 7Z" fill="#646464"/><rect x="1" y="-1" width="2" height="5" fill="#3e3e3e"/></svg>
<span class="tx" style="left:520.0px;top:60.4px;font-size:11px;font-weight:normal;color:#7c7c7c">参考</span>
<span class="tx" style="left:520.9px;top:75.4px;font-size:11px;font-weight:normal;color:#7c7c7c">几...</span>
<svg class="abs" style="left:528px;top:100.5px" width="6" height="4" viewBox="0 0 6 4"><path d="M0 0H6L3 3.5Z" fill="#808080"/></svg>
<svg class="abs" style="left:550.0px;top:38.0px" width="20.0" height="20.0" viewBox="-10 -10 20 20"><path d="M-7 -6 C-1 -8 1 -2 -3 2 C-6 6 2 8 5 3 C7 -1 4 -6 8 -7" stroke="#646464" stroke-width="2" fill="none"/></svg>
<span class="tx" style="left:549.0px;top:60.4px;font-size:11px;font-weight:normal;color:#7c7c7c">曲线</span>
<svg class="abs" style="left:557px;top:100.5px" width="6" height="4" viewBox="0 0 6 4"><path d="M0 0H6L3 3.5Z" fill="#808080"/></svg>
<svg class="abs" style="left:593.5px;top:38.5px" width="21.0" height="21.0" viewBox="-10 -10 20 20"><path d="M-7 -6 L6 0 L6 4 L-7 -2Z" fill="#646464"/><path d="M-7 -2 L6 4 L8 7 L-5 1Z" fill="#757575"/><path d="M-5 -5v2.500M-2 -3.600v2.500M1 -2.200v2.500M4 -0.800v2.500" stroke="#3e3e3e" stroke-width="1"/></svg>
<div class="t dis" style="left:564px;width:80px;top:60px;">Instant3D</div>
<svg class="abs" style="left:1848px;top:93px" width="14" height="9" viewBox="0 0 14 9"><path d="M1.5 8L7 2L12.5 8" stroke="#fff" stroke-width="2" fill="none"/></svg>
<div id="tabs"><div class="tab sel" style="left:0px;width:37px"></div><span class="tx" style="left:5.5px;top:3.2px;font-size:13px;font-weight:normal;color:#f4f4f4">特征</span><div class="tab" style="left:36px;width:37px"></div><span class="tx" style="left:41.5px;top:3.2px;font-size:13px;font-weight:normal;color:#f4f4f4">草图</span><div class="tab" style="left:72px;width:63px"></div><span class="tx" style="left:77.5px;top:3.2px;font-size:13px;font-weight:normal;color:#f4f4f4">草图油墨</span><div class="tab" style="left:134px;width:38px"></div><span class="tx" style="left:140.0px;top:3.2px;font-size:13px;font-weight:normal;color:#f4f4f4">曲面</span><div class="tab" style="left:171px;width:38px"></div><span class="tx" style="left:177.0px;top:3.2px;font-size:13px;font-weight:normal;color:#f4f4f4">钣金</span><div class="tab" style="left:208px;width:62px"></div><span class="tx" style="left:213.0px;top:3.2px;font-size:13px;font-weight:normal;color:#f4f4f4">结构系统</span><div class="tab" style="left:269px;width:38px"></div><span class="tx" style="left:275.0px;top:3.2px;font-size:13px;font-weight:normal;color:#f4f4f4">焊件</span><div class="tab" style="left:306px;width:63px"></div><span class="tx" style="left:311.5px;top:3.2px;font-size:13px;font-weight:normal;color:#f4f4f4">模具工具</span><div class="tab" style="left:368px;width:63px"></div><span class="tx" style="left:373.5px;top:3.2px;font-size:13px;font-weight:normal;color:#f4f4f4">网格建模</span><div class="tab" style="left:430px;width:63px"></div><span class="tx" style="left:435.5px;top:3.2px;font-size:13px;font-weight:normal;color:#f4f4f4">数据迁移</span><div class="tab" style="left:492px;width:63px"></div><span class="tx" style="left:497.5px;top:3.2px;font-size:13px;font-weight:normal;color:#f4f4f4">直接编辑</span><div class="tab" style="left:554px;width:38px"></div><span class="tx" style="left:560.0px;top:3.2px;font-size:13px;font-weight:normal;color:#f4f4f4">标注</span><div class="tab" style="left:591px;width:38px"></div><span class="tx" style="left:597.0px;top:3.2px;font-size:13px;font-weight:normal;color:#f4f4f4">评估</span><div class="tab" style="left:628px;width:105px;font-size:12px">MBD Dimensions</div><div class="tab" style="left:732px;width:63px"></div><span class="tx" style="left:737.5px;top:3.2px;font-size:13px;font-weight:normal;color:#f4f4f4">渲染工具</span><div class="tab" style="left:794px;width:113px"></div><span class="tx" style="left:796.2px;top:3.8px;font-size:12px;font-weight:normal;color:#f4f4f4">SOLIDWORKS 插件</span><div class="tab" style="left:906px;width:39px;font-size:12px">MBD</div><div class="tab" style="left:944px;width:120px;font-size:12px">SOLIDWORKS CAM</div></div>
<div id="left"><div class="abs" style="left:0;top:0;width:353px;height:1px;background:#8996a0"></div><div class="abs" style="left:3px;top:0px;width:24px;height:2px;background:repeating-linear-gradient(90deg,#9a9a9a 0 2px,transparent 2px 3px)"></div><svg class="abs" style="left:3px;top:10px" width="22" height="22" viewBox="0 0 22 22"><path d="M3 6 L8 3 L19 4 L19 15 L12 19 L3 16Z" fill="#535353" stroke="#727272" stroke-width="1.2"/><rect x="8" y="8" width="9" height="9" fill="#606060"/></svg><svg class="abs" style="left:3px;top:34px" width="22" height="22" viewBox="0 0 22 22"><path d="M3 6 L8 3 L19 4 L19 15 L12 19 L3 16Z" fill="#535353" stroke="#727272" stroke-width="1.2"/><path d="M3 6 L12 8 L12 19 M12 8 L19 4" stroke="#727272" fill="none"/><rect x="7" y="9" width="8" height="7" fill="none" stroke="#727272"/></svg><svg class="abs" style="left:3px;top:59px" width="22" height="22" viewBox="0 0 22 22"><path d="M3 6 L8 3 L19 4 L19 15 L12 19 L3 16Z" fill="#535353" stroke="#727272" stroke-width="1.2"/><path d="M3 6 L12 8 L12 19 M12 8 L19 4 M8 3 V13 L3 16 M8 13 L19 15" stroke="#727272" fill="none"/></svg><svg class="abs" style="left:3px;top:83px" width="22" height="22" viewBox="0 0 22 22"><path d="M3 6 L8 3 L19 4 L19 15 L12 19 L3 16Z" fill="#535353" stroke="#727272" stroke-width="1.2"/><path d="M3 6 L12 8 L12 19 M12 8 L19 4" stroke="#727272" fill="none"/><rect x="4" y="8" width="7" height="8" fill="#5e5e5e"/></svg><svg class="abs" style="left:3px;top:108px" width="22" height="22" viewBox="0 0 22 22"><path d="M3 6 L8 3 L19 4 L19 15 L12 19 L3 16Z" fill="#535353" stroke="#727272" stroke-width="1.2"/><path d="M3 6 L12 8 L12 19 M12 8 L19 4 M8 3 V13 L3 16 M8 13 L19 15" stroke="#727272" fill="none"/></svg><svg class="abs" style="left:3px;top:133px" width="22" height="22" viewBox="0 0 22 22"><path d="M3 6 L8 3 L19 4 L19 15 L12 19 L3 16Z" fill="#535353" stroke="#727272" stroke-width="1.2"/><path d="M3 6 L12 8 L12 19 M12 8 L19 4 M8 3 V13 L3 16 M8 13 L19 15" stroke="#727272" fill="none"/><rect x="5" y="9" width="6" height="6" fill="#616161"/></svg><svg class="abs" style="left:3px;top:158px" width="22" height="22" viewBox="0 0 22 22"><path d="M3 6 L8 3 L19 4 L19 15 L12 19 L3 16Z" fill="#535353" stroke="#727272" stroke-width="1.2"/><path d="M11 5 L17 11 L11 17 L5 11Z" fill="#636363" stroke="#757575"/></svg><div class="hl" style="left:3px;top:183px;width:24px;background:#3a3a3a"></div><svg class="abs" style="left:4px;top:189px" width="20" height="18" viewBox="0 0 20 18"><rect x="2" y="2" width="14" height="11" fill="none" stroke="#6a6a6a" stroke-width="1.5"/><rect x="9" y="9" width="8" height="6" fill="#666"/></svg><svg class="abs" style="left:4px;top:213px" width="20" height="18" viewBox="0 0 20 18"><rect x="2" y="2" width="14" height="11" fill="none" stroke="#6a6a6a" stroke-width="1.5"/><rect x="9" y="9" width="8" height="6" fill="#666"/></svg><svg class="abs" style="left:4px;top:238px" width="20" height="18" viewBox="0 0 20 18"><rect x="2" y="2" width="14" height="11" fill="none" stroke="#6a6a6a" stroke-width="1.5"/><rect x="9" y="9" width="8" height="6" fill="#666"/></svg><div class="hl" style="left:3px;top:262px;width:24px;background:#3a3a3a"></div><svg class="abs" style="left:4px;top:268px" width="20" height="18" viewBox="0 0 20 18"><rect x="2" y="2" width="11" height="10" fill="#5a5a5a" stroke="#6c6c6c"/><rect x="7" y="6" width="11" height="10" fill="#5a5a5a" stroke="#6c6c6c"/></svg><svg class="abs" style="left:4px;top:293px" width="20" height="18" viewBox="0 0 20 18"><rect x="2" y="2" width="11" height="10" fill="#5a5a5a" stroke="#6c6c6c"/><rect x="7" y="6" width="11" height="10" fill="#5a5a5a" stroke="#6c6c6c"/></svg><div class="hl" style="left:3px;top:318px;width:24px;background:#3a3a3a"></div><div class="abs" style="left:187px;top:8px;width:6px;height:6px;border-radius:3px;background:radial-gradient(circle at 40% 35%,#fff,#999)"></div><div class="fmtab" style="left:29px;background:#2d2d2d"><svg width="33" height="24" viewBox="0 0 34 25"><path d="M9 6 L14 3.5 L20 6 L20 12 L25 12 L25 18 L17 22 L9 18Z" fill="#f2c417" stroke="#8a6a00" stroke-width="1"/><path d="M9 6 L15 8.5 L20 6 M15 8.5 V14 L25 12 M15 14 L17 22" stroke="#8a6a00" fill="none" stroke-width="0.8"/></svg></div><div class="fmtab" style="left:63px;background:#2d2d2d"><svg width="33" height="24" viewBox="0 0 34 25"><rect x="9" y="4" width="17" height="17" fill="#f4f4f4" stroke="#888"/><rect x="9" y="4" width="17" height="3" fill="#3a8fc8"/><path d="M11 10h3M11 14h3M11 18h3" stroke="#2f7fc0" stroke-width="2"/><path d="M16 10h8M16 14h8M16 18h8" stroke="#666" stroke-width="1.2"/></svg></div><div class="fmtab" style="left:97px;background:#4a4a4a"><svg width="33" height="24" viewBox="0 0 34 25"><rect x="13" y="3" width="7" height="7" fill="#f4f4f4"/><rect x="17" y="10" width="6" height="6" fill="#f4f4f4"/><rect x="17" y="17" width="6" height="5" fill="#f4f4f4"/><path d="M11.5 4 V20 M11.5 13 H16 M11.5 20 H16" stroke="#ddd" fill="none" stroke-width="1.2"/></svg></div><div class="fmtab" style="left:131px;background:#2d2d2d"><svg width="33" height="24" viewBox="0 0 34 25"><circle cx="17" cy="12.5" r="7" fill="none" stroke="#9a9a9a" stroke-width="1.4"/><circle cx="17" cy="12.5" r="3" fill="none" stroke="#9a9a9a" stroke-width="1.2"/><path d="M17 3V22M7.5 12.5H26.5" stroke="#9a9a9a" stroke-width="1.2"/></svg></div><div class="fmtab" style="left:165px;background:#2d2d2d"><svg width="33" height="24" viewBox="0 0 34 25"><circle cx="17" cy="12.5" r="8.5" fill="#2a5fd0"/><path d="M17 12.5 L17 4 A8.5 8.5 0 0 1 25 10Z" fill="#e03030"/><path d="M17 12.5 L25 10 A8.5 8.5 0 0 1 21 20Z" fill="#f0c020"/><path d="M17 12.5 L21 20 A8.5 8.5 0 0 1 9.5 16.5Z" fill="#30a030"/><path d="M17 12.5 L17 4 L22 6Z" fill="#111"/></svg></div><div class="fmtab" style="left:199px;background:#2d2d2d"><svg width="33" height="24" viewBox="0 0 34 25"><path d="M8 7 L13 3 L25 3 L25 17 L20 22 L8 22Z" fill="#e8f2fa" stroke="#6a8aa0"/><path d="M8 7 H20 V22 M20 7 L25 3" stroke="#6a8aa0" fill="none"/><path d="M8 7 L14 14 L20 7Z M10 5 L16 5 L13 9Z" fill="#2f86c9"/></svg></div><div class="fmtab" style="left:233px;background:#2d2d2d"><svg width="33" height="24" viewBox="0 0 34 25"><rect x="8" y="3" width="18" height="19" fill="#111" stroke="#ddd" stroke-width="1.5"/><path d="M13 5 H21 L18.5 11 V14 L21 19 H13 L15.5 14 V11Z" fill="#3a9ad8"/><rect x="11" y="19" width="12" height="2" fill="#cde"/></svg></div><div class="fmtab" style="left:267px;background:#2d2d2d"><svg width="33" height="24" viewBox="0 0 34 25"><rect x="9" y="2" width="16" height="20" fill="#bdbdbd"/><rect x="11" y="3" width="12" height="5" fill="#eee" stroke="#666" stroke-width="0.6"/><rect x="13.5" y="8" width="7" height="3" fill="#888"/><path d="M14.5 11 H19.5 V19 L17 22 L14.5 19Z" fill="#d8a820" stroke="#7a5a00" stroke-width="0.6"/><path d="M14.5 13L19.5 15M14.5 16L19.5 18" stroke="#7a5a00" stroke-width="0.8"/></svg></div><div class="hl" style="left:29px;top:47px;width:323px"></div><span class="tx" style="left:178.0px;top:54.7px;font-size:13px;font-weight:bold;color:#ffffff">配置</span><div class="hl" style="left:29px;top:74px;width:323px"></div><svg class="abs" style="left:35px;top:90px" width="8" height="5" viewBox="0 0 8 5"><path d="M0 0H8L4 4.5Z" fill="#f0f0f0"/></svg><svg class="abs" style="left:53.55px;top:82.55px" width="18.900000000000002" height="18.900000000000002" viewBox="0 0 18 18"><path d="M2 5 L6 2.5 L11 4.5 L11 8 L16 10 L16 14 L10 17 L2 13.5Z" fill="#f2c417" stroke="#9a7400" stroke-width="0.9"/><path d="M2 5 L7 7 L11 4.5 M7 7 V11 L16 10 M7 11 L10 17" stroke="#9a7400" fill="none" stroke-width="0.7"/></svg><span class="tx" style="left:76.0px;top:85.1px;font-size:11.5px;font-weight:normal;color:#ececec">展示盒_凹槽底座_单人_顶背双灯_外开门版_2.4mm四壁_001</span><svg class="abs" style="left:58px;top:111px" width="8" height="5" viewBox="0 0 8 5"><path d="M0 0H8L4 4.5Z" fill="#f0f0f0"/></svg><svg class="abs" style="left:77px;top:104px" width="20" height="18" viewBox="0 0 20 18"><path d="M2 4H10M6 4V15H9" stroke="#e8e8e8" stroke-width="1.5" fill="none"/><rect x="11" y="1" width="6" height="6" fill="#f4f4f4"/><path d="M10 15.5h1.5M13 15.5h1.5M16 15.5h1.5" stroke="#e8e8e8" stroke-width="1.6"/></svg><svg class="abs" style="left:100px;top:106px" width="18" height="14" viewBox="0 0 18 14"><path d="M1 7.5 L6 12 L17 1" stroke="#3fae2a" stroke-width="2.6" fill="none"/></svg><span class="tx" style="left:122.0px;top:106.1px;font-size:11.5px;font-weight:normal;color:#ececec">默认 [ 展示盒_凹槽底座_单人_顶背双灯_外开门版_2.4mm四壁_001 ]</span><svg class="abs" style="left:80px;top:132px" width="8" height="5" viewBox="0 0 8 5"><path d="M0 0H8L4 4.5Z" fill="#f0f0f0"/></svg><svg class="abs" style="left:98.8px;top:128.8px" width="14.4" height="14.4" viewBox="0 0 18 18"><path d="M2 5 L6 2.5 L11 4.5 L11 8 L16 10 L16 14 L10 17 L2 13.5Z" fill="#f2c417" stroke="#9a7400" stroke-width="0.9"/><path d="M2 5 L7 7 L11 4.5 M7 7 V11 L16 10 M7 11 L10 17" stroke="#9a7400" fill="none" stroke-width="0.7"/></svg><svg class="abs" style="left:108px;top:121px" width="9" height="9" viewBox="0 0 9 9"><rect x="1" y="1" width="7" height="7" fill="#3a8fc8" stroke="#cfe4f5" stroke-width="0.8"/></svg><span class="tx" style="left:121.0px;top:127.1px;font-size:11.5px;font-weight:normal;color:#ececec">爆炸视图1</span><svg class="abs" style="left:123px;top:146.0px" width="17" height="17" viewBox="0 0 17 17"><path d="M1 16 V11 H5 V7 H9 V2 H15 V16Z" fill="#eeeeee"/><path d="M1 11 H5 V7 H9 V2 H15" fill="none" stroke="#2b7fc0" stroke-width="2.4"/></svg><span class="tx" style="left:144.0px;top:147.1px;font-size:11.5px;font-weight:normal;color:#ececec">爆炸步骤1</span><svg class="abs" style="left:123px;top:166.8px" width="17" height="17" viewBox="0 0 17 17"><path d="M1 16 V11 H5 V7 H9 V2 H15 V16Z" fill="#eeeeee"/><path d="M1 11 H5 V7 H9 V2 H15" fill="none" stroke="#2b7fc0" stroke-width="2.4"/></svg><span class="tx" style="left:144.0px;top:167.9px;font-size:11.5px;font-weight:normal;color:#ececec">爆炸步骤2</span><svg class="abs" style="left:123px;top:187.60000000000002px" width="17" height="17" viewBox="0 0 17 17"><path d="M1 16 V11 H5 V7 H9 V2 H15 V16Z" fill="#eeeeee"/><path d="M1 11 H5 V7 H9 V2 H15" fill="none" stroke="#2b7fc0" stroke-width="2.4"/></svg><span class="tx" style="left:144.0px;top:188.7px;font-size:11.5px;font-weight:normal;color:#ececec">爆炸步骤3</span><svg class="abs" style="left:123px;top:208.39999999999998px" width="17" height="17" viewBox="0 0 17 17"><path d="M1 16 V11 H5 V7 H9 V2 H15 V16Z" fill="#eeeeee"/><path d="M1 11 H5 V7 H9 V2 H15" fill="none" stroke="#2b7fc0" stroke-width="2.4"/></svg><span class="tx" style="left:144.0px;top:209.5px;font-size:11.5px;font-weight:normal;color:#ececec">爆炸步骤4</span><svg class="abs" style="left:123px;top:229.2px" width="17" height="17" viewBox="0 0 17 17"><path d="M1 16 V11 H5 V7 H9 V2 H15 V16Z" fill="#eeeeee"/><path d="M1 11 H5 V7 H9 V2 H15" fill="none" stroke="#2b7fc0" stroke-width="2.4"/></svg><span class="tx" style="left:144.0px;top:230.3px;font-size:11.5px;font-weight:normal;color:#ececec">爆炸步骤5</span><svg class="abs" style="left:123px;top:250.0px" width="17" height="17" viewBox="0 0 17 17"><path d="M1 16 V11 H5 V7 H9 V2 H15 V16Z" fill="#eeeeee"/><path d="M1 11 H5 V7 H9 V2 H15" fill="none" stroke="#2b7fc0" stroke-width="2.4"/></svg><span class="tx" style="left:144.0px;top:251.1px;font-size:11.5px;font-weight:normal;color:#ececec">爆炸步骤6</span><svg class="abs" style="left:123px;top:270.8px" width="17" height="17" viewBox="0 0 17 17"><path d="M1 16 V11 H5 V7 H9 V2 H15 V16Z" fill="#eeeeee"/><path d="M1 11 H5 V7 H9 V2 H15" fill="none" stroke="#2b7fc0" stroke-width="2.4"/></svg><span class="tx" style="left:144.0px;top:271.9px;font-size:11.5px;font-weight:normal;color:#ececec">爆炸步骤7</span><div class="abs" style="left:28px;top:938px;width:324px;height:17px;background:#f0f0f0"></div><div class="abs" style="left:45px;top:944px;width:220px;height:7px;background:#8c8c8c"></div><div class="hl" style="left:28px;top:956px;width:324px;background:#3e3e3e"></div><span class="tx" style="left:149.3px;top:960.0px;font-size:12.5px;font-weight:bold;color:#ffffff">显示状态(链接)</span><div class="hl" style="left:28px;top:978px;width:324px;background:#7a7a7a"></div><svg class="abs" style="left:53px;top:980px" width="20" height="19" viewBox="0 0 20 19"><circle cx="8.5" cy="8.5" r="7.5" fill="#dfe6ec"/><circle cx="6.5" cy="6" r="3.5" fill="#fff"/><path d="M5 2 A8 8 0 0 1 17 8" stroke="#2f86c9" stroke-width="1.6" fill="none"/><path d="M11 13h7M11 16h7" stroke="#2f86c9" stroke-width="1.8"/></svg><span class="tx" style="left:77.0px;top:982.1px;font-size:11.5px;font-weight:normal;color:#ececec">&lt;默认&gt;_显示状态 1</span><div class="abs" style="left:28px;top:1029px;width:324px;height:2px;background:#6c6c6c"></div><div class="abs" style="left:186px;top:1029px;width:8px;height:1px;background:#9a9a9a"></div></div>
<div class="abs" style="left:354px;top:621px;width:7px;height:36px;background:#3c3c3c;border-radius:0 2px 2px 0"></div><div class="abs" style="left:355px;top:636px;width:4px;height:4px;border-radius:2px;background:#ddd"></div>
<div id="btabs"><div class="abs" style="left:29px;top:0;width:64px;height:16px;background:#9aa2b8;border:1px solid #6f7686;box-sizing:border-box"></div><svg class="abs" style="left:30px;top:1px" width="15" height="14" viewBox="0 0 15 14"><rect x="0" y="0" width="15" height="14" fill="#a7aec2" stroke="#7d8496" stroke-width="0.8"/><path d="M5 3V10M11 3L6 6.5L11 10Z" fill="#7d8499" stroke="#7d8499" stroke-width="1"/></svg><svg class="abs" style="left:46px;top:1px" width="15" height="14" viewBox="0 0 15 14"><rect x="0" y="0" width="15" height="14" fill="#a7aec2" stroke="#7d8496" stroke-width="0.8"/><path d="M10 3L5 6.5L10 10Z" fill="#7d8499" stroke="#7d8499" stroke-width="1"/></svg><svg class="abs" style="left:62px;top:1px" width="15" height="14" viewBox="0 0 15 14"><rect x="0" y="0" width="15" height="14" fill="#a7aec2" stroke="#7d8496" stroke-width="0.8"/><path d="M5 3L10 6.5L5 10Z" fill="#7d8499" stroke="#7d8499" stroke-width="1"/></svg><svg class="abs" style="left:78px;top:1px" width="15" height="14" viewBox="0 0 15 14"><rect x="0" y="0" width="15" height="14" fill="#a7aec2" stroke="#7d8496" stroke-width="0.8"/><path d="M10 3V10M4 3L9 6.5L4 10Z" fill="#7d8499" stroke="#7d8499" stroke-width="1"/></svg><div class="btab" style="left:94px;width:45px;background:#4a4a4a;border-color:#4a4a4a"></div><span class="tx" style="left:103.5px;top:0.2px;font-size:13px;font-weight:normal;color:#f0f0f0">模型</span><div class="btab" style="left:139px;width:57px"></div><span class="tx" style="left:144.4px;top:0.2px;font-size:13px;font-weight:normal;color:#f0f0f0">3D 视图</span><div class="btab" style="left:196px;width:84px"></div><span class="tx" style="left:206.6px;top:0.2px;font-size:13px;font-weight:normal;color:#f0f0f0">运动算例 1</span></div>
<div id="status"><div class="t" style="left:1px;top:2px;font-size:12px;color:#f0f0f0">SOLIDWORKS Premium 2022 SP4.0</div><span class="tx" style="left:1622.0px;top:1.8px;font-size:12px;font-weight:normal;color:#f0f0f0">在编辑 零件</span><svg class="abs" style="left:1701px;top:0px" width="24" height="17" viewBox="0 0 24 17"><rect x="9" y="9" width="3" height="8" fill="#2f86c9"/><rect x="13" y="6" width="3" height="11" fill="#2f86c9"/><rect x="17" y="10" width="3" height="7" fill="#2f86c9"/><path d="M6 14 C10 12 16 8 20 2 L22 5 L22 0 L16 1 L18.5 2.5" fill="#222" stroke="#222"/><path d="M1 11 L7 1 L13 11Z" fill="#f5c400" stroke="#a07800" stroke-width="0.7"/><rect x="6.4" y="4" width="1.3" height="4" fill="#000"/><rect x="6.4" y="8.8" width="1.3" height="1.3" fill="#000"/></svg><div class="t" style="left:1773px;top:2px;font-size:12px;color:#9c9c9c">MMGS</div><svg class="abs" style="left:1824px;top:8px" width="5" height="3" viewBox="0 0 5 3"><path d="M0 3H5L2.5 0Z" fill="#8a8a8a"/></svg><svg class="abs" style="left:1846px;top:1px" width="19" height="16" viewBox="0 0 19 16"><path d="M1 5 L8 1 L18 9 L12 15 L2 10Z" fill="#f4f4f4" stroke="#888" stroke-width="0.8"/><path d="M6 6L13 12M8 5L15 11M10 4L17 10" stroke="#666" stroke-width="0.9"/><circle cx="4" cy="6" r="1" fill="#555"/></svg></div>
<svg class="abs" style="left:1626px;top:1136px" width="232" height="56" viewBox="1626 1136 232 56"><text x="1631.5" y="1175" font-family="Liberation Serif, Noto Serif CJK SC, serif" font-size="34.5" font-style="italic" fill="#fff" fill-opacity="0.92" stroke="#7d7d7d" stroke-opacity="0.9" stroke-width="2" paint-order="stroke" stroke-linejoin="round">霄</text><text x="1667" y="1175" font-family="Liberation Serif, Noto Serif CJK SC, serif" font-size="34.5" font-style="italic" fill="#fff" fill-opacity="0.92" stroke="#7d7d7d" stroke-opacity="0.9" stroke-width="2" paint-order="stroke" stroke-linejoin="round">动</text><path d="M1729 1176 L1744.500 1149" stroke="#7d7d7d" stroke-width="4.200" stroke-linecap="round" opacity="0.9"/><path d="M1729 1176 L1744.500 1149" stroke="#fff" stroke-width="2" stroke-linecap="round"/><text x="1764.5 1785.3 1804 1830" y="1174" font-family="Liberation Sans, sans-serif" font-size="30" font-weight="bold" fill="#fff" fill-opacity="0.92" stroke="#7d7d7d" stroke-opacity="0.9" stroke-width="2.4" paint-order="stroke" stroke-linejoin="round">Hpoi</text></svg>
</body></html>
